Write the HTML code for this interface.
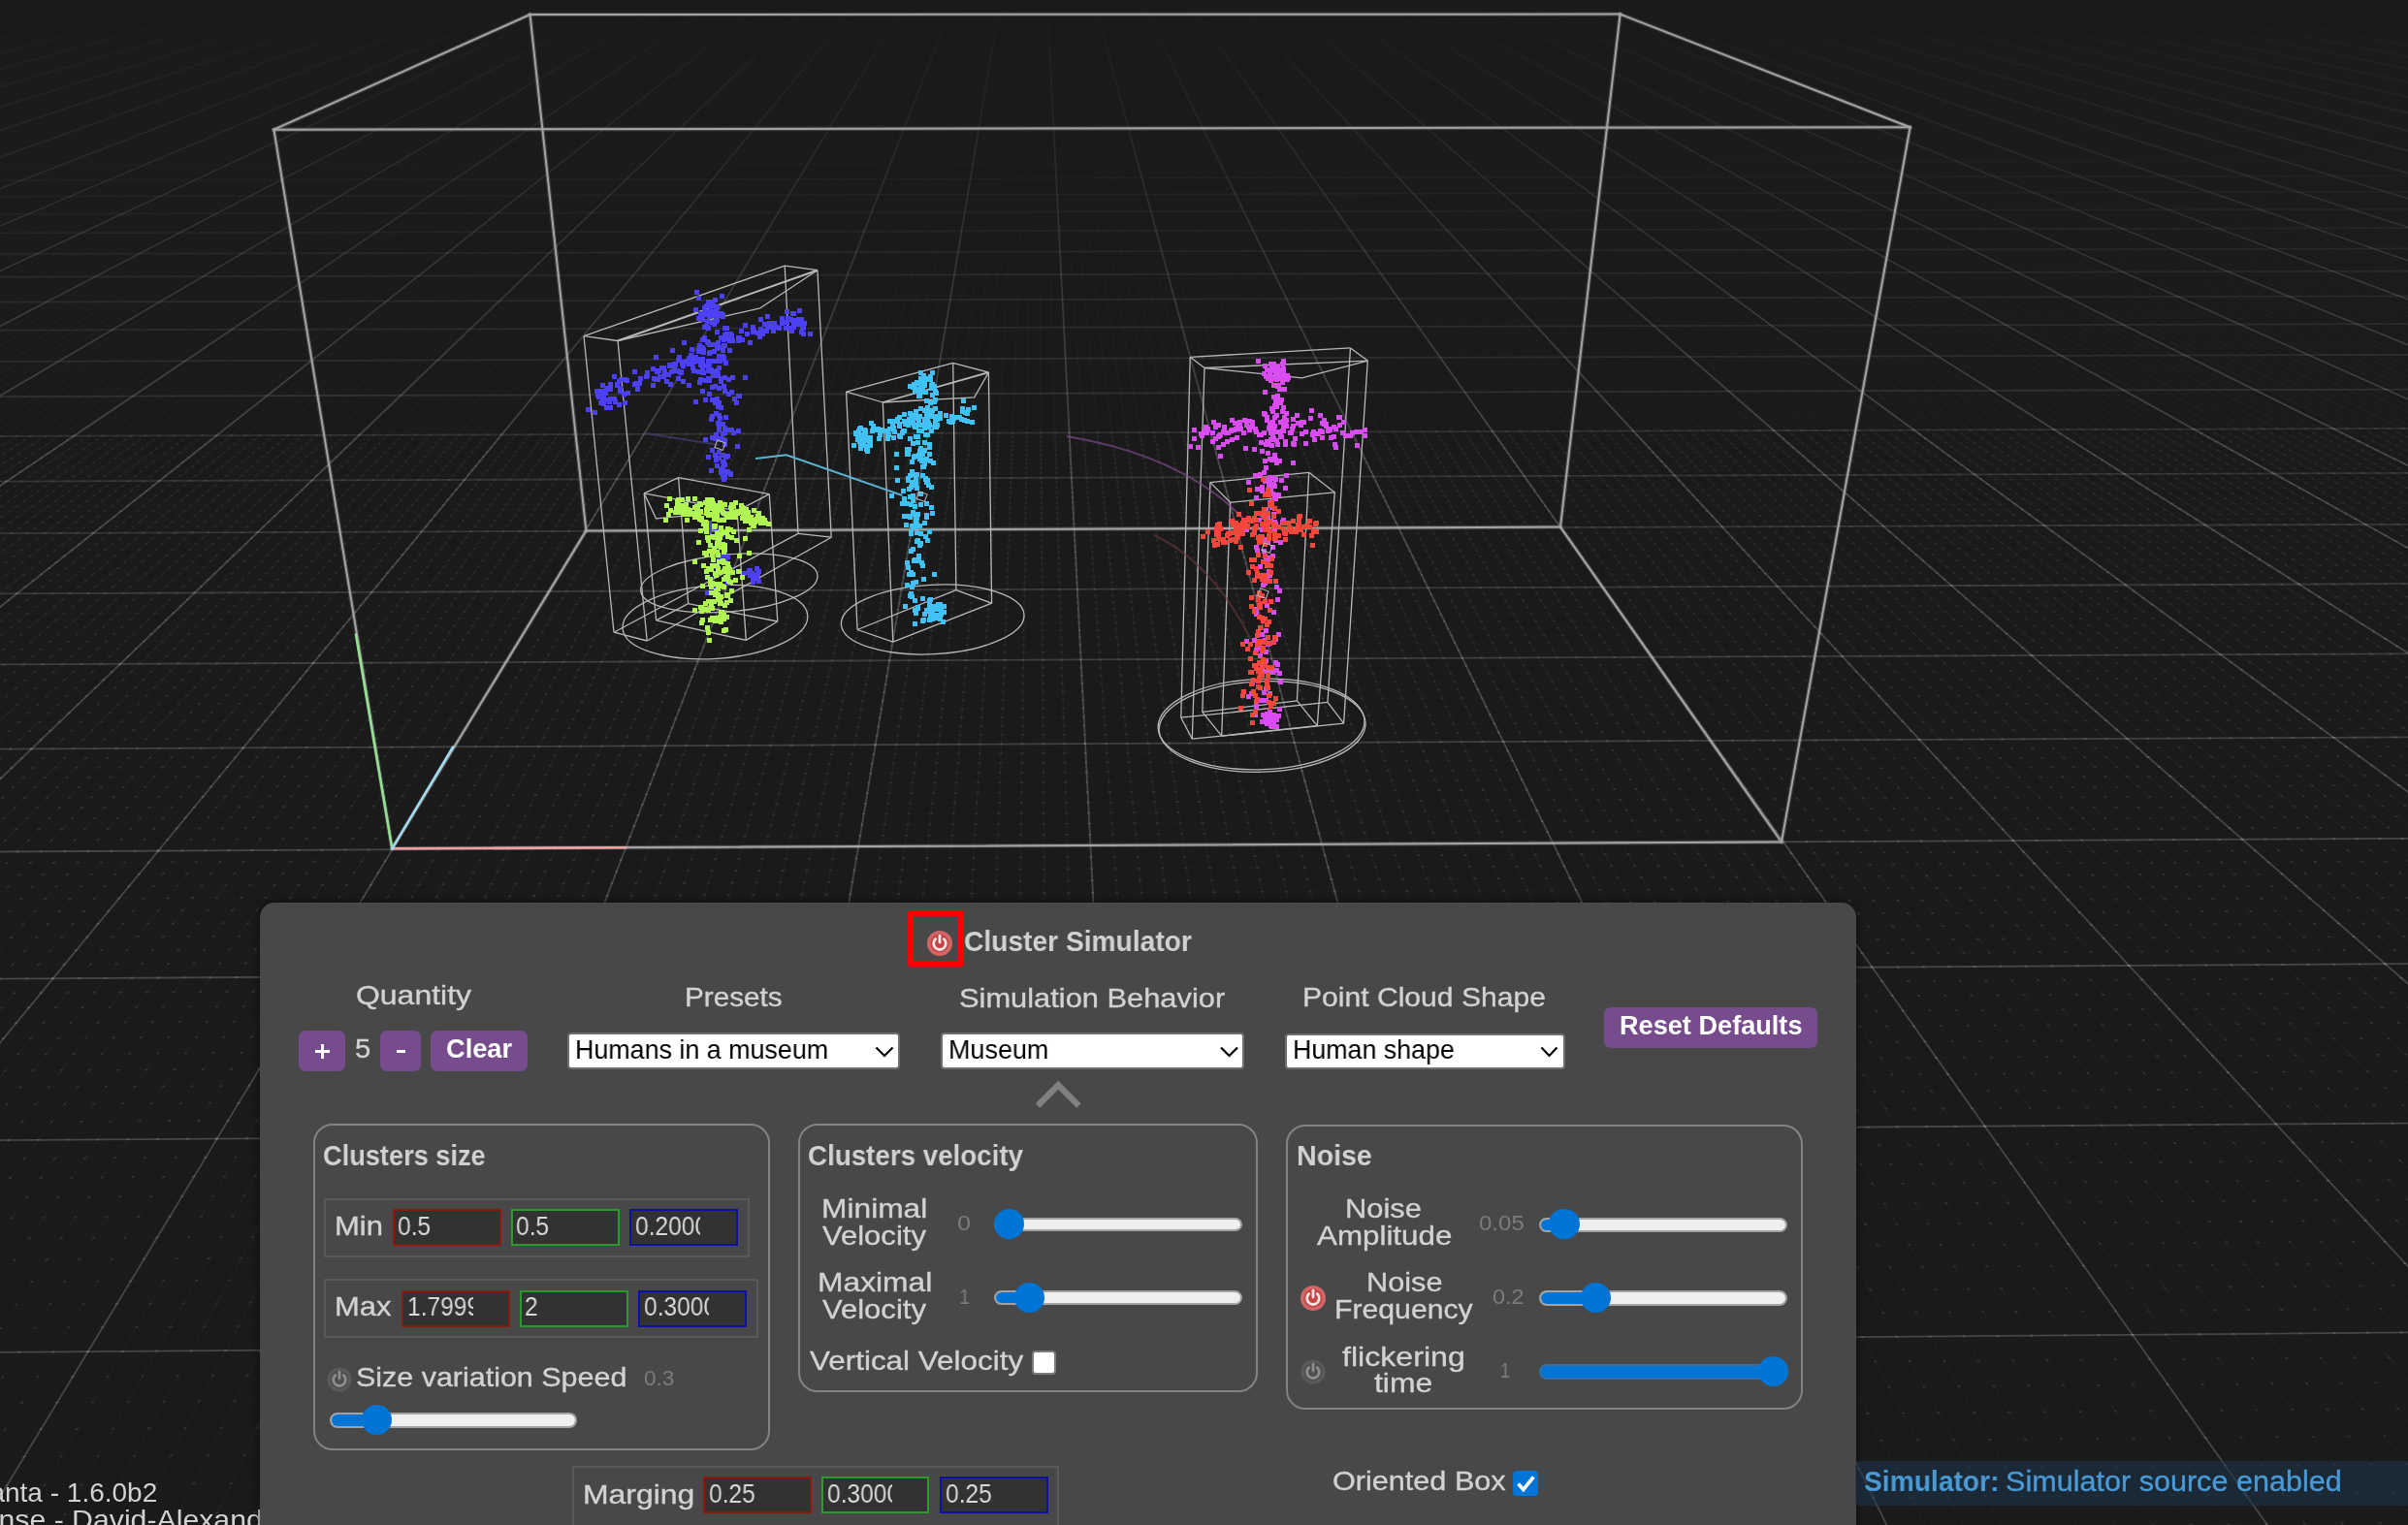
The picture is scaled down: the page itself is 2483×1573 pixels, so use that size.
<!DOCTYPE html>
<html><head><meta charset="utf-8">
<style>
html,body{margin:0;padding:0;width:2483px;height:1573px;overflow:hidden;background:#1a1a1a;font-family:"Liberation Sans",sans-serif}
#scene{position:absolute;left:0;top:0}
#scenewrap{position:absolute;left:0;top:0;width:2483px;height:1573px}
.t{position:absolute;white-space:nowrap;line-height:1;font-family:"Liberation Sans",sans-serif;transform-origin:0 0;will-change:transform}
.abs{position:absolute}
.panel{position:absolute;left:268px;top:931px;width:1646px;height:720px;background:#484848;border-radius:15px;box-shadow:0 0 6px 2px rgba(0,0,0,.35)}
.btn{position:absolute;background:#764c8d;border-radius:7px}
.sel{position:absolute;background:#fff;border:2px solid #6f6f6f;border-radius:4px;box-sizing:border-box}
.fs{position:absolute;border:2px solid #838383;border-radius:20px;box-sizing:border-box}
.row{position:absolute;border:2px solid #595959;box-sizing:border-box}
.inp{position:absolute;background:#323232;border:2px solid;overflow:hidden}
.track{position:absolute;background:#efefef;border:2px solid #a2a2a2;border-radius:9px;box-sizing:border-box;overflow:hidden}
.fill{position:absolute;left:0;top:0;bottom:0;background:#0075d5}
.thumb{position:absolute;background:#0075d5;border-radius:50%}
</style></head><body>
<div id="scenewrap"><svg id="scene" width="2483" height="1573" viewBox="0 0 2483 1573"><defs><linearGradient id="gxM" gradientUnits="userSpaceOnUse" x1="0" y1="0" x2="0" y2="1573"><stop offset="0.0000" stop-color="#fff" stop-opacity="0.0000"/><stop offset="0.0008" stop-color="#fff" stop-opacity="0.0007"/><stop offset="0.0257" stop-color="#fff" stop-opacity="0.0167"/><stop offset="0.0498" stop-color="#fff" stop-opacity="0.0321"/><stop offset="0.0820" stop-color="#fff" stop-opacity="0.0528"/><stop offset="0.1275" stop-color="#fff" stop-opacity="0.0820"/><stop offset="0.1650" stop-color="#fff" stop-opacity="0.1060"/><stop offset="0.1964" stop-color="#fff" stop-opacity="0.1262"/><stop offset="0.2351" stop-color="#fff" stop-opacity="0.1510"/><stop offset="0.2838" stop-color="#fff" stop-opacity="0.1823"/><stop offset="0.3132" stop-color="#fff" stop-opacity="0.1900"/><stop offset="0.3471" stop-color="#fff" stop-opacity="0.1900"/><stop offset="0.3864" stop-color="#fff" stop-opacity="0.1900"/><stop offset="0.4326" stop-color="#fff" stop-opacity="0.1900"/><stop offset="0.4877" stop-color="#fff" stop-opacity="0.1900"/><stop offset="0.5545" stop-color="#fff" stop-opacity="0.1900"/><stop offset="0.6373" stop-color="#fff" stop-opacity="0.1900"/><stop offset="0.7426" stop-color="#fff" stop-opacity="0.1900"/><stop offset="0.8808" stop-color="#fff" stop-opacity="0.1900"/><stop offset="1.0000" stop-color="#fff" stop-opacity="0.1900"/></linearGradient><linearGradient id="gxm" gradientUnits="userSpaceOnUse" x1="0" y1="0" x2="0" y2="1573"><stop offset="0.0000" stop-color="#fff" stop-opacity="0.0000"/><stop offset="0.0008" stop-color="#fff" stop-opacity="0.0001"/><stop offset="0.0257" stop-color="#fff" stop-opacity="0.0028"/><stop offset="0.0498" stop-color="#fff" stop-opacity="0.0054"/><stop offset="0.0820" stop-color="#fff" stop-opacity="0.0089"/><stop offset="0.1275" stop-color="#fff" stop-opacity="0.0138"/><stop offset="0.1650" stop-color="#fff" stop-opacity="0.0179"/><stop offset="0.1964" stop-color="#fff" stop-opacity="0.0213"/><stop offset="0.2351" stop-color="#fff" stop-opacity="0.0254"/><stop offset="0.2838" stop-color="#fff" stop-opacity="0.0307"/><stop offset="0.3132" stop-color="#fff" stop-opacity="0.0320"/><stop offset="0.3471" stop-color="#fff" stop-opacity="0.0320"/><stop offset="0.3864" stop-color="#fff" stop-opacity="0.0320"/><stop offset="0.4326" stop-color="#fff" stop-opacity="0.0320"/><stop offset="0.4877" stop-color="#fff" stop-opacity="0.0320"/><stop offset="0.5545" stop-color="#fff" stop-opacity="0.0320"/><stop offset="0.6373" stop-color="#fff" stop-opacity="0.0320"/><stop offset="0.7426" stop-color="#fff" stop-opacity="0.0320"/><stop offset="0.8808" stop-color="#fff" stop-opacity="0.0320"/><stop offset="1.0000" stop-color="#fff" stop-opacity="0.0320"/></linearGradient></defs><g stroke="url(#gxm)" stroke-width="1"><line x1="-20" y1="-18.5" x2="-12.1" y2="-20"/><line x1="-20" y1="-17.7" x2="-7.7" y2="-20"/><line x1="-20" y1="-16.9" x2="-3.3" y2="-20"/><line x1="-20" y1="-16.1" x2="1.1" y2="-20"/><line x1="-20" y1="-15.2" x2="5.5" y2="-20"/><line x1="-20" y1="-14.4" x2="9.8" y2="-20"/><line x1="-20" y1="-13.5" x2="14.2" y2="-20"/><line x1="-20" y1="-12.7" x2="18.6" y2="-20"/><line x1="-20" y1="-11.8" x2="23" y2="-20"/><line x1="-20" y1="-10" x2="31.8" y2="-20"/><line x1="-20" y1="-9.1" x2="36.2" y2="-20"/><line x1="-20" y1="-8.2" x2="40.6" y2="-20"/><line x1="-20" y1="-7.3" x2="44.9" y2="-20"/><line x1="-20" y1="-6.4" x2="49.3" y2="-20"/><line x1="-20" y1="-5.5" x2="53.7" y2="-20"/><line x1="-20" y1="-4.6" x2="58.1" y2="-20"/><line x1="-20" y1="-3.6" x2="62.5" y2="-20"/><line x1="-20" y1="-2.7" x2="66.9" y2="-20"/><line x1="-20" y1="-0.8" x2="75.6" y2="-20"/><line x1="-20" y1="0.2" x2="80" y2="-20"/><line x1="-20" y1="1.2" x2="84.4" y2="-20"/><line x1="-20" y1="2.2" x2="88.8" y2="-20"/><line x1="-20" y1="3.2" x2="93.2" y2="-20"/><line x1="-20" y1="4.2" x2="97.6" y2="-20"/><line x1="-20" y1="5.2" x2="102" y2="-20"/><line x1="-20" y1="6.2" x2="106.3" y2="-20"/><line x1="-20" y1="7.3" x2="110.7" y2="-20"/><line x1="-20" y1="9.4" x2="119.5" y2="-20"/><line x1="-20" y1="10.4" x2="123.9" y2="-20"/><line x1="-20" y1="11.5" x2="128.3" y2="-20"/><line x1="-20" y1="12.6" x2="132.7" y2="-20"/><line x1="-20" y1="13.7" x2="137.1" y2="-20"/><line x1="-20" y1="14.8" x2="141.4" y2="-20"/><line x1="-20" y1="15.9" x2="145.8" y2="-20"/><line x1="-20" y1="17" x2="150.2" y2="-20"/><line x1="-20" y1="18.2" x2="154.6" y2="-20"/><line x1="-20" y1="20.5" x2="163.4" y2="-20"/><line x1="-20" y1="21.6" x2="167.7" y2="-20"/><line x1="-20" y1="22.8" x2="172.1" y2="-20"/><line x1="-20" y1="24" x2="176.5" y2="-20"/><line x1="-20" y1="25.2" x2="180.9" y2="-20"/><line x1="-20" y1="26.4" x2="185.3" y2="-20"/><line x1="-20" y1="27.7" x2="189.7" y2="-20"/><line x1="-20" y1="28.9" x2="194.1" y2="-20"/><line x1="-20" y1="30.1" x2="198.4" y2="-20"/><line x1="-20" y1="32.7" x2="207.2" y2="-20"/><line x1="-20" y1="34" x2="211.6" y2="-20"/><line x1="-20" y1="35.3" x2="216" y2="-20"/><line x1="-20" y1="36.6" x2="220.4" y2="-20"/><line x1="-20" y1="37.9" x2="224.8" y2="-20"/><line x1="-20" y1="39.3" x2="229.1" y2="-20"/><line x1="-20" y1="40.6" x2="233.5" y2="-20"/><line x1="-20" y1="42" x2="237.9" y2="-20"/><line x1="-20" y1="43.4" x2="242.3" y2="-20"/><line x1="-20" y1="46.2" x2="251.1" y2="-20"/><line x1="-20" y1="47.7" x2="255.4" y2="-20"/><line x1="-20" y1="49.1" x2="259.8" y2="-20"/><line x1="-20" y1="50.6" x2="264.2" y2="-20"/><line x1="-20" y1="52.1" x2="268.6" y2="-20"/><line x1="-20" y1="53.6" x2="273" y2="-20"/><line x1="-20" y1="55.1" x2="277.4" y2="-20"/><line x1="-20" y1="56.6" x2="281.7" y2="-20"/><line x1="-20" y1="58.2" x2="286.1" y2="-20"/><line x1="-20" y1="61.3" x2="294.9" y2="-20"/><line x1="-20" y1="62.9" x2="299.3" y2="-20"/><line x1="-20" y1="64.5" x2="303.7" y2="-20"/><line x1="-20" y1="66.2" x2="308" y2="-20"/><line x1="-20" y1="67.8" x2="312.4" y2="-20"/><line x1="-20" y1="69.5" x2="316.8" y2="-20"/><line x1="-20" y1="71.2" x2="321.2" y2="-20"/><line x1="-20" y1="72.9" x2="325.6" y2="-20"/><line x1="-20" y1="74.6" x2="330" y2="-20"/><line x1="-20" y1="78.2" x2="338.7" y2="-20"/><line x1="-20" y1="80" x2="343.1" y2="-20"/><line x1="-20" y1="81.8" x2="347.5" y2="-20"/><line x1="-20" y1="83.7" x2="351.9" y2="-20"/><line x1="-20" y1="85.5" x2="356.3" y2="-20"/><line x1="-20" y1="87.4" x2="360.6" y2="-20"/><line x1="-20" y1="89.3" x2="365" y2="-20"/><line x1="-20" y1="91.3" x2="369.4" y2="-20"/><line x1="-20" y1="93.2" x2="373.8" y2="-20"/><line x1="-20" y1="97.2" x2="382.6" y2="-20"/><line x1="-20" y1="99.3" x2="386.9" y2="-20"/><line x1="-20" y1="101.3" x2="391.3" y2="-20"/><line x1="-20" y1="103.4" x2="395.7" y2="-20"/><line x1="-20" y1="105.5" x2="400.1" y2="-20"/><line x1="-20" y1="107.7" x2="404.5" y2="-20"/><line x1="-20" y1="109.9" x2="408.9" y2="-20"/><line x1="-20" y1="112.1" x2="413.2" y2="-20"/><line x1="-20" y1="114.3" x2="417.6" y2="-20"/><line x1="-20" y1="118.9" x2="426.4" y2="-20"/><line x1="-20" y1="121.2" x2="430.8" y2="-20"/><line x1="-20" y1="123.5" x2="435.1" y2="-20"/><line x1="-20" y1="125.9" x2="439.5" y2="-20"/><line x1="-20" y1="128.4" x2="443.9" y2="-20"/><line x1="-20" y1="130.8" x2="448.3" y2="-20"/><line x1="-20" y1="133.3" x2="452.7" y2="-20"/><line x1="-20" y1="135.8" x2="457.1" y2="-20"/><line x1="-20" y1="138.4" x2="461.4" y2="-20"/><line x1="-20" y1="143.7" x2="470.2" y2="-20"/><line x1="-20" y1="146.3" x2="474.6" y2="-20"/><line x1="-20" y1="149.1" x2="479" y2="-20"/><line x1="-20" y1="151.8" x2="483.3" y2="-20"/><line x1="-20" y1="154.6" x2="487.7" y2="-20"/><line x1="-20" y1="157.5" x2="492.1" y2="-20"/><line x1="-20" y1="160.4" x2="496.5" y2="-20"/><line x1="-20" y1="163.3" x2="500.9" y2="-20"/><line x1="-20" y1="166.3" x2="505.2" y2="-20"/><line x1="-20" y1="172.4" x2="514" y2="-20"/><line x1="-20" y1="175.5" x2="518.4" y2="-20"/><line x1="-20" y1="178.7" x2="522.8" y2="-20"/><line x1="-20" y1="181.9" x2="527.2" y2="-20"/><line x1="-20" y1="185.2" x2="531.5" y2="-20"/><line x1="-20" y1="188.5" x2="535.9" y2="-20"/><line x1="-20" y1="191.9" x2="540.3" y2="-20"/><line x1="-20" y1="195.3" x2="544.7" y2="-20"/><line x1="-20" y1="198.8" x2="549.1" y2="-20"/><line x1="-20" y1="206" x2="557.8" y2="-20"/><line x1="-20" y1="209.7" x2="562.2" y2="-20"/><line x1="-20" y1="213.4" x2="566.6" y2="-20"/><line x1="-20" y1="217.2" x2="571" y2="-20"/><line x1="-20" y1="221.1" x2="575.3" y2="-20"/><line x1="-20" y1="225.1" x2="579.7" y2="-20"/><line x1="-20" y1="229.1" x2="584.1" y2="-20"/><line x1="-20" y1="233.2" x2="588.5" y2="-20"/><line x1="-20" y1="237.4" x2="592.9" y2="-20"/><line x1="-20" y1="245.9" x2="601.6" y2="-20"/><line x1="-20" y1="250.4" x2="606" y2="-20"/><line x1="-20" y1="254.8" x2="610.4" y2="-20"/><line x1="-20" y1="259.4" x2="614.8" y2="-20"/><line x1="-20" y1="264.1" x2="619.1" y2="-20"/><line x1="-20" y1="268.9" x2="623.5" y2="-20"/><line x1="-20" y1="273.7" x2="627.9" y2="-20"/><line x1="-20" y1="278.7" x2="632.3" y2="-20"/><line x1="-20" y1="283.7" x2="636.6" y2="-20"/><line x1="-20" y1="294.2" x2="645.4" y2="-20"/><line x1="-20" y1="299.5" x2="649.8" y2="-20"/><line x1="-20" y1="305" x2="654.2" y2="-20"/><line x1="-20" y1="310.6" x2="658.5" y2="-20"/><line x1="-20" y1="316.4" x2="662.9" y2="-20"/><line x1="-20" y1="322.2" x2="667.3" y2="-20"/><line x1="-20" y1="328.2" x2="671.7" y2="-20"/><line x1="-20" y1="334.3" x2="676.1" y2="-20"/><line x1="-20" y1="340.6" x2="680.4" y2="-20"/><line x1="-20" y1="353.5" x2="689.2" y2="-20"/><line x1="-20" y1="360.2" x2="693.6" y2="-20"/><line x1="-20" y1="367" x2="698" y2="-20"/><line x1="-20" y1="374.1" x2="702.3" y2="-20"/><line x1="-20" y1="381.2" x2="706.7" y2="-20"/><line x1="-20" y1="388.6" x2="711.1" y2="-20"/><line x1="-20" y1="396.2" x2="715.5" y2="-20"/><line x1="-20" y1="403.9" x2="719.8" y2="-20"/><line x1="-20" y1="411.8" x2="724.2" y2="-20"/><line x1="-20" y1="428.3" x2="733" y2="-20"/><line x1="-20" y1="436.9" x2="737.4" y2="-20"/><line x1="-20" y1="445.7" x2="741.7" y2="-20"/><line x1="-20" y1="454.7" x2="746.1" y2="-20"/><line x1="-20" y1="464" x2="750.5" y2="-20"/><line x1="-20" y1="473.5" x2="754.9" y2="-20"/><line x1="-20" y1="483.4" x2="759.2" y2="-20"/><line x1="-20" y1="493.5" x2="763.6" y2="-20"/><line x1="-20" y1="503.9" x2="768" y2="-20"/><line x1="-20" y1="525.6" x2="776.8" y2="-20"/><line x1="-20" y1="536.9" x2="781.1" y2="-20"/><line x1="-20" y1="548.6" x2="785.5" y2="-20"/><line x1="-20" y1="560.7" x2="789.9" y2="-20"/><line x1="-20" y1="573.2" x2="794.3" y2="-20"/><line x1="-20" y1="586" x2="798.6" y2="-20"/><line x1="-20" y1="599.3" x2="803" y2="-20"/><line x1="-20" y1="613.1" x2="807.4" y2="-20"/><line x1="-20" y1="627.3" x2="811.8" y2="-20"/><line x1="-20" y1="657.2" x2="820.5" y2="-20"/><line x1="-20" y1="672.9" x2="824.9" y2="-20"/><line x1="-20" y1="689.3" x2="829.3" y2="-20"/><line x1="-20" y1="706.2" x2="833.7" y2="-20"/><line x1="-20" y1="723.8" x2="838" y2="-20"/><line x1="-20" y1="742.1" x2="842.4" y2="-20"/><line x1="-20" y1="761.1" x2="846.8" y2="-20"/><line x1="-20" y1="780.8" x2="851.2" y2="-20"/><line x1="-20" y1="801.4" x2="855.5" y2="-20"/><line x1="-20" y1="845.2" x2="864.3" y2="-20"/><line x1="-20" y1="868.5" x2="868.7" y2="-20"/><line x1="-20" y1="892.9" x2="873" y2="-20"/><line x1="-20" y1="918.4" x2="877.4" y2="-20"/><line x1="-20" y1="945.1" x2="881.8" y2="-20"/><line x1="-20" y1="973" x2="886.2" y2="-20"/><line x1="-20" y1="1002.4" x2="890.5" y2="-20"/><line x1="-20" y1="1033.2" x2="894.9" y2="-20"/><line x1="-20" y1="1065.6" x2="899.3" y2="-20"/><line x1="-20" y1="1135.8" x2="908.1" y2="-20"/><line x1="-20" y1="1173.8" x2="912.4" y2="-20"/><line x1="-20" y1="1214" x2="916.8" y2="-20"/><line x1="-20" y1="1256.6" x2="921.2" y2="-20"/><line x1="-20" y1="1301.8" x2="925.6" y2="-20"/><line x1="-20" y1="1349.9" x2="929.9" y2="-20"/><line x1="-20" y1="1401.1" x2="934.3" y2="-20"/><line x1="-20" y1="1455.8" x2="938.7" y2="-20"/><line x1="-20" y1="1514.2" x2="943.1" y2="-20"/><line x1="10" y1="1593" x2="951.8" y2="-20"/><line x1="49.7" y1="1593" x2="956.2" y2="-20"/><line x1="89.4" y1="1593" x2="960.6" y2="-20"/><line x1="129.1" y1="1593" x2="964.9" y2="-20"/><line x1="168.8" y1="1593" x2="969.3" y2="-20"/><line x1="208.5" y1="1593" x2="973.7" y2="-20"/><line x1="248.3" y1="1593" x2="978.1" y2="-20"/><line x1="288" y1="1593" x2="982.4" y2="-20"/><line x1="327.7" y1="1593" x2="986.8" y2="-20"/><line x1="407.1" y1="1593" x2="995.6" y2="-20"/><line x1="446.8" y1="1593" x2="999.9" y2="-20"/><line x1="486.5" y1="1593" x2="1004.3" y2="-20"/><line x1="526.2" y1="1593" x2="1008.7" y2="-20"/><line x1="565.9" y1="1593" x2="1013.1" y2="-20"/><line x1="605.6" y1="1593" x2="1017.4" y2="-20"/><line x1="645.3" y1="1593" x2="1021.8" y2="-20"/><line x1="685" y1="1593" x2="1026.2" y2="-20"/><line x1="724.7" y1="1593" x2="1030.5" y2="-20"/><line x1="804.1" y1="1593" x2="1039.3" y2="-20"/><line x1="843.8" y1="1593" x2="1043.7" y2="-20"/><line x1="883.5" y1="1593" x2="1048" y2="-20"/><line x1="923.2" y1="1593" x2="1052.4" y2="-20"/><line x1="962.9" y1="1593" x2="1056.8" y2="-20"/><line x1="1002.6" y1="1593" x2="1061.2" y2="-20"/><line x1="1042.3" y1="1593" x2="1065.5" y2="-20"/><line x1="1082" y1="1593" x2="1069.9" y2="-20"/><line x1="1121.7" y1="1593" x2="1074.3" y2="-20"/><line x1="1201.1" y1="1593" x2="1083" y2="-20"/><line x1="1240.8" y1="1593" x2="1087.4" y2="-20"/><line x1="1280.5" y1="1593" x2="1091.8" y2="-20"/><line x1="1320.2" y1="1593" x2="1096.2" y2="-20"/><line x1="1359.9" y1="1593" x2="1100.5" y2="-20"/><line x1="1399.6" y1="1593" x2="1104.9" y2="-20"/><line x1="1439.3" y1="1593" x2="1109.3" y2="-20"/><line x1="1479" y1="1593" x2="1113.6" y2="-20"/><line x1="1518.7" y1="1593" x2="1118" y2="-20"/><line x1="1598" y1="1593" x2="1126.8" y2="-20"/><line x1="1637.7" y1="1593" x2="1131.1" y2="-20"/><line x1="1677.4" y1="1593" x2="1135.5" y2="-20"/><line x1="1717.1" y1="1593" x2="1139.9" y2="-20"/><line x1="1756.8" y1="1593" x2="1144.3" y2="-20"/><line x1="1796.5" y1="1593" x2="1148.6" y2="-20"/><line x1="1836.2" y1="1593" x2="1153" y2="-20"/><line x1="1875.9" y1="1593" x2="1157.4" y2="-20"/><line x1="1915.6" y1="1593" x2="1161.7" y2="-20"/><line x1="1994.9" y1="1593" x2="1170.5" y2="-20"/><line x1="2034.6" y1="1593" x2="1174.9" y2="-20"/><line x1="2074.3" y1="1593" x2="1179.2" y2="-20"/><line x1="2114" y1="1593" x2="1183.6" y2="-20"/><line x1="2153.7" y1="1593" x2="1188" y2="-20"/><line x1="2193.3" y1="1593" x2="1192.4" y2="-20"/><line x1="2233" y1="1593" x2="1196.7" y2="-20"/><line x1="2272.7" y1="1593" x2="1201.1" y2="-20"/><line x1="2312.4" y1="1593" x2="1205.5" y2="-20"/><line x1="2391.8" y1="1593" x2="1214.2" y2="-20"/><line x1="2431.4" y1="1593" x2="1218.6" y2="-20"/><line x1="2471.1" y1="1593" x2="1223" y2="-20"/><line x1="2503" y1="1583.2" x2="1227.3" y2="-20"/><line x1="2503" y1="1534.9" x2="1231.7" y2="-20"/><line x1="2503" y1="1489.2" x2="1236.1" y2="-20"/><line x1="2503" y1="1445.8" x2="1240.4" y2="-20"/><line x1="2503" y1="1404.5" x2="1244.8" y2="-20"/><line x1="2503" y1="1365.2" x2="1249.2" y2="-20"/><line x1="2503" y1="1292.1" x2="1257.9" y2="-20"/><line x1="2503" y1="1258" x2="1262.3" y2="-20"/><line x1="2503" y1="1225.4" x2="1266.7" y2="-20"/><line x1="2503" y1="1194.3" x2="1271" y2="-20"/><line x1="2503" y1="1164.4" x2="1275.4" y2="-20"/><line x1="2503" y1="1135.8" x2="1279.8" y2="-20"/><line x1="2503" y1="1108.3" x2="1284.2" y2="-20"/><line x1="2503" y1="1081.9" x2="1288.5" y2="-20"/><line x1="2503" y1="1056.6" x2="1292.9" y2="-20"/><line x1="2503" y1="1008.8" x2="1301.6" y2="-20"/><line x1="2503" y1="986.2" x2="1306" y2="-20"/><line x1="2503" y1="964.4" x2="1310.4" y2="-20"/><line x1="2503" y1="943.4" x2="1314.7" y2="-20"/><line x1="2503" y1="923.1" x2="1319.1" y2="-20"/><line x1="2503" y1="903.5" x2="1323.5" y2="-20"/><line x1="2503" y1="884.6" x2="1327.9" y2="-20"/><line x1="2503" y1="866.3" x2="1332.2" y2="-20"/><line x1="2503" y1="848.6" x2="1336.6" y2="-20"/><line x1="2503" y1="814.9" x2="1345.3" y2="-20"/><line x1="2503" y1="798.8" x2="1349.7" y2="-20"/><line x1="2503" y1="783.2" x2="1354.1" y2="-20"/><line x1="2503" y1="768.1" x2="1358.4" y2="-20"/><line x1="2503" y1="753.5" x2="1362.8" y2="-20"/><line x1="2503" y1="739.2" x2="1367.2" y2="-20"/><line x1="2503" y1="725.4" x2="1371.6" y2="-20"/><line x1="2503" y1="712" x2="1375.9" y2="-20"/><line x1="2503" y1="698.9" x2="1380.3" y2="-20"/><line x1="2503" y1="673.9" x2="1389" y2="-20"/><line x1="2503" y1="661.9" x2="1393.4" y2="-20"/><line x1="2503" y1="650.2" x2="1397.8" y2="-20"/><line x1="2503" y1="638.8" x2="1402.1" y2="-20"/><line x1="2503" y1="627.7" x2="1406.5" y2="-20"/><line x1="2503" y1="616.9" x2="1410.9" y2="-20"/><line x1="2503" y1="606.3" x2="1415.3" y2="-20"/><line x1="2503" y1="596.1" x2="1419.6" y2="-20"/><line x1="2503" y1="586" x2="1424" y2="-20"/><line x1="2503" y1="566.7" x2="1432.7" y2="-20"/><line x1="2503" y1="557.4" x2="1437.1" y2="-20"/><line x1="2503" y1="548.3" x2="1441.5" y2="-20"/><line x1="2503" y1="539.4" x2="1445.8" y2="-20"/><line x1="2503" y1="530.7" x2="1450.2" y2="-20"/><line x1="2503" y1="522.2" x2="1454.6" y2="-20"/><line x1="2503" y1="513.9" x2="1458.9" y2="-20"/><line x1="2503" y1="505.8" x2="1463.3" y2="-20"/><line x1="2503" y1="497.9" x2="1467.7" y2="-20"/><line x1="2503" y1="482.5" x2="1476.4" y2="-20"/><line x1="2503" y1="475.1" x2="1480.8" y2="-20"/><line x1="2503" y1="467.8" x2="1485.1" y2="-20"/><line x1="2503" y1="460.7" x2="1489.5" y2="-20"/><line x1="2503" y1="453.7" x2="1493.9" y2="-20"/><line x1="2503" y1="446.8" x2="1498.3" y2="-20"/><line x1="2503" y1="440.1" x2="1502.6" y2="-20"/><line x1="2503" y1="433.5" x2="1507" y2="-20"/><line x1="2503" y1="427.1" x2="1511.4" y2="-20"/><line x1="2503" y1="414.6" x2="1520.1" y2="-20"/><line x1="2503" y1="408.5" x2="1524.5" y2="-20"/><line x1="2503" y1="402.6" x2="1528.8" y2="-20"/><line x1="2503" y1="396.7" x2="1533.2" y2="-20"/><line x1="2503" y1="391" x2="1537.6" y2="-20"/><line x1="2503" y1="385.3" x2="1541.9" y2="-20"/><line x1="2503" y1="379.8" x2="1546.3" y2="-20"/><line x1="2503" y1="374.4" x2="1550.7" y2="-20"/><line x1="2503" y1="369.1" x2="1555" y2="-20"/><line x1="2503" y1="358.7" x2="1563.8" y2="-20"/><line x1="2503" y1="353.6" x2="1568.1" y2="-20"/><line x1="2503" y1="348.6" x2="1572.5" y2="-20"/><line x1="2503" y1="343.8" x2="1576.9" y2="-20"/><line x1="2503" y1="339" x2="1581.2" y2="-20"/><line x1="2503" y1="334.3" x2="1585.6" y2="-20"/><line x1="2503" y1="329.6" x2="1590" y2="-20"/><line x1="2503" y1="325.1" x2="1594.3" y2="-20"/><line x1="2503" y1="320.6" x2="1598.7" y2="-20"/><line x1="2503" y1="311.8" x2="1607.4" y2="-20"/><line x1="2503" y1="307.5" x2="1611.8" y2="-20"/><line x1="2503" y1="303.3" x2="1616.2" y2="-20"/><line x1="2503" y1="299.2" x2="1620.5" y2="-20"/><line x1="2503" y1="295.1" x2="1624.9" y2="-20"/><line x1="2503" y1="291.1" x2="1629.3" y2="-20"/><line x1="2503" y1="287.2" x2="1633.6" y2="-20"/><line x1="2503" y1="283.3" x2="1638" y2="-20"/><line x1="2503" y1="279.5" x2="1642.4" y2="-20"/><line x1="2503" y1="272" x2="1651.1" y2="-20"/><line x1="2503" y1="268.3" x2="1655.5" y2="-20"/><line x1="2503" y1="264.7" x2="1659.8" y2="-20"/><line x1="2503" y1="261.2" x2="1664.2" y2="-20"/><line x1="2503" y1="257.7" x2="1668.6" y2="-20"/><line x1="2503" y1="254.2" x2="1672.9" y2="-20"/><line x1="2503" y1="250.8" x2="1677.3" y2="-20"/><line x1="2503" y1="247.5" x2="1681.7" y2="-20"/><line x1="2503" y1="244.2" x2="1686" y2="-20"/><line x1="2503" y1="237.7" x2="1694.8" y2="-20"/><line x1="2503" y1="234.5" x2="1699.1" y2="-20"/><line x1="2503" y1="231.4" x2="1703.5" y2="-20"/><line x1="2503" y1="228.3" x2="1707.9" y2="-20"/><line x1="2503" y1="225.3" x2="1712.2" y2="-20"/><line x1="2503" y1="222.3" x2="1716.6" y2="-20"/><line x1="2503" y1="219.3" x2="1720.9" y2="-20"/><line x1="2503" y1="216.4" x2="1725.3" y2="-20"/><line x1="2503" y1="213.6" x2="1729.7" y2="-20"/><line x1="2503" y1="207.9" x2="1738.4" y2="-20"/><line x1="2503" y1="205.1" x2="1742.8" y2="-20"/><line x1="2503" y1="202.4" x2="1747.1" y2="-20"/><line x1="2503" y1="199.7" x2="1751.5" y2="-20"/><line x1="2503" y1="197" x2="1755.9" y2="-20"/><line x1="2503" y1="194.4" x2="1760.2" y2="-20"/><line x1="2503" y1="191.8" x2="1764.6" y2="-20"/><line x1="2503" y1="189.3" x2="1769" y2="-20"/><line x1="2503" y1="186.7" x2="1773.3" y2="-20"/><line x1="2503" y1="181.8" x2="1782.1" y2="-20"/><line x1="2503" y1="179.3" x2="1786.4" y2="-20"/><line x1="2503" y1="176.9" x2="1790.8" y2="-20"/><line x1="2503" y1="174.5" x2="1795.1" y2="-20"/><line x1="2503" y1="172.2" x2="1799.5" y2="-20"/><line x1="2503" y1="169.8" x2="1803.9" y2="-20"/><line x1="2503" y1="167.5" x2="1808.2" y2="-20"/><line x1="2503" y1="165.3" x2="1812.6" y2="-20"/><line x1="2503" y1="163" x2="1817" y2="-20"/><line x1="2503" y1="158.6" x2="1825.7" y2="-20"/><line x1="2503" y1="156.5" x2="1830.1" y2="-20"/><line x1="2503" y1="154.3" x2="1834.4" y2="-20"/><line x1="2503" y1="152.2" x2="1838.8" y2="-20"/><line x1="2503" y1="150.1" x2="1843.2" y2="-20"/><line x1="2503" y1="148" x2="1847.5" y2="-20"/><line x1="2503" y1="146" x2="1851.9" y2="-20"/><line x1="2503" y1="144" x2="1856.2" y2="-20"/><line x1="2503" y1="141.9" x2="1860.6" y2="-20"/><line x1="2503" y1="138" x2="1869.3" y2="-20"/><line x1="2503" y1="136.1" x2="1873.7" y2="-20"/><line x1="2503" y1="134.2" x2="1878.1" y2="-20"/><line x1="2503" y1="132.3" x2="1882.4" y2="-20"/><line x1="2503" y1="130.4" x2="1886.8" y2="-20"/><line x1="2503" y1="128.5" x2="1891.1" y2="-20"/><line x1="2503" y1="126.7" x2="1895.5" y2="-20"/><line x1="2503" y1="124.9" x2="1899.9" y2="-20"/><line x1="2503" y1="123.1" x2="1904.2" y2="-20"/><line x1="2503" y1="119.5" x2="1913" y2="-20"/><line x1="2503" y1="117.8" x2="1917.3" y2="-20"/><line x1="2503" y1="116.1" x2="1921.7" y2="-20"/><line x1="2503" y1="114.4" x2="1926" y2="-20"/><line x1="2503" y1="112.7" x2="1930.4" y2="-20"/><line x1="2503" y1="111" x2="1934.8" y2="-20"/><line x1="2503" y1="109.3" x2="1939.1" y2="-20"/><line x1="2503" y1="107.7" x2="1943.5" y2="-20"/><line x1="2503" y1="106.1" x2="1947.9" y2="-20"/><line x1="2503" y1="102.9" x2="1956.6" y2="-20"/><line x1="2503" y1="101.3" x2="1960.9" y2="-20"/><line x1="2503" y1="99.7" x2="1965.3" y2="-20"/><line x1="2503" y1="98.2" x2="1969.7" y2="-20"/><line x1="2503" y1="96.7" x2="1974" y2="-20"/><line x1="2503" y1="95.1" x2="1978.4" y2="-20"/><line x1="2503" y1="93.6" x2="1982.8" y2="-20"/><line x1="2503" y1="92.1" x2="1987.1" y2="-20"/><line x1="2503" y1="90.7" x2="1991.5" y2="-20"/><line x1="2503" y1="87.8" x2="2000.2" y2="-20"/><line x1="2503" y1="86.3" x2="2004.6" y2="-20"/><line x1="2503" y1="84.9" x2="2008.9" y2="-20"/><line x1="2503" y1="83.5" x2="2013.3" y2="-20"/><line x1="2503" y1="82.1" x2="2017.6" y2="-20"/><line x1="2503" y1="80.7" x2="2022" y2="-20"/><line x1="2503" y1="79.4" x2="2026.4" y2="-20"/><line x1="2503" y1="78" x2="2030.7" y2="-20"/><line x1="2503" y1="76.7" x2="2035.1" y2="-20"/><line x1="2503" y1="74" x2="2043.8" y2="-20"/><line x1="2503" y1="72.7" x2="2048.2" y2="-20"/><line x1="2503" y1="71.4" x2="2052.5" y2="-20"/><line x1="2503" y1="70.1" x2="2056.9" y2="-20"/><line x1="2503" y1="68.9" x2="2061.3" y2="-20"/><line x1="2503" y1="67.6" x2="2065.6" y2="-20"/><line x1="2503" y1="66.3" x2="2070" y2="-20"/><line x1="2503" y1="65.1" x2="2074.3" y2="-20"/><line x1="2503" y1="63.9" x2="2078.7" y2="-20"/><line x1="2503" y1="61.4" x2="2087.4" y2="-20"/><line x1="2503" y1="60.2" x2="2091.8" y2="-20"/><line x1="2503" y1="59.1" x2="2096.1" y2="-20"/><line x1="2503" y1="57.9" x2="2100.5" y2="-20"/><line x1="2503" y1="56.7" x2="2104.9" y2="-20"/><line x1="2503" y1="55.6" x2="2109.2" y2="-20"/><line x1="2503" y1="54.4" x2="2113.6" y2="-20"/><line x1="2503" y1="53.3" x2="2117.9" y2="-20"/><line x1="2503" y1="52.1" x2="2122.3" y2="-20"/><line x1="2503" y1="49.9" x2="2131" y2="-20"/><line x1="2503" y1="48.8" x2="2135.4" y2="-20"/><line x1="2503" y1="47.7" x2="2139.7" y2="-20"/><line x1="2503" y1="46.6" x2="2144.1" y2="-20"/><line x1="2503" y1="45.6" x2="2148.5" y2="-20"/><line x1="2503" y1="44.5" x2="2152.8" y2="-20"/><line x1="2503" y1="43.4" x2="2157.2" y2="-20"/><line x1="2503" y1="42.4" x2="2161.5" y2="-20"/><line x1="2503" y1="41.3" x2="2165.9" y2="-20"/><line x1="2503" y1="39.3" x2="2174.6" y2="-20"/><line x1="2503" y1="38.3" x2="2179" y2="-20"/><line x1="2503" y1="37.3" x2="2183.3" y2="-20"/><line x1="2503" y1="36.3" x2="2187.7" y2="-20"/><line x1="2503" y1="35.3" x2="2192.1" y2="-20"/><line x1="2503" y1="34.3" x2="2196.4" y2="-20"/><line x1="2503" y1="33.3" x2="2200.8" y2="-20"/><line x1="2503" y1="32.3" x2="2205.1" y2="-20"/><line x1="2503" y1="31.4" x2="2209.5" y2="-20"/><line x1="2503" y1="29.5" x2="2218.2" y2="-20"/><line x1="2503" y1="28.5" x2="2222.6" y2="-20"/><line x1="2503" y1="27.6" x2="2226.9" y2="-20"/><line x1="2503" y1="26.7" x2="2231.3" y2="-20"/><line x1="2503" y1="25.7" x2="2235.6" y2="-20"/><line x1="2503" y1="24.8" x2="2240" y2="-20"/><line x1="2503" y1="23.9" x2="2244.4" y2="-20"/><line x1="2503" y1="23" x2="2248.7" y2="-20"/><line x1="2503" y1="22.1" x2="2253.1" y2="-20"/><line x1="2503" y1="20.4" x2="2261.8" y2="-20"/><line x1="2503" y1="19.5" x2="2266.2" y2="-20"/><line x1="2503" y1="18.6" x2="2270.5" y2="-20"/><line x1="2503" y1="17.8" x2="2274.9" y2="-20"/><line x1="2503" y1="16.9" x2="2279.2" y2="-20"/><line x1="2503" y1="16.1" x2="2283.6" y2="-20"/><line x1="2503" y1="15.2" x2="2287.9" y2="-20"/><line x1="2503" y1="14.4" x2="2292.3" y2="-20"/><line x1="2503" y1="13.6" x2="2296.7" y2="-20"/><line x1="2503" y1="11.9" x2="2305.4" y2="-20"/><line x1="2503" y1="11.1" x2="2309.7" y2="-20"/><line x1="2503" y1="10.3" x2="2314.1" y2="-20"/><line x1="2503" y1="9.5" x2="2318.4" y2="-20"/><line x1="2503" y1="8.7" x2="2322.8" y2="-20"/><line x1="2503" y1="7.9" x2="2327.2" y2="-20"/><line x1="2503" y1="7.1" x2="2331.5" y2="-20"/><line x1="2503" y1="6.3" x2="2335.9" y2="-20"/><line x1="2503" y1="5.6" x2="2340.2" y2="-20"/><line x1="2503" y1="4" x2="2348.9" y2="-20"/><line x1="2503" y1="3.3" x2="2353.3" y2="-20"/><line x1="2503" y1="2.5" x2="2357.7" y2="-20"/><line x1="2503" y1="1.8" x2="2362" y2="-20"/><line x1="2503" y1="1" x2="2366.4" y2="-20"/><line x1="2503" y1="0.3" x2="2370.7" y2="-20"/><line x1="2503" y1="-0.4" x2="2375.1" y2="-20"/><line x1="2503" y1="-1.2" x2="2379.4" y2="-20"/><line x1="2503" y1="-1.9" x2="2383.8" y2="-20"/><line x1="2503" y1="-3.3" x2="2392.5" y2="-20"/><line x1="2503" y1="-4" x2="2396.9" y2="-20"/><line x1="2503" y1="-4.8" x2="2401.2" y2="-20"/><line x1="2503" y1="-5.5" x2="2405.6" y2="-20"/><line x1="2503" y1="-6.1" x2="2409.9" y2="-20"/><line x1="2503" y1="-6.8" x2="2414.3" y2="-20"/><line x1="2503" y1="-7.5" x2="2418.7" y2="-20"/><line x1="2503" y1="-8.2" x2="2423" y2="-20"/><line x1="2503" y1="-8.9" x2="2427.4" y2="-20"/><line x1="2503" y1="-10.2" x2="2436.1" y2="-20"/><line x1="2503" y1="-10.9" x2="2440.4" y2="-20"/><line x1="2503" y1="-11.6" x2="2444.8" y2="-20"/><line x1="2503" y1="-12.2" x2="2449.1" y2="-20"/><line x1="2503" y1="-12.9" x2="2453.5" y2="-20"/><line x1="2503" y1="-13.5" x2="2457.9" y2="-20"/><line x1="2503" y1="-14.2" x2="2462.2" y2="-20"/><line x1="2503" y1="-14.8" x2="2466.6" y2="-20"/><line x1="2503" y1="-15.4" x2="2470.9" y2="-20"/><line x1="2503" y1="-16.7" x2="2479.6" y2="-20"/><line x1="2503" y1="-17.3" x2="2484" y2="-20"/><line x1="2503" y1="-17.9" x2="2488.3" y2="-20"/><line x1="2503" y1="-18.6" x2="2492.7" y2="-20"/><line x1="2503" y1="-19.2" x2="2497.1" y2="-20"/><line x1="2503" y1="-19.8" x2="2501.4" y2="-20"/></g><line x1="95.6" y1="1593" x2="2503" y2="1570.7" stroke="#fff" stroke-opacity="0.0160"/><line x1="-20" y1="1562.7" x2="2503" y2="1539.7" stroke="#fff" stroke-opacity="0.0160"/><line x1="-20" y1="1532.4" x2="2503" y2="1509.8" stroke="#fff" stroke-opacity="0.0160"/><line x1="-20" y1="1503.1" x2="2503" y2="1480.9" stroke="#fff" stroke-opacity="0.0160"/><line x1="-20" y1="1474.8" x2="2503" y2="1452.9" stroke="#fff" stroke-opacity="0.0160"/><line x1="-20" y1="1447.3" x2="2503" y2="1425.9" stroke="#fff" stroke-opacity="0.0160"/><line x1="-20" y1="1420.8" x2="2503" y2="1399.7" stroke="#fff" stroke-opacity="0.0160"/><line x1="-20" y1="1370.2" x2="2503" y2="1349.7" stroke="#fff" stroke-opacity="0.0160"/><line x1="-20" y1="1346" x2="2503" y2="1325.9" stroke="#fff" stroke-opacity="0.0160"/><line x1="-20" y1="1322.6" x2="2503" y2="1302.8" stroke="#fff" stroke-opacity="0.0160"/><line x1="-20" y1="1299.8" x2="2503" y2="1280.3" stroke="#fff" stroke-opacity="0.0160"/><line x1="-20" y1="1277.7" x2="2503" y2="1258.5" stroke="#fff" stroke-opacity="0.0160"/><line x1="-20" y1="1256.3" x2="2503" y2="1237.4" stroke="#fff" stroke-opacity="0.0160"/><line x1="-20" y1="1235.4" x2="2503" y2="1216.8" stroke="#fff" stroke-opacity="0.0160"/><line x1="-20" y1="1215.2" x2="2503" y2="1196.8" stroke="#fff" stroke-opacity="0.0160"/><line x1="-20" y1="1195.4" x2="2503" y2="1177.4" stroke="#fff" stroke-opacity="0.0160"/><line x1="-20" y1="1157.6" x2="2503" y2="1140" stroke="#fff" stroke-opacity="0.0160"/><line x1="-20" y1="1139.4" x2="2503" y2="1122.1" stroke="#fff" stroke-opacity="0.0160"/><line x1="-20" y1="1121.7" x2="2503" y2="1104.6" stroke="#fff" stroke-opacity="0.0160"/><line x1="-20" y1="1104.5" x2="2503" y2="1087.6" stroke="#fff" stroke-opacity="0.0160"/><line x1="-20" y1="1087.7" x2="2503" y2="1071" stroke="#fff" stroke-opacity="0.0160"/><line x1="-20" y1="1071.3" x2="2503" y2="1054.9" stroke="#fff" stroke-opacity="0.0160"/><line x1="-20" y1="1055.3" x2="2503" y2="1039.1" stroke="#fff" stroke-opacity="0.0160"/><line x1="-20" y1="1039.7" x2="2503" y2="1023.7" stroke="#fff" stroke-opacity="0.0160"/><line x1="-20" y1="1024.5" x2="2503" y2="1008.7" stroke="#fff" stroke-opacity="0.0160"/><line x1="-20" y1="995.2" x2="2503" y2="979.7" stroke="#fff" stroke-opacity="0.0160"/><line x1="-20" y1="981" x2="2503" y2="965.8" stroke="#fff" stroke-opacity="0.0160"/><line x1="-20" y1="967.2" x2="2503" y2="952.1" stroke="#fff" stroke-opacity="0.0160"/><line x1="-20" y1="953.7" x2="2503" y2="938.8" stroke="#fff" stroke-opacity="0.0160"/><line x1="-20" y1="940.4" x2="2503" y2="925.7" stroke="#fff" stroke-opacity="0.0160"/><line x1="-20" y1="927.5" x2="2503" y2="913" stroke="#fff" stroke-opacity="0.0160"/><line x1="-20" y1="914.9" x2="2503" y2="900.5" stroke="#fff" stroke-opacity="0.0160"/><line x1="-20" y1="902.5" x2="2503" y2="888.3" stroke="#fff" stroke-opacity="0.0160"/><line x1="-20" y1="890.4" x2="2503" y2="876.4" stroke="#fff" stroke-opacity="0.0160"/><line x1="-20" y1="867" x2="2503" y2="853.3" stroke="#fff" stroke-opacity="0.0158"/><line x1="-20" y1="855.7" x2="2503" y2="842.1" stroke="#fff" stroke-opacity="0.0156"/><line x1="-20" y1="844.6" x2="2503" y2="831.1" stroke="#fff" stroke-opacity="0.0155"/><line x1="-20" y1="833.7" x2="2503" y2="820.4" stroke="#fff" stroke-opacity="0.0153"/><line x1="-20" y1="823" x2="2503" y2="809.9" stroke="#fff" stroke-opacity="0.0151"/><line x1="-20" y1="812.6" x2="2503" y2="799.6" stroke="#fff" stroke-opacity="0.0149"/><line x1="-20" y1="802.3" x2="2503" y2="789.5" stroke="#fff" stroke-opacity="0.0147"/><line x1="-20" y1="792.3" x2="2503" y2="779.5" stroke="#fff" stroke-opacity="0.0146"/><line x1="-20" y1="782.4" x2="2503" y2="769.8" stroke="#fff" stroke-opacity="0.0144"/><line x1="-20" y1="763.3" x2="2503" y2="751" stroke="#fff" stroke-opacity="0.0141"/><line x1="-20" y1="754" x2="2503" y2="741.8" stroke="#fff" stroke-opacity="0.0139"/><line x1="-20" y1="744.9" x2="2503" y2="732.8" stroke="#fff" stroke-opacity="0.0138"/><line x1="-20" y1="735.9" x2="2503" y2="724" stroke="#fff" stroke-opacity="0.0136"/><line x1="-20" y1="727.1" x2="2503" y2="715.3" stroke="#fff" stroke-opacity="0.0135"/><line x1="-20" y1="718.5" x2="2503" y2="706.8" stroke="#fff" stroke-opacity="0.0133"/><line x1="-20" y1="710.1" x2="2503" y2="698.4" stroke="#fff" stroke-opacity="0.0132"/><line x1="-20" y1="701.7" x2="2503" y2="690.2" stroke="#fff" stroke-opacity="0.0130"/><line x1="-20" y1="693.6" x2="2503" y2="682.2" stroke="#fff" stroke-opacity="0.0129"/><line x1="-20" y1="677.7" x2="2503" y2="666.4" stroke="#fff" stroke-opacity="0.0126"/><line x1="-20" y1="669.9" x2="2503" y2="658.8" stroke="#fff" stroke-opacity="0.0125"/><line x1="-20" y1="662.3" x2="2503" y2="651.3" stroke="#fff" stroke-opacity="0.0124"/><line x1="-20" y1="654.8" x2="2503" y2="643.9" stroke="#fff" stroke-opacity="0.0122"/><line x1="-20" y1="647.4" x2="2503" y2="636.6" stroke="#fff" stroke-opacity="0.0121"/><line x1="-20" y1="640.2" x2="2503" y2="629.5" stroke="#fff" stroke-opacity="0.0120"/><line x1="-20" y1="633.1" x2="2503" y2="622.5" stroke="#fff" stroke-opacity="0.0119"/><line x1="-20" y1="626.1" x2="2503" y2="615.6" stroke="#fff" stroke-opacity="0.0117"/><line x1="-20" y1="619.2" x2="2503" y2="608.8" stroke="#fff" stroke-opacity="0.0116"/><line x1="-20" y1="605.7" x2="2503" y2="595.5" stroke="#fff" stroke-opacity="0.0114"/><line x1="-20" y1="599.2" x2="2503" y2="589" stroke="#fff" stroke-opacity="0.0113"/><line x1="-20" y1="592.7" x2="2503" y2="582.6" stroke="#fff" stroke-opacity="0.0112"/><line x1="-20" y1="586.3" x2="2503" y2="576.4" stroke="#fff" stroke-opacity="0.0111"/><line x1="-20" y1="580.1" x2="2503" y2="570.2" stroke="#fff" stroke-opacity="0.0109"/><line x1="-20" y1="573.9" x2="2503" y2="564.1" stroke="#fff" stroke-opacity="0.0108"/><line x1="-20" y1="567.9" x2="2503" y2="558.1" stroke="#fff" stroke-opacity="0.0107"/><line x1="-20" y1="561.9" x2="2503" y2="552.2" stroke="#fff" stroke-opacity="0.0106"/><line x1="-20" y1="556" x2="2503" y2="546.4" stroke="#fff" stroke-opacity="0.0105"/><line x1="-20" y1="544.5" x2="2503" y2="535" stroke="#fff" stroke-opacity="0.0103"/><line x1="-20" y1="538.8" x2="2503" y2="529.5" stroke="#fff" stroke-opacity="0.0102"/><line x1="-20" y1="533.3" x2="2503" y2="524" stroke="#fff" stroke-opacity="0.0101"/><line x1="-20" y1="527.8" x2="2503" y2="518.6" stroke="#fff" stroke-opacity="0.0100"/><line x1="-20" y1="522.4" x2="2503" y2="513.3" stroke="#fff" stroke-opacity="0.0099"/><line x1="-20" y1="517.1" x2="2503" y2="508.1" stroke="#fff" stroke-opacity="0.0098"/><line x1="-20" y1="511.9" x2="2503" y2="502.9" stroke="#fff" stroke-opacity="0.0097"/><line x1="-20" y1="506.7" x2="2503" y2="497.8" stroke="#fff" stroke-opacity="0.0096"/><line x1="-20" y1="501.7" x2="2503" y2="492.8" stroke="#fff" stroke-opacity="0.0095"/><line x1="-20" y1="491.7" x2="2503" y2="483" stroke="#fff" stroke-opacity="0.0093"/><line x1="-20" y1="486.8" x2="2503" y2="478.1" stroke="#fff" stroke-opacity="0.0093"/><line x1="-20" y1="482" x2="2503" y2="473.4" stroke="#fff" stroke-opacity="0.0092"/><line x1="-20" y1="477.2" x2="2503" y2="468.7" stroke="#fff" stroke-opacity="0.0091"/><line x1="-20" y1="472.6" x2="2503" y2="464.1" stroke="#fff" stroke-opacity="0.0090"/><line x1="-20" y1="467.9" x2="2503" y2="459.5" stroke="#fff" stroke-opacity="0.0089"/><line x1="-20" y1="463.4" x2="2503" y2="455" stroke="#fff" stroke-opacity="0.0088"/><line x1="-20" y1="458.9" x2="2503" y2="450.6" stroke="#fff" stroke-opacity="0.0087"/><line x1="-20" y1="454.4" x2="2503" y2="446.2" stroke="#fff" stroke-opacity="0.0087"/><line x1="-20" y1="445.7" x2="2503" y2="437.6" stroke="#fff" stroke-opacity="0.0085"/><line x1="-20" y1="441.4" x2="2503" y2="433.4" stroke="#fff" stroke-opacity="0.0084"/><line x1="-20" y1="437.2" x2="2503" y2="429.2" stroke="#fff" stroke-opacity="0.0083"/><line x1="-20" y1="433.1" x2="2503" y2="425.1" stroke="#fff" stroke-opacity="0.0082"/><line x1="-20" y1="428.9" x2="2503" y2="421.1" stroke="#fff" stroke-opacity="0.0082"/><line x1="-20" y1="424.9" x2="2503" y2="417" stroke="#fff" stroke-opacity="0.0081"/><line x1="-20" y1="420.9" x2="2503" y2="413.1" stroke="#fff" stroke-opacity="0.0080"/><line x1="-20" y1="416.9" x2="2503" y2="409.2" stroke="#fff" stroke-opacity="0.0079"/><line x1="-20" y1="413" x2="2503" y2="405.3" stroke="#fff" stroke-opacity="0.0079"/><line x1="-20" y1="405.3" x2="2503" y2="397.7" stroke="#fff" stroke-opacity="0.0077"/><line x1="-20" y1="401.5" x2="2503" y2="394" stroke="#fff" stroke-opacity="0.0076"/><line x1="-20" y1="397.8" x2="2503" y2="390.3" stroke="#fff" stroke-opacity="0.0076"/><line x1="-20" y1="394.1" x2="2503" y2="386.7" stroke="#fff" stroke-opacity="0.0075"/><line x1="-20" y1="390.5" x2="2503" y2="383.1" stroke="#fff" stroke-opacity="0.0074"/><line x1="-20" y1="386.9" x2="2503" y2="379.6" stroke="#fff" stroke-opacity="0.0073"/><line x1="-20" y1="383.4" x2="2503" y2="376.1" stroke="#fff" stroke-opacity="0.0073"/><line x1="-20" y1="379.8" x2="2503" y2="372.6" stroke="#fff" stroke-opacity="0.0072"/><line x1="-20" y1="376.4" x2="2503" y2="369.2" stroke="#fff" stroke-opacity="0.0071"/><line x1="-20" y1="369.5" x2="2503" y2="362.4" stroke="#fff" stroke-opacity="0.0070"/><line x1="-20" y1="366.2" x2="2503" y2="359.1" stroke="#fff" stroke-opacity="0.0069"/><line x1="-20" y1="362.9" x2="2503" y2="355.9" stroke="#fff" stroke-opacity="0.0069"/><line x1="-20" y1="359.6" x2="2503" y2="352.6" stroke="#fff" stroke-opacity="0.0068"/><line x1="-20" y1="356.4" x2="2503" y2="349.4" stroke="#fff" stroke-opacity="0.0067"/><line x1="-20" y1="353.2" x2="2503" y2="346.3" stroke="#fff" stroke-opacity="0.0067"/><line x1="-20" y1="350" x2="2503" y2="343.1" stroke="#fff" stroke-opacity="0.0066"/><line x1="-20" y1="346.8" x2="2503" y2="340" stroke="#fff" stroke-opacity="0.0065"/><line x1="-20" y1="343.7" x2="2503" y2="337" stroke="#fff" stroke-opacity="0.0065"/><line x1="-20" y1="337.6" x2="2503" y2="331" stroke="#fff" stroke-opacity="0.0063"/><line x1="-20" y1="334.6" x2="2503" y2="328" stroke="#fff" stroke-opacity="0.0063"/><line x1="-20" y1="331.7" x2="2503" y2="325.1" stroke="#fff" stroke-opacity="0.0062"/><line x1="-20" y1="328.7" x2="2503" y2="322.2" stroke="#fff" stroke-opacity="0.0061"/><line x1="-20" y1="325.8" x2="2503" y2="319.3" stroke="#fff" stroke-opacity="0.0061"/><line x1="-20" y1="323" x2="2503" y2="316.5" stroke="#fff" stroke-opacity="0.0060"/><line x1="-20" y1="320.1" x2="2503" y2="313.7" stroke="#fff" stroke-opacity="0.0060"/><line x1="-20" y1="317.3" x2="2503" y2="310.9" stroke="#fff" stroke-opacity="0.0059"/><line x1="-20" y1="314.5" x2="2503" y2="308.1" stroke="#fff" stroke-opacity="0.0058"/><line x1="-20" y1="309" x2="2503" y2="302.7" stroke="#fff" stroke-opacity="0.0057"/><line x1="-20" y1="306.3" x2="2503" y2="300.1" stroke="#fff" stroke-opacity="0.0056"/><line x1="-20" y1="303.6" x2="2503" y2="297.4" stroke="#fff" stroke-opacity="0.0056"/><line x1="-20" y1="301" x2="2503" y2="294.8" stroke="#fff" stroke-opacity="0.0055"/><line x1="-20" y1="298.4" x2="2503" y2="292.2" stroke="#fff" stroke-opacity="0.0055"/><line x1="-20" y1="295.8" x2="2503" y2="289.7" stroke="#fff" stroke-opacity="0.0054"/><line x1="-20" y1="293.2" x2="2503" y2="287.1" stroke="#fff" stroke-opacity="0.0053"/><line x1="-20" y1="290.7" x2="2503" y2="284.6" stroke="#fff" stroke-opacity="0.0053"/><line x1="-20" y1="288.2" x2="2503" y2="282.1" stroke="#fff" stroke-opacity="0.0052"/><line x1="-20" y1="283.2" x2="2503" y2="277.2" stroke="#fff" stroke-opacity="0.0051"/><line x1="-20" y1="280.7" x2="2503" y2="274.8" stroke="#fff" stroke-opacity="0.0051"/><line x1="-20" y1="278.3" x2="2503" y2="272.4" stroke="#fff" stroke-opacity="0.0050"/><line x1="-20" y1="275.9" x2="2503" y2="270.1" stroke="#fff" stroke-opacity="0.0049"/><line x1="-20" y1="273.5" x2="2503" y2="267.7" stroke="#fff" stroke-opacity="0.0049"/><line x1="-20" y1="271.2" x2="2503" y2="265.4" stroke="#fff" stroke-opacity="0.0048"/><line x1="-20" y1="268.9" x2="2503" y2="263.1" stroke="#fff" stroke-opacity="0.0048"/><line x1="-20" y1="266.6" x2="2503" y2="260.8" stroke="#fff" stroke-opacity="0.0047"/><line x1="-20" y1="264.3" x2="2503" y2="258.6" stroke="#fff" stroke-opacity="0.0046"/><line x1="-20" y1="259.8" x2="2503" y2="254.1" stroke="#fff" stroke-opacity="0.0045"/><line x1="-20" y1="257.5" x2="2503" y2="251.9" stroke="#fff" stroke-opacity="0.0045"/><line x1="-20" y1="255.3" x2="2503" y2="249.8" stroke="#fff" stroke-opacity="0.0044"/><line x1="-20" y1="253.2" x2="2503" y2="247.6" stroke="#fff" stroke-opacity="0.0044"/><line x1="-20" y1="251" x2="2503" y2="245.5" stroke="#fff" stroke-opacity="0.0043"/><line x1="-20" y1="248.8" x2="2503" y2="243.4" stroke="#fff" stroke-opacity="0.0042"/><line x1="-20" y1="246.7" x2="2503" y2="241.3" stroke="#fff" stroke-opacity="0.0042"/><line x1="-20" y1="244.6" x2="2503" y2="239.2" stroke="#fff" stroke-opacity="0.0041"/><line x1="-20" y1="242.5" x2="2503" y2="237.1" stroke="#fff" stroke-opacity="0.0041"/><g stroke="url(#gxM)" stroke-width="1.8"><line x1="-20" y1="-19.4" x2="-16.5" y2="-20"/><line x1="-20" y1="-10.9" x2="27.4" y2="-20"/><line x1="-20" y1="-1.7" x2="71.3" y2="-20"/><line x1="-20" y1="8.3" x2="115.1" y2="-20"/><line x1="-20" y1="19.3" x2="159" y2="-20"/><line x1="-20" y1="31.4" x2="202.8" y2="-20"/><line x1="-20" y1="44.8" x2="246.7" y2="-20"/><line x1="-20" y1="59.7" x2="290.5" y2="-20"/><line x1="-20" y1="76.4" x2="334.3" y2="-20"/><line x1="-20" y1="95.2" x2="378.2" y2="-20"/><line x1="-20" y1="116.6" x2="422" y2="-20"/><line x1="-20" y1="141" x2="465.8" y2="-20"/><line x1="-20" y1="169.3" x2="509.6" y2="-20"/><line x1="-20" y1="202.4" x2="553.4" y2="-20"/><line x1="-20" y1="241.6" x2="597.2" y2="-20"/><line x1="-20" y1="288.9" x2="641" y2="-20"/><line x1="-20" y1="346.9" x2="684.8" y2="-20"/><line x1="-20" y1="420" x2="728.6" y2="-20"/><line x1="-20" y1="514.6" x2="772.4" y2="-20"/><line x1="-20" y1="642" x2="816.1" y2="-20"/><line x1="-20" y1="822.8" x2="859.9" y2="-20"/><line x1="-20" y1="1099.8" x2="903.7" y2="-20"/><line x1="-20" y1="1577" x2="947.4" y2="-20"/><line x1="367.4" y1="1593" x2="991.2" y2="-20"/><line x1="764.4" y1="1593" x2="1034.9" y2="-20"/><line x1="1161.4" y1="1593" x2="1078.7" y2="-20"/><line x1="1558.3" y1="1593" x2="1122.4" y2="-20"/><line x1="1955.2" y1="1593" x2="1166.1" y2="-20"/><line x1="2352.1" y1="1593" x2="1209.8" y2="-20"/><line x1="2503" y1="1327.8" x2="1253.6" y2="-20"/><line x1="2503" y1="1032.2" x2="1297.3" y2="-20"/><line x1="2503" y1="831.5" x2="1341" y2="-20"/><line x1="2503" y1="686.2" x2="1384.7" y2="-20"/><line x1="2503" y1="576.3" x2="1428.4" y2="-20"/><line x1="2503" y1="490.1" x2="1472" y2="-20"/><line x1="2503" y1="420.8" x2="1515.7" y2="-20"/><line x1="2503" y1="363.8" x2="1559.4" y2="-20"/><line x1="2503" y1="316.2" x2="1603.1" y2="-20"/><line x1="2503" y1="275.7" x2="1646.7" y2="-20"/><line x1="2503" y1="240.9" x2="1690.4" y2="-20"/><line x1="2503" y1="210.7" x2="1734" y2="-20"/><line x1="2503" y1="184.2" x2="1777.7" y2="-20"/><line x1="2503" y1="160.8" x2="1821.3" y2="-20"/><line x1="2503" y1="140" x2="1865" y2="-20"/><line x1="2503" y1="121.3" x2="1908.6" y2="-20"/><line x1="2503" y1="104.5" x2="1952.2" y2="-20"/><line x1="2503" y1="89.2" x2="1995.8" y2="-20"/><line x1="2503" y1="75.3" x2="2039.5" y2="-20"/><line x1="2503" y1="62.7" x2="2083.1" y2="-20"/><line x1="2503" y1="51" x2="2126.7" y2="-20"/><line x1="2503" y1="40.3" x2="2170.3" y2="-20"/><line x1="2503" y1="30.4" x2="2213.9" y2="-20"/><line x1="2503" y1="21.2" x2="2257.4" y2="-20"/><line x1="2503" y1="12.7" x2="2301" y2="-20"/><line x1="2503" y1="4.8" x2="2344.6" y2="-20"/><line x1="2503" y1="-2.6" x2="2388.2" y2="-20"/><line x1="2503" y1="-9.6" x2="2431.7" y2="-20"/><line x1="2503" y1="-16.1" x2="2475.3" y2="-20"/></g><line x1="-20" y1="1395.1" x2="2503" y2="1374.3" stroke="#fff" stroke-width="1.8" stroke-opacity="0.1900"/><line x1="-20" y1="1176.3" x2="2503" y2="1158.4" stroke="#fff" stroke-width="1.8" stroke-opacity="0.1900"/><line x1="-20" y1="1009.7" x2="2503" y2="994.1" stroke="#fff" stroke-width="1.8" stroke-opacity="0.1900"/><line x1="-20" y1="878.6" x2="2503" y2="864.7" stroke="#fff" stroke-width="1.8" stroke-opacity="0.1900"/><line x1="-20" y1="772.8" x2="2503" y2="760.3" stroke="#fff" stroke-width="1.8" stroke-opacity="0.1693"/><line x1="-20" y1="685.5" x2="2503" y2="674.2" stroke="#fff" stroke-width="1.8" stroke-opacity="0.1517"/><line x1="-20" y1="612.4" x2="2503" y2="602.1" stroke="#fff" stroke-width="1.8" stroke-opacity="0.1367"/><line x1="-20" y1="550.2" x2="2503" y2="540.7" stroke="#fff" stroke-width="1.8" stroke-opacity="0.1236"/><line x1="-20" y1="496.6" x2="2503" y2="487.8" stroke="#fff" stroke-width="1.8" stroke-opacity="0.1121"/><line x1="-20" y1="450" x2="2503" y2="441.9" stroke="#fff" stroke-width="1.8" stroke-opacity="0.1018"/><line x1="-20" y1="409.1" x2="2503" y2="401.5" stroke="#fff" stroke-width="1.8" stroke-opacity="0.0925"/><line x1="-20" y1="372.9" x2="2503" y2="365.8" stroke="#fff" stroke-width="1.8" stroke-opacity="0.0839"/><line x1="-20" y1="340.7" x2="2503" y2="334" stroke="#fff" stroke-width="1.8" stroke-opacity="0.0760"/><line x1="-20" y1="311.7" x2="2503" y2="305.4" stroke="#fff" stroke-width="1.8" stroke-opacity="0.0685"/><line x1="-20" y1="285.7" x2="2503" y2="279.7" stroke="#fff" stroke-width="1.8" stroke-opacity="0.0614"/><line x1="-20" y1="262" x2="2503" y2="256.3" stroke="#fff" stroke-width="1.8" stroke-opacity="0.0545"/><line x1="-20" y1="240.5" x2="2503" y2="235.1" stroke="#fff" stroke-width="1.8" stroke-opacity="0.0478"/><line x1="-20" y1="220.8" x2="2503" y2="215.7" stroke="#fff" stroke-width="1.8" stroke-opacity="0.0409"/><line x1="-20" y1="202.7" x2="2503" y2="197.8" stroke="#fff" stroke-width="1.8" stroke-opacity="0.0338"/><line x1="-20" y1="186" x2="2503" y2="181.4" stroke="#fff" stroke-width="1.8" stroke-opacity="0.0259"/><line x1="-20" y1="170.6" x2="2503" y2="166.2" stroke="#fff" stroke-width="1.8" stroke-opacity="0.0159"/><line x1="-20" y1="156.4" x2="2503" y2="152.1" stroke="#fff" stroke-width="1.8" stroke-opacity="0.0000"/><line x1="-20" y1="143.1" x2="2503" y2="139" stroke="#fff" stroke-width="1.8" stroke-opacity="0.0000"/><line x1="-20" y1="130.8" x2="2503" y2="126.8" stroke="#fff" stroke-width="1.8" stroke-opacity="0.0000"/><line x1="-20" y1="119.2" x2="2503" y2="115.4" stroke="#fff" stroke-width="1.8" stroke-opacity="0.0000"/><line x1="-20" y1="108.4" x2="2503" y2="104.8" stroke="#fff" stroke-width="1.8" stroke-opacity="0.0000"/><line x1="-20" y1="98.3" x2="2503" y2="94.8" stroke="#fff" stroke-width="1.8" stroke-opacity="0.0000"/><line x1="-20" y1="88.7" x2="2503" y2="85.4" stroke="#fff" stroke-width="1.8" stroke-opacity="0.0000"/><line x1="-20" y1="79.7" x2="2503" y2="76.5" stroke="#fff" stroke-width="1.8" stroke-opacity="0.0000"/><line x1="-20" y1="71.3" x2="2503" y2="68.1" stroke="#fff" stroke-width="1.8" stroke-opacity="0.0000"/><line x1="-20" y1="63.3" x2="2503" y2="60.2" stroke="#fff" stroke-width="1.8" stroke-opacity="0.0000"/><line x1="-20" y1="55.7" x2="2503" y2="52.8" stroke="#fff" stroke-width="1.8" stroke-opacity="0.0000"/><line x1="-20" y1="48.5" x2="2503" y2="45.7" stroke="#fff" stroke-width="1.8" stroke-opacity="0.0000"/><line x1="-20" y1="41.7" x2="2503" y2="38.9" stroke="#fff" stroke-width="1.8" stroke-opacity="0.0000"/><line x1="-20" y1="35.2" x2="2503" y2="32.5" stroke="#fff" stroke-width="1.8" stroke-opacity="0.0000"/><line x1="-20" y1="29" x2="2503" y2="26.5" stroke="#fff" stroke-width="1.8" stroke-opacity="0.0000"/><line x1="-20" y1="23.2" x2="2503" y2="20.7" stroke="#fff" stroke-width="1.8" stroke-opacity="0.0000"/><line x1="-20" y1="17.5" x2="2503" y2="15.1" stroke="#fff" stroke-width="1.8" stroke-opacity="0.0000"/><line x1="-20" y1="12.2" x2="2503" y2="9.9" stroke="#fff" stroke-width="1.8" stroke-opacity="0.0000"/><line x1="-20" y1="7.1" x2="2503" y2="4.8" stroke="#fff" stroke-width="1.8" stroke-opacity="0.0000"/><line x1="-20" y1="2.2" x2="2503" y2="-0" stroke="#fff" stroke-width="1.8" stroke-opacity="0.0000"/><line x1="-20" y1="-2.5" x2="2503" y2="-4.7" stroke="#fff" stroke-width="1.8" stroke-opacity="0.0000"/><line x1="-20" y1="-7" x2="2503" y2="-9.1" stroke="#fff" stroke-width="1.8" stroke-opacity="0.0000"/><line x1="-20" y1="-11.3" x2="2503" y2="-13.3" stroke="#fff" stroke-width="1.8" stroke-opacity="0.0000"/><line x1="-20" y1="-15.5" x2="2503" y2="-17.4" stroke="#fff" stroke-width="1.8" stroke-opacity="0.0000"/><line x1="-20" y1="-19.4" x2="712.5" y2="-20" stroke="#fff" stroke-width="1.8" stroke-opacity="0.0000"/><g stroke="#fff" stroke-opacity="0.090" stroke-width="1.8"><line x1="-31.9" y1="1594.2" x2="368.4" y2="1590.5" stroke-dasharray="3.0 36.88"/><line x1="366.9" y1="1590.5" x2="765.5" y2="1586.8" stroke-dasharray="3.0 36.71"/><line x1="764.0" y1="1586.8" x2="1160.9" y2="1583.1" stroke-dasharray="3.0 36.55"/><line x1="1159.4" y1="1583.1" x2="1554.7" y2="1579.5" stroke-dasharray="3.0 36.38"/><line x1="1553.2" y1="1579.5" x2="1946.8" y2="1575.8" stroke-dasharray="3.0 36.22"/><line x1="1945.3" y1="1575.8" x2="2337.4" y2="1572.2" stroke-dasharray="3.0 36.05"/><line x1="2335.9" y1="1572.2" x2="2726.2" y2="1568.6" stroke-dasharray="3.0 35.89"/></g><g stroke="#fff" stroke-opacity="0.090" stroke-width="1.8"><line x1="-406.3" y1="1566.2" x2="-11.3" y2="1562.6" stroke-dasharray="3.0 36.35"/><line x1="-12.8" y1="1562.6" x2="380.5" y2="1559.0" stroke-dasharray="3.0 36.18"/><line x1="379.0" y1="1559.1" x2="770.7" y2="1555.5" stroke-dasharray="3.0 36.02"/><line x1="769.2" y1="1555.5" x2="1159.3" y2="1552.0" stroke-dasharray="3.0 35.86"/><line x1="1157.8" y1="1552.0" x2="1546.3" y2="1548.4" stroke-dasharray="3.0 35.70"/><line x1="1544.8" y1="1548.4" x2="1931.7" y2="1544.9" stroke-dasharray="3.0 35.54"/><line x1="1930.2" y1="1544.9" x2="2315.5" y2="1541.4" stroke-dasharray="3.0 35.39"/><line x1="2314.0" y1="1541.4" x2="2697.8" y2="1537.9" stroke-dasharray="3.0 35.23"/></g><g stroke="#fff" stroke-opacity="0.090" stroke-width="1.8"><line x1="-381.0" y1="1535.6" x2="7.1" y2="1532.1" stroke-dasharray="3.0 35.67"/><line x1="5.6" y1="1532.2" x2="392.2" y2="1528.7" stroke-dasharray="3.0 35.51"/><line x1="390.7" y1="1528.7" x2="775.8" y2="1525.3" stroke-dasharray="3.0 35.35"/><line x1="774.3" y1="1525.3" x2="1157.8" y2="1521.8" stroke-dasharray="3.0 35.20"/><line x1="1156.3" y1="1521.9" x2="1538.2" y2="1518.4" stroke-dasharray="3.0 35.05"/><line x1="1536.7" y1="1518.5" x2="1917.1" y2="1515.0" stroke-dasharray="3.0 34.89"/><line x1="1915.6" y1="1515.1" x2="2294.5" y2="1511.7" stroke-dasharray="3.0 34.74"/><line x1="2293.0" y1="1511.7" x2="2670.3" y2="1508.3" stroke-dasharray="3.0 34.59"/></g><g stroke="#fff" stroke-opacity="0.090" stroke-width="1.8"><line x1="-356.6" y1="1506.0" x2="25.0" y2="1502.7" stroke-dasharray="3.0 35.01"/><line x1="23.5" y1="1502.7" x2="403.6" y2="1499.4" stroke-dasharray="3.0 34.86"/><line x1="402.1" y1="1499.4" x2="780.7" y2="1496.0" stroke-dasharray="3.0 34.71"/><line x1="779.2" y1="1496.1" x2="1156.3" y2="1492.7" stroke-dasharray="3.0 34.56"/><line x1="1154.8" y1="1492.8" x2="1530.4" y2="1489.5" stroke-dasharray="3.0 34.41"/><line x1="1528.9" y1="1489.5" x2="1903.0" y2="1486.2" stroke-dasharray="3.0 34.26"/><line x1="1901.5" y1="1486.2" x2="2274.1" y2="1482.9" stroke-dasharray="3.0 34.12"/><line x1="2272.6" y1="1482.9" x2="2643.8" y2="1479.7" stroke-dasharray="3.0 33.97"/></g><g stroke="#fff" stroke-opacity="0.090" stroke-width="1.8"><line x1="-333.0" y1="1477.5" x2="42.2" y2="1474.2" stroke-dasharray="3.0 34.38"/><line x1="40.7" y1="1474.2" x2="414.6" y2="1471.0" stroke-dasharray="3.0 34.23"/><line x1="413.1" y1="1471.0" x2="785.4" y2="1467.8" stroke-dasharray="3.0 34.09"/><line x1="783.9" y1="1467.8" x2="1154.8" y2="1464.6" stroke-dasharray="3.0 33.94"/><line x1="1153.3" y1="1464.6" x2="1522.8" y2="1461.4" stroke-dasharray="3.0 33.80"/><line x1="1521.3" y1="1461.4" x2="1889.3" y2="1458.2" stroke-dasharray="3.0 33.65"/><line x1="1887.8" y1="1458.3" x2="2254.4" y2="1455.1" stroke-dasharray="3.0 33.51"/><line x1="2252.9" y1="1455.1" x2="2618.1" y2="1451.9" stroke-dasharray="3.0 33.37"/></g><g stroke="#fff" stroke-opacity="0.090" stroke-width="1.8"><line x1="-310.2" y1="1449.8" x2="58.9" y2="1446.7" stroke-dasharray="3.0 33.77"/><line x1="57.4" y1="1446.7" x2="425.2" y2="1443.5" stroke-dasharray="3.0 33.63"/><line x1="423.7" y1="1443.6" x2="790.0" y2="1440.4" stroke-dasharray="3.0 33.48"/><line x1="788.5" y1="1440.5" x2="1153.4" y2="1437.4" stroke-dasharray="3.0 33.34"/><line x1="1151.9" y1="1437.4" x2="1515.5" y2="1434.3" stroke-dasharray="3.0 33.20"/><line x1="1514.0" y1="1434.3" x2="1876.1" y2="1431.2" stroke-dasharray="3.0 33.07"/><line x1="1874.6" y1="1431.2" x2="2235.3" y2="1428.2" stroke-dasharray="3.0 32.93"/><line x1="2233.8" y1="1428.2" x2="2593.2" y2="1425.1" stroke-dasharray="3.0 32.79"/></g><g stroke="#fff" stroke-opacity="0.090" stroke-width="1.8"><line x1="-288.2" y1="1423.0" x2="75.1" y2="1420.0" stroke-dasharray="3.0 33.17"/><line x1="73.6" y1="1420.0" x2="435.4" y2="1417.0" stroke-dasharray="3.0 33.04"/><line x1="433.9" y1="1417.0" x2="794.4" y2="1414.0" stroke-dasharray="3.0 32.90"/><line x1="792.9" y1="1414.0" x2="1152.1" y2="1411.0" stroke-dasharray="3.0 32.76"/><line x1="1150.6" y1="1411.0" x2="1508.4" y2="1408.0" stroke-dasharray="3.0 32.63"/><line x1="1506.9" y1="1408.0" x2="1863.3" y2="1405.0" stroke-dasharray="3.0 32.49"/><line x1="1861.8" y1="1405.1" x2="2216.9" y2="1402.1" stroke-dasharray="3.0 32.36"/><line x1="2215.4" y1="1402.1" x2="2569.1" y2="1399.1" stroke-dasharray="3.0 32.23"/></g><g stroke="#fff" stroke-opacity="0.100" stroke-width="2.0"><line x1="-266.8" y1="1397.1" x2="90.7" y2="1394.2" stroke-dasharray="3.0 32.60"/><line x1="89.2" y1="1394.2" x2="445.4" y2="1391.2" stroke-dasharray="3.0 32.47"/><line x1="443.9" y1="1391.3" x2="798.7" y2="1388.3" stroke-dasharray="3.0 32.34"/><line x1="797.2" y1="1388.4" x2="1150.8" y2="1385.4" stroke-dasharray="3.0 32.20"/><line x1="1149.3" y1="1385.5" x2="1501.5" y2="1382.6" stroke-dasharray="3.0 32.07"/><line x1="1500.0" y1="1382.6" x2="1850.9" y2="1379.7" stroke-dasharray="3.0 31.94"/><line x1="1849.4" y1="1379.7" x2="2199.0" y2="1376.8" stroke-dasharray="3.0 31.81"/><line x1="2197.5" y1="1376.8" x2="2545.8" y2="1374.0" stroke-dasharray="3.0 31.68"/></g><g stroke="#fff" stroke-opacity="0.090" stroke-width="1.8"><line x1="-246.0" y1="1372.0" x2="105.9" y2="1369.1" stroke-dasharray="3.0 32.05"/><line x1="104.4" y1="1369.2" x2="455.0" y2="1366.3" stroke-dasharray="3.0 31.92"/><line x1="453.5" y1="1366.3" x2="802.9" y2="1363.5" stroke-dasharray="3.0 31.79"/><line x1="801.4" y1="1363.5" x2="1149.5" y2="1360.7" stroke-dasharray="3.0 31.66"/><line x1="1148.0" y1="1360.7" x2="1494.8" y2="1357.9" stroke-dasharray="3.0 31.53"/><line x1="1493.3" y1="1357.9" x2="1838.9" y2="1355.1" stroke-dasharray="3.0 31.41"/><line x1="1837.4" y1="1355.1" x2="2181.7" y2="1352.3" stroke-dasharray="3.0 31.28"/><line x1="2180.2" y1="1352.4" x2="2523.2" y2="1349.6" stroke-dasharray="3.0 31.16"/></g><g stroke="#fff" stroke-opacity="0.090" stroke-width="1.8"><line x1="-226.0" y1="1347.6" x2="120.6" y2="1344.9" stroke-dasharray="3.0 31.51"/><line x1="119.1" y1="1344.9" x2="464.4" y2="1342.1" stroke-dasharray="3.0 31.38"/><line x1="462.9" y1="1342.1" x2="806.9" y2="1339.4" stroke-dasharray="3.0 31.26"/><line x1="805.4" y1="1339.4" x2="1148.3" y2="1336.7" stroke-dasharray="3.0 31.13"/><line x1="1146.8" y1="1336.7" x2="1488.3" y2="1334.0" stroke-dasharray="3.0 31.01"/><line x1="1486.8" y1="1334.0" x2="1827.2" y2="1331.3" stroke-dasharray="3.0 30.89"/><line x1="1825.7" y1="1331.3" x2="2164.8" y2="1328.6" stroke-dasharray="3.0 30.76"/><line x1="2163.3" y1="1328.6" x2="2501.3" y2="1325.9" stroke-dasharray="3.0 30.64"/></g><g stroke="#fff" stroke-opacity="0.090" stroke-width="1.8"><line x1="-206.5" y1="1324.0" x2="134.8" y2="1321.3" stroke-dasharray="3.0 30.98"/><line x1="133.3" y1="1321.4" x2="473.5" y2="1318.7" stroke-dasharray="3.0 30.86"/><line x1="472.0" y1="1318.7" x2="810.9" y2="1316.0" stroke-dasharray="3.0 30.74"/><line x1="809.4" y1="1316.1" x2="1147.1" y2="1313.4" stroke-dasharray="3.0 30.62"/><line x1="1145.6" y1="1313.4" x2="1482.1" y2="1310.8" stroke-dasharray="3.0 30.50"/><line x1="1480.6" y1="1310.8" x2="1815.9" y2="1308.2" stroke-dasharray="3.0 30.38"/><line x1="1814.4" y1="1308.2" x2="2148.5" y2="1305.6" stroke-dasharray="3.0 30.26"/><line x1="2147.0" y1="1305.6" x2="2480.0" y2="1303.0" stroke-dasharray="3.0 30.15"/><line x1="2478.5" y1="1303.0" x2="2810.3" y2="1300.4" stroke-dasharray="3.0 30.03"/></g><g stroke="#fff" stroke-opacity="0.090" stroke-width="1.8"><line x1="-187.6" y1="1301.1" x2="148.7" y2="1298.5" stroke-dasharray="3.0 30.48"/><line x1="147.2" y1="1298.5" x2="482.3" y2="1295.9" stroke-dasharray="3.0 30.36"/><line x1="480.8" y1="1295.9" x2="814.7" y2="1293.4" stroke-dasharray="3.0 30.24"/><line x1="813.2" y1="1293.4" x2="1145.9" y2="1290.8" stroke-dasharray="3.0 30.12"/><line x1="1144.4" y1="1290.8" x2="1476.0" y2="1288.3" stroke-dasharray="3.0 30.01"/><line x1="1474.5" y1="1288.3" x2="1804.9" y2="1285.7" stroke-dasharray="3.0 29.89"/><line x1="1803.4" y1="1285.7" x2="2132.7" y2="1283.2" stroke-dasharray="3.0 29.78"/><line x1="2131.2" y1="1283.2" x2="2459.3" y2="1280.7" stroke-dasharray="3.0 29.66"/><line x1="2457.8" y1="1280.7" x2="2784.8" y2="1278.2" stroke-dasharray="3.0 29.55"/></g><g stroke="#fff" stroke-opacity="0.090" stroke-width="1.8"><line x1="-169.2" y1="1278.9" x2="162.1" y2="1276.3" stroke-dasharray="3.0 29.98"/><line x1="160.6" y1="1276.3" x2="490.8" y2="1273.8" stroke-dasharray="3.0 29.87"/><line x1="489.3" y1="1273.8" x2="818.4" y2="1271.3" stroke-dasharray="3.0 29.76"/><line x1="816.9" y1="1271.4" x2="1144.8" y2="1268.9" stroke-dasharray="3.0 29.64"/><line x1="1143.3" y1="1268.9" x2="1470.1" y2="1266.4" stroke-dasharray="3.0 29.53"/><line x1="1468.6" y1="1266.4" x2="1794.2" y2="1263.9" stroke-dasharray="3.0 29.42"/><line x1="1792.7" y1="1263.9" x2="2117.3" y2="1261.5" stroke-dasharray="3.0 29.31"/><line x1="2115.8" y1="1261.5" x2="2439.3" y2="1259.0" stroke-dasharray="3.0 29.20"/><line x1="2437.8" y1="1259.0" x2="2760.1" y2="1256.6" stroke-dasharray="3.0 29.09"/></g><g stroke="#fff" stroke-opacity="0.090" stroke-width="1.8"><line x1="-151.4" y1="1257.3" x2="175.2" y2="1254.8" stroke-dasharray="3.0 29.51"/><line x1="173.7" y1="1254.8" x2="499.1" y2="1252.4" stroke-dasharray="3.0 29.40"/><line x1="497.6" y1="1252.4" x2="821.9" y2="1250.0" stroke-dasharray="3.0 29.29"/><line x1="820.4" y1="1250.0" x2="1143.7" y2="1247.6" stroke-dasharray="3.0 29.18"/><line x1="1142.2" y1="1247.6" x2="1464.3" y2="1245.1" stroke-dasharray="3.0 29.07"/><line x1="1462.8" y1="1245.2" x2="1783.9" y2="1242.8" stroke-dasharray="3.0 28.96"/><line x1="1782.4" y1="1242.8" x2="2102.4" y2="1240.4" stroke-dasharray="3.0 28.85"/><line x1="2100.9" y1="1240.4" x2="2419.8" y2="1238.0" stroke-dasharray="3.0 28.74"/><line x1="2418.3" y1="1238.0" x2="2736.1" y2="1235.6" stroke-dasharray="3.0 28.63"/></g><g stroke="#fff" stroke-opacity="0.090" stroke-width="1.8"><line x1="-134.1" y1="1236.3" x2="187.8" y2="1233.9" stroke-dasharray="3.0 29.04"/><line x1="186.3" y1="1233.9" x2="507.2" y2="1231.5" stroke-dasharray="3.0 28.93"/><line x1="505.7" y1="1231.5" x2="825.4" y2="1229.2" stroke-dasharray="3.0 28.83"/><line x1="823.9" y1="1229.2" x2="1142.6" y2="1226.8" stroke-dasharray="3.0 28.72"/><line x1="1141.1" y1="1226.9" x2="1458.8" y2="1224.5" stroke-dasharray="3.0 28.61"/><line x1="1457.3" y1="1224.5" x2="1773.8" y2="1222.2" stroke-dasharray="3.0 28.51"/><line x1="1772.3" y1="1222.2" x2="2087.8" y2="1219.9" stroke-dasharray="3.0 28.40"/><line x1="2086.3" y1="1219.9" x2="2400.8" y2="1217.6" stroke-dasharray="3.0 28.30"/><line x1="2399.3" y1="1217.6" x2="2712.7" y2="1215.2" stroke-dasharray="3.0 28.19"/></g><g stroke="#fff" stroke-opacity="0.090" stroke-width="1.8"><line x1="-117.3" y1="1215.9" x2="200.1" y2="1213.6" stroke-dasharray="3.0 28.59"/><line x1="198.6" y1="1213.6" x2="515.0" y2="1211.3" stroke-dasharray="3.0 28.49"/><line x1="513.5" y1="1211.3" x2="828.8" y2="1209.0" stroke-dasharray="3.0 28.38"/><line x1="827.3" y1="1209.0" x2="1141.6" y2="1206.7" stroke-dasharray="3.0 28.28"/><line x1="1140.1" y1="1206.7" x2="1453.3" y2="1204.4" stroke-dasharray="3.0 28.17"/><line x1="1451.8" y1="1204.4" x2="1764.0" y2="1202.2" stroke-dasharray="3.0 28.07"/><line x1="1762.5" y1="1202.2" x2="2073.7" y2="1199.9" stroke-dasharray="3.0 27.97"/><line x1="2072.2" y1="1199.9" x2="2382.4" y2="1197.7" stroke-dasharray="3.0 27.87"/><line x1="2380.9" y1="1197.7" x2="2690.0" y2="1195.4" stroke-dasharray="3.0 27.77"/></g><g stroke="#fff" stroke-opacity="0.090" stroke-width="1.8"><line x1="-100.9" y1="1196.0" x2="212.1" y2="1193.8" stroke-dasharray="3.0 28.15"/><line x1="210.6" y1="1193.8" x2="522.6" y2="1191.6" stroke-dasharray="3.0 28.05"/><line x1="521.1" y1="1191.6" x2="832.1" y2="1189.3" stroke-dasharray="3.0 27.95"/><line x1="830.6" y1="1189.3" x2="1140.6" y2="1187.1" stroke-dasharray="3.0 27.85"/><line x1="1139.1" y1="1187.1" x2="1448.1" y2="1184.9" stroke-dasharray="3.0 27.75"/><line x1="1446.6" y1="1184.9" x2="1754.5" y2="1182.7" stroke-dasharray="3.0 27.65"/><line x1="1753.0" y1="1182.7" x2="2060.0" y2="1180.5" stroke-dasharray="3.0 27.55"/><line x1="2058.5" y1="1180.5" x2="2364.5" y2="1178.3" stroke-dasharray="3.0 27.45"/><line x1="2363.0" y1="1178.4" x2="2668.0" y2="1176.2" stroke-dasharray="3.0 27.35"/></g><g stroke="#fff" stroke-opacity="0.100" stroke-width="2.0"><line x1="-85.0" y1="1176.7" x2="223.8" y2="1174.5" stroke-dasharray="3.0 27.73"/><line x1="222.3" y1="1174.6" x2="530.0" y2="1172.4" stroke-dasharray="3.0 27.63"/><line x1="528.5" y1="1172.4" x2="835.3" y2="1170.2" stroke-dasharray="3.0 27.53"/><line x1="833.8" y1="1170.2" x2="1139.6" y2="1168.1" stroke-dasharray="3.0 27.43"/><line x1="1138.1" y1="1168.1" x2="1442.9" y2="1165.9" stroke-dasharray="3.0 27.33"/><line x1="1441.4" y1="1165.9" x2="1745.3" y2="1163.8" stroke-dasharray="3.0 27.23"/><line x1="1743.8" y1="1163.8" x2="2046.6" y2="1161.7" stroke-dasharray="3.0 27.14"/><line x1="2045.1" y1="1161.7" x2="2347.0" y2="1159.5" stroke-dasharray="3.0 27.04"/><line x1="2345.5" y1="1159.5" x2="2646.5" y2="1157.4" stroke-dasharray="3.0 26.94"/></g><g stroke="#fff" stroke-opacity="0.090" stroke-width="1.8"><line x1="-69.5" y1="1157.9" x2="235.1" y2="1155.8" stroke-dasharray="3.0 27.31"/><line x1="233.6" y1="1155.8" x2="537.3" y2="1153.7" stroke-dasharray="3.0 27.21"/><line x1="535.8" y1="1153.7" x2="838.4" y2="1151.6" stroke-dasharray="3.0 27.12"/><line x1="836.9" y1="1151.6" x2="1138.7" y2="1149.5" stroke-dasharray="3.0 27.02"/><line x1="1137.2" y1="1149.5" x2="1437.9" y2="1147.4" stroke-dasharray="3.0 26.93"/><line x1="1436.4" y1="1147.5" x2="1736.2" y2="1145.4" stroke-dasharray="3.0 26.83"/><line x1="1734.7" y1="1145.4" x2="2033.6" y2="1143.3" stroke-dasharray="3.0 26.74"/><line x1="2032.1" y1="1143.3" x2="2330.0" y2="1141.2" stroke-dasharray="3.0 26.64"/><line x1="2328.5" y1="1141.2" x2="2625.5" y2="1139.2" stroke-dasharray="3.0 26.55"/></g><g stroke="#fff" stroke-opacity="0.090" stroke-width="1.8"><line x1="-54.4" y1="1139.7" x2="246.2" y2="1137.6" stroke-dasharray="3.0 26.91"/><line x1="244.7" y1="1137.6" x2="544.3" y2="1135.6" stroke-dasharray="3.0 26.81"/><line x1="542.8" y1="1135.6" x2="841.5" y2="1133.5" stroke-dasharray="3.0 26.72"/><line x1="840.0" y1="1133.5" x2="1137.7" y2="1131.5" stroke-dasharray="3.0 26.63"/><line x1="1136.2" y1="1131.5" x2="1433.1" y2="1129.4" stroke-dasharray="3.0 26.53"/><line x1="1431.6" y1="1129.5" x2="1727.5" y2="1127.4" stroke-dasharray="3.0 26.44"/><line x1="1726.0" y1="1127.4" x2="2020.9" y2="1125.4" stroke-dasharray="3.0 26.35"/><line x1="2019.4" y1="1125.4" x2="2313.5" y2="1123.4" stroke-dasharray="3.0 26.26"/><line x1="2312.0" y1="1123.4" x2="2605.2" y2="1121.4" stroke-dasharray="3.0 26.17"/></g><g stroke="#fff" stroke-opacity="0.090" stroke-width="1.8"><line x1="-39.7" y1="1121.9" x2="256.9" y2="1119.9" stroke-dasharray="3.0 26.51"/><line x1="255.4" y1="1119.9" x2="551.1" y2="1117.9" stroke-dasharray="3.0 26.42"/><line x1="549.6" y1="1117.9" x2="844.4" y2="1115.9" stroke-dasharray="3.0 26.33"/><line x1="842.9" y1="1115.9" x2="1136.8" y2="1113.9" stroke-dasharray="3.0 26.24"/><line x1="1135.3" y1="1113.9" x2="1428.3" y2="1111.9" stroke-dasharray="3.0 26.15"/><line x1="1426.8" y1="1111.9" x2="1718.9" y2="1109.9" stroke-dasharray="3.0 26.06"/><line x1="1717.4" y1="1110.0" x2="2008.6" y2="1108.0" stroke-dasharray="3.0 25.97"/><line x1="2007.1" y1="1108.0" x2="2297.4" y2="1106.0" stroke-dasharray="3.0 25.88"/><line x1="2295.9" y1="1106.0" x2="2585.3" y2="1104.1" stroke-dasharray="3.0 25.79"/></g><g stroke="#fff" stroke-opacity="0.090" stroke-width="1.8"><line x1="-317.6" y1="1106.5" x2="-23.9" y2="1104.5" stroke-dasharray="3.0 26.22"/><line x1="-25.4" y1="1104.5" x2="267.4" y2="1102.6" stroke-dasharray="3.0 26.13"/><line x1="265.9" y1="1102.6" x2="557.8" y2="1100.6" stroke-dasharray="3.0 26.04"/><line x1="556.3" y1="1100.6" x2="847.3" y2="1098.7" stroke-dasharray="3.0 25.95"/><line x1="845.8" y1="1098.7" x2="1136.0" y2="1096.8" stroke-dasharray="3.0 25.86"/><line x1="1134.5" y1="1096.8" x2="1423.7" y2="1094.8" stroke-dasharray="3.0 25.78"/><line x1="1422.2" y1="1094.8" x2="1710.6" y2="1092.9" stroke-dasharray="3.0 25.69"/><line x1="1709.1" y1="1092.9" x2="1996.6" y2="1091.0" stroke-dasharray="3.0 25.60"/><line x1="1995.1" y1="1091.0" x2="2281.7" y2="1089.1" stroke-dasharray="3.0 25.51"/><line x1="2280.2" y1="1089.1" x2="2566.0" y2="1087.2" stroke-dasharray="3.0 25.43"/></g><g stroke="#fff" stroke-opacity="0.090" stroke-width="1.8"><line x1="-299.9" y1="1089.5" x2="-10.0" y2="1087.6" stroke-dasharray="3.0 25.85"/><line x1="-11.5" y1="1087.6" x2="277.6" y2="1085.7" stroke-dasharray="3.0 25.76"/><line x1="276.1" y1="1085.7" x2="564.3" y2="1083.8" stroke-dasharray="3.0 25.67"/><line x1="562.8" y1="1083.8" x2="850.1" y2="1081.9" stroke-dasharray="3.0 25.58"/><line x1="848.6" y1="1082.0" x2="1135.1" y2="1080.1" stroke-dasharray="3.0 25.50"/><line x1="1133.6" y1="1080.1" x2="1419.2" y2="1078.2" stroke-dasharray="3.0 25.41"/><line x1="1417.7" y1="1078.2" x2="1702.5" y2="1076.3" stroke-dasharray="3.0 25.33"/><line x1="1701.0" y1="1076.3" x2="1984.9" y2="1074.4" stroke-dasharray="3.0 25.24"/><line x1="1983.4" y1="1074.5" x2="2266.4" y2="1072.6" stroke-dasharray="3.0 25.16"/><line x1="2264.9" y1="1072.6" x2="2547.1" y2="1070.7" stroke-dasharray="3.0 25.07"/></g><g stroke="#fff" stroke-opacity="0.090" stroke-width="1.8"><line x1="-282.7" y1="1073.0" x2="3.6" y2="1071.1" stroke-dasharray="3.0 25.48"/><line x1="2.1" y1="1071.2" x2="287.5" y2="1069.3" stroke-dasharray="3.0 25.39"/><line x1="286.0" y1="1069.3" x2="570.6" y2="1067.5" stroke-dasharray="3.0 25.31"/><line x1="569.1" y1="1067.5" x2="852.9" y2="1065.6" stroke-dasharray="3.0 25.22"/><line x1="851.4" y1="1065.6" x2="1134.3" y2="1063.8" stroke-dasharray="3.0 25.14"/><line x1="1132.8" y1="1063.8" x2="1414.8" y2="1062.0" stroke-dasharray="3.0 25.06"/><line x1="1413.3" y1="1062.0" x2="1694.5" y2="1060.1" stroke-dasharray="3.0 24.97"/><line x1="1693.0" y1="1060.1" x2="1973.4" y2="1058.3" stroke-dasharray="3.0 24.89"/><line x1="1971.9" y1="1058.3" x2="2251.5" y2="1056.5" stroke-dasharray="3.0 24.81"/><line x1="2250.0" y1="1056.5" x2="2528.8" y2="1054.7" stroke-dasharray="3.0 24.73"/></g><g stroke="#fff" stroke-opacity="0.090" stroke-width="1.8"><line x1="-265.9" y1="1056.9" x2="16.9" y2="1055.1" stroke-dasharray="3.0 25.12"/><line x1="15.4" y1="1055.1" x2="297.2" y2="1053.3" stroke-dasharray="3.0 25.04"/><line x1="295.7" y1="1053.3" x2="576.8" y2="1051.5" stroke-dasharray="3.0 24.96"/><line x1="575.3" y1="1051.5" x2="855.5" y2="1049.7" stroke-dasharray="3.0 24.87"/><line x1="854.0" y1="1049.7" x2="1133.4" y2="1047.9" stroke-dasharray="3.0 24.79"/><line x1="1131.9" y1="1047.9" x2="1410.5" y2="1046.1" stroke-dasharray="3.0 24.71"/><line x1="1409.0" y1="1046.1" x2="1686.8" y2="1044.3" stroke-dasharray="3.0 24.63"/><line x1="1685.3" y1="1044.4" x2="1962.3" y2="1042.6" stroke-dasharray="3.0 24.55"/><line x1="1960.8" y1="1042.6" x2="2237.0" y2="1040.8" stroke-dasharray="3.0 24.47"/><line x1="2235.5" y1="1040.8" x2="2510.8" y2="1039.0" stroke-dasharray="3.0 24.39"/></g><g stroke="#fff" stroke-opacity="0.090" stroke-width="1.8"><line x1="-249.5" y1="1041.2" x2="29.8" y2="1039.4" stroke-dasharray="3.0 24.77"/><line x1="28.3" y1="1039.4" x2="306.7" y2="1037.7" stroke-dasharray="3.0 24.69"/><line x1="305.2" y1="1037.7" x2="582.8" y2="1035.9" stroke-dasharray="3.0 24.61"/><line x1="581.3" y1="1035.9" x2="858.1" y2="1034.2" stroke-dasharray="3.0 24.53"/><line x1="856.6" y1="1034.2" x2="1132.6" y2="1032.4" stroke-dasharray="3.0 24.45"/><line x1="1131.1" y1="1032.4" x2="1406.4" y2="1030.7" stroke-dasharray="3.0 24.37"/><line x1="1404.9" y1="1030.7" x2="1679.3" y2="1028.9" stroke-dasharray="3.0 24.29"/><line x1="1677.8" y1="1029.0" x2="1951.4" y2="1027.2" stroke-dasharray="3.0 24.21"/><line x1="1949.9" y1="1027.2" x2="2222.8" y2="1025.5" stroke-dasharray="3.0 24.13"/><line x1="2221.3" y1="1025.5" x2="2493.3" y2="1023.8" stroke-dasharray="3.0 24.06"/></g><g stroke="#fff" stroke-opacity="0.090" stroke-width="1.8"><line x1="-233.5" y1="1025.9" x2="42.4" y2="1024.1" stroke-dasharray="3.0 24.43"/><line x1="40.9" y1="1024.1" x2="315.9" y2="1022.4" stroke-dasharray="3.0 24.36"/><line x1="314.4" y1="1022.4" x2="588.7" y2="1020.7" stroke-dasharray="3.0 24.28"/><line x1="587.2" y1="1020.7" x2="860.7" y2="1019.0" stroke-dasharray="3.0 24.20"/><line x1="859.2" y1="1019.0" x2="1131.9" y2="1017.3" stroke-dasharray="3.0 24.12"/><line x1="1130.4" y1="1017.3" x2="1402.3" y2="1015.6" stroke-dasharray="3.0 24.04"/><line x1="1400.8" y1="1015.6" x2="1671.9" y2="1013.9" stroke-dasharray="3.0 23.96"/><line x1="1670.4" y1="1013.9" x2="1940.8" y2="1012.2" stroke-dasharray="3.0 23.89"/><line x1="1939.3" y1="1012.2" x2="2208.9" y2="1010.5" stroke-dasharray="3.0 23.81"/><line x1="2207.4" y1="1010.6" x2="2476.2" y2="1008.9" stroke-dasharray="3.0 23.73"/><line x1="2474.7" y1="1008.9" x2="2742.8" y2="1007.2" stroke-dasharray="3.0 23.66"/></g><g stroke="#fff" stroke-opacity="0.100" stroke-width="2.0"><line x1="-217.8" y1="1010.9" x2="54.7" y2="1009.2" stroke-dasharray="3.0 24.10"/><line x1="53.2" y1="1009.2" x2="325.0" y2="1007.5" stroke-dasharray="3.0 24.03"/><line x1="323.5" y1="1007.5" x2="594.4" y2="1005.9" stroke-dasharray="3.0 23.95"/><line x1="592.9" y1="1005.9" x2="863.2" y2="1004.2" stroke-dasharray="3.0 23.87"/><line x1="861.7" y1="1004.2" x2="1131.1" y2="1002.5" stroke-dasharray="3.0 23.80"/><line x1="1129.6" y1="1002.6" x2="1398.3" y2="1000.9" stroke-dasharray="3.0 23.72"/><line x1="1396.8" y1="1000.9" x2="1664.8" y2="999.2" stroke-dasharray="3.0 23.64"/><line x1="1663.3" y1="999.3" x2="1930.4" y2="997.6" stroke-dasharray="3.0 23.57"/><line x1="1928.9" y1="997.6" x2="2195.4" y2="996.0" stroke-dasharray="3.0 23.49"/><line x1="2193.9" y1="996.0" x2="2459.6" y2="994.3" stroke-dasharray="3.0 23.42"/><line x1="2458.1" y1="994.3" x2="2723.0" y2="992.7" stroke-dasharray="3.0 23.35"/></g><g stroke="#fff" stroke-opacity="0.090" stroke-width="1.8"><line x1="-202.6" y1="996.3" x2="66.7" y2="994.6" stroke-dasharray="3.0 23.78"/><line x1="65.2" y1="994.7" x2="333.8" y2="993.0" stroke-dasharray="3.0 23.70"/><line x1="332.3" y1="993.0" x2="600.0" y2="991.4" stroke-dasharray="3.0 23.63"/><line x1="598.5" y1="991.4" x2="865.6" y2="989.8" stroke-dasharray="3.0 23.55"/><line x1="864.1" y1="989.8" x2="1130.4" y2="988.1" stroke-dasharray="3.0 23.48"/><line x1="1128.9" y1="988.1" x2="1394.4" y2="986.5" stroke-dasharray="3.0 23.41"/><line x1="1392.9" y1="986.5" x2="1657.7" y2="984.9" stroke-dasharray="3.0 23.33"/><line x1="1656.2" y1="984.9" x2="1920.3" y2="983.3" stroke-dasharray="3.0 23.26"/><line x1="1918.8" y1="983.3" x2="2182.2" y2="981.7" stroke-dasharray="3.0 23.19"/><line x1="2180.7" y1="981.7" x2="2443.3" y2="980.1" stroke-dasharray="3.0 23.11"/><line x1="2441.8" y1="980.1" x2="2703.7" y2="978.5" stroke-dasharray="3.0 23.04"/></g><g stroke="#fff" stroke-opacity="0.090" stroke-width="1.8"><line x1="-187.7" y1="982.0" x2="78.4" y2="980.4" stroke-dasharray="3.0 23.46"/><line x1="76.9" y1="980.4" x2="342.3" y2="978.8" stroke-dasharray="3.0 23.39"/><line x1="340.8" y1="978.8" x2="605.5" y2="977.2" stroke-dasharray="3.0 23.32"/><line x1="604.0" y1="977.2" x2="867.9" y2="975.7" stroke-dasharray="3.0 23.24"/><line x1="866.4" y1="975.7" x2="1129.7" y2="974.1" stroke-dasharray="3.0 23.17"/><line x1="1128.2" y1="974.1" x2="1390.6" y2="972.5" stroke-dasharray="3.0 23.10"/><line x1="1389.1" y1="972.5" x2="1650.9" y2="970.9" stroke-dasharray="3.0 23.03"/><line x1="1649.4" y1="970.9" x2="1910.4" y2="969.4" stroke-dasharray="3.0 22.95"/><line x1="1908.9" y1="969.4" x2="2169.3" y2="967.8" stroke-dasharray="3.0 22.88"/><line x1="2167.8" y1="967.8" x2="2427.4" y2="966.2" stroke-dasharray="3.0 22.81"/><line x1="2425.9" y1="966.2" x2="2684.8" y2="964.7" stroke-dasharray="3.0 22.74"/></g><g stroke="#fff" stroke-opacity="0.090" stroke-width="1.8"><line x1="-173.1" y1="968.1" x2="89.9" y2="966.5" stroke-dasharray="3.0 23.16"/><line x1="88.4" y1="966.5" x2="350.7" y2="965.0" stroke-dasharray="3.0 23.08"/><line x1="349.2" y1="965.0" x2="610.9" y2="963.4" stroke-dasharray="3.0 23.01"/><line x1="609.4" y1="963.4" x2="870.3" y2="961.9" stroke-dasharray="3.0 22.94"/><line x1="868.8" y1="961.9" x2="1129.0" y2="960.3" stroke-dasharray="3.0 22.87"/><line x1="1127.5" y1="960.3" x2="1386.9" y2="958.8" stroke-dasharray="3.0 22.80"/><line x1="1385.4" y1="958.8" x2="1644.2" y2="957.2" stroke-dasharray="3.0 22.73"/><line x1="1642.7" y1="957.3" x2="1900.8" y2="955.7" stroke-dasharray="3.0 22.66"/><line x1="1899.3" y1="955.7" x2="2156.7" y2="954.2" stroke-dasharray="3.0 22.59"/><line x1="2155.2" y1="954.2" x2="2411.8" y2="952.7" stroke-dasharray="3.0 22.52"/><line x1="2410.3" y1="952.7" x2="2666.3" y2="951.1" stroke-dasharray="3.0 22.45"/></g><g stroke="#fff" stroke-opacity="0.090" stroke-width="1.8"><line x1="-158.9" y1="954.5" x2="101.1" y2="952.9" stroke-dasharray="3.0 22.85"/><line x1="99.6" y1="953.0" x2="358.9" y2="951.4" stroke-dasharray="3.0 22.78"/><line x1="357.4" y1="951.4" x2="616.1" y2="949.9" stroke-dasharray="3.0 22.71"/><line x1="614.6" y1="949.9" x2="872.5" y2="948.4" stroke-dasharray="3.0 22.64"/><line x1="871.0" y1="948.4" x2="1128.3" y2="946.9" stroke-dasharray="3.0 22.57"/><line x1="1126.8" y1="946.9" x2="1383.3" y2="945.4" stroke-dasharray="3.0 22.51"/><line x1="1381.8" y1="945.4" x2="1637.7" y2="943.9" stroke-dasharray="3.0 22.44"/><line x1="1636.2" y1="943.9" x2="1891.4" y2="942.4" stroke-dasharray="3.0 22.37"/><line x1="1889.9" y1="942.4" x2="2144.3" y2="940.9" stroke-dasharray="3.0 22.30"/><line x1="2142.8" y1="940.9" x2="2396.7" y2="939.4" stroke-dasharray="3.0 22.23"/><line x1="2395.2" y1="939.4" x2="2648.3" y2="937.9" stroke-dasharray="3.0 22.16"/></g><g stroke="#fff" stroke-opacity="0.090" stroke-width="1.8"><line x1="-145.0" y1="941.2" x2="112.1" y2="939.7" stroke-dasharray="3.0 22.56"/><line x1="110.6" y1="939.7" x2="367.0" y2="938.2" stroke-dasharray="3.0 22.49"/><line x1="365.5" y1="938.2" x2="621.2" y2="936.7" stroke-dasharray="3.0 22.42"/><line x1="619.7" y1="936.7" x2="874.7" y2="935.2" stroke-dasharray="3.0 22.35"/><line x1="873.2" y1="935.2" x2="1127.6" y2="933.8" stroke-dasharray="3.0 22.29"/><line x1="1126.1" y1="933.8" x2="1379.8" y2="932.3" stroke-dasharray="3.0 22.22"/><line x1="1378.3" y1="932.3" x2="1631.3" y2="930.8" stroke-dasharray="3.0 22.15"/><line x1="1629.8" y1="930.8" x2="1882.1" y2="929.4" stroke-dasharray="3.0 22.08"/><line x1="1880.6" y1="929.4" x2="2132.3" y2="927.9" stroke-dasharray="3.0 22.02"/><line x1="2130.8" y1="927.9" x2="2381.8" y2="926.5" stroke-dasharray="3.0 21.95"/><line x1="2380.3" y1="926.5" x2="2630.6" y2="925.0" stroke-dasharray="3.0 21.88"/></g><g stroke="#fff" stroke-opacity="0.090" stroke-width="1.8"><line x1="-131.5" y1="928.2" x2="122.8" y2="926.7" stroke-dasharray="3.0 22.27"/><line x1="121.3" y1="926.7" x2="374.8" y2="925.3" stroke-dasharray="3.0 22.21"/><line x1="373.3" y1="925.3" x2="626.2" y2="923.8" stroke-dasharray="3.0 22.14"/><line x1="624.7" y1="923.8" x2="876.9" y2="922.4" stroke-dasharray="3.0 22.07"/><line x1="875.4" y1="922.4" x2="1126.9" y2="920.9" stroke-dasharray="3.0 22.00"/><line x1="1125.4" y1="920.9" x2="1376.3" y2="919.5" stroke-dasharray="3.0 21.94"/><line x1="1374.8" y1="919.5" x2="1625.0" y2="918.1" stroke-dasharray="3.0 21.87"/><line x1="1623.5" y1="918.1" x2="1873.1" y2="916.6" stroke-dasharray="3.0 21.81"/><line x1="1871.6" y1="916.6" x2="2120.5" y2="915.2" stroke-dasharray="3.0 21.74"/><line x1="2119.0" y1="915.2" x2="2367.3" y2="913.8" stroke-dasharray="3.0 21.68"/><line x1="2365.8" y1="913.8" x2="2613.4" y2="912.4" stroke-dasharray="3.0 21.61"/></g><g stroke="#fff" stroke-opacity="0.090" stroke-width="1.8"><line x1="-118.2" y1="915.4" x2="133.2" y2="914.0" stroke-dasharray="3.0 21.99"/><line x1="131.7" y1="914.0" x2="382.5" y2="912.6" stroke-dasharray="3.0 21.93"/><line x1="381.0" y1="912.6" x2="631.1" y2="911.2" stroke-dasharray="3.0 21.86"/><line x1="629.6" y1="911.2" x2="879.0" y2="909.8" stroke-dasharray="3.0 21.79"/><line x1="877.5" y1="909.8" x2="1126.3" y2="908.4" stroke-dasharray="3.0 21.73"/><line x1="1124.8" y1="908.4" x2="1372.9" y2="907.0" stroke-dasharray="3.0 21.66"/><line x1="1371.4" y1="907.0" x2="1618.9" y2="905.6" stroke-dasharray="3.0 21.60"/><line x1="1617.4" y1="905.6" x2="1864.3" y2="904.2" stroke-dasharray="3.0 21.54"/><line x1="1862.8" y1="904.2" x2="2109.0" y2="902.8" stroke-dasharray="3.0 21.47"/><line x1="2107.5" y1="902.8" x2="2353.1" y2="901.4" stroke-dasharray="3.0 21.41"/><line x1="2351.6" y1="901.4" x2="2596.5" y2="900.0" stroke-dasharray="3.0 21.34"/></g><g stroke="#fff" stroke-opacity="0.090" stroke-width="1.8"><line x1="-105.2" y1="903.0" x2="143.5" y2="901.6" stroke-dasharray="3.0 21.72"/><line x1="142.0" y1="901.6" x2="390.0" y2="900.2" stroke-dasharray="3.0 21.65"/><line x1="388.5" y1="900.2" x2="635.8" y2="898.8" stroke-dasharray="3.0 21.59"/><line x1="634.3" y1="898.8" x2="881.1" y2="897.5" stroke-dasharray="3.0 21.52"/><line x1="879.6" y1="897.5" x2="1125.7" y2="896.1" stroke-dasharray="3.0 21.46"/><line x1="1124.2" y1="896.1" x2="1369.6" y2="894.7" stroke-dasharray="3.0 21.40"/><line x1="1368.1" y1="894.7" x2="1612.9" y2="893.3" stroke-dasharray="3.0 21.33"/><line x1="1611.4" y1="893.3" x2="1855.6" y2="892.0" stroke-dasharray="3.0 21.27"/><line x1="1854.1" y1="892.0" x2="2097.7" y2="890.6" stroke-dasharray="3.0 21.21"/><line x1="2096.2" y1="890.6" x2="2339.2" y2="889.3" stroke-dasharray="3.0 21.15"/><line x1="2337.7" y1="889.3" x2="2580.0" y2="887.9" stroke-dasharray="3.0 21.08"/></g><g stroke="#fff" stroke-opacity="0.090" stroke-width="1.8"><line x1="-92.5" y1="890.8" x2="153.5" y2="889.5" stroke-dasharray="3.0 21.45"/><line x1="152.0" y1="889.5" x2="397.3" y2="888.1" stroke-dasharray="3.0 21.38"/><line x1="395.8" y1="888.1" x2="640.5" y2="886.8" stroke-dasharray="3.0 21.32"/><line x1="639.0" y1="886.8" x2="883.1" y2="885.4" stroke-dasharray="3.0 21.26"/><line x1="881.6" y1="885.4" x2="1125.0" y2="884.1" stroke-dasharray="3.0 21.20"/><line x1="1123.5" y1="884.1" x2="1366.4" y2="882.7" stroke-dasharray="3.0 21.13"/><line x1="1364.9" y1="882.7" x2="1607.1" y2="881.4" stroke-dasharray="3.0 21.07"/><line x1="1605.6" y1="881.4" x2="1847.2" y2="880.0" stroke-dasharray="3.0 21.01"/><line x1="1845.7" y1="880.1" x2="2086.7" y2="878.7" stroke-dasharray="3.0 20.95"/><line x1="2085.2" y1="878.7" x2="2325.6" y2="877.4" stroke-dasharray="3.0 20.89"/><line x1="2324.1" y1="877.4" x2="2563.8" y2="876.1" stroke-dasharray="3.0 20.83"/></g><g stroke="#fff" stroke-opacity="0.100" stroke-width="2.0"><line x1="-80.1" y1="878.9" x2="163.3" y2="877.6" stroke-dasharray="3.0 21.18"/><line x1="161.8" y1="877.6" x2="404.5" y2="876.3" stroke-dasharray="3.0 21.12"/><line x1="403.0" y1="876.3" x2="645.1" y2="874.9" stroke-dasharray="3.0 21.06"/><line x1="643.6" y1="874.9" x2="885.1" y2="873.6" stroke-dasharray="3.0 21.00"/><line x1="883.6" y1="873.6" x2="1124.4" y2="872.3" stroke-dasharray="3.0 20.94"/><line x1="1122.9" y1="872.3" x2="1363.2" y2="871.0" stroke-dasharray="3.0 20.88"/><line x1="1361.7" y1="871.0" x2="1601.4" y2="869.7" stroke-dasharray="3.0 20.82"/><line x1="1599.9" y1="869.7" x2="1838.9" y2="868.4" stroke-dasharray="3.0 20.76"/><line x1="1837.4" y1="868.4" x2="2075.9" y2="867.1" stroke-dasharray="3.0 20.70"/><line x1="2074.4" y1="867.1" x2="2312.3" y2="865.8" stroke-dasharray="3.0 20.64"/><line x1="2310.8" y1="865.8" x2="2548.0" y2="864.5" stroke-dasharray="3.0 20.58"/></g><g stroke="#fff" stroke-opacity="0.089" stroke-width="1.8"><line x1="-67.9" y1="867.3" x2="172.9" y2="866.0" stroke-dasharray="3.0 20.93"/><line x1="171.4" y1="866.0" x2="411.5" y2="864.7" stroke-dasharray="3.0 20.86"/><line x1="410.0" y1="864.7" x2="649.5" y2="863.4" stroke-dasharray="3.0 20.80"/><line x1="648.0" y1="863.4" x2="887.0" y2="862.1" stroke-dasharray="3.0 20.74"/><line x1="885.5" y1="862.1" x2="1123.8" y2="860.8" stroke-dasharray="3.0 20.69"/><line x1="1122.3" y1="860.8" x2="1360.1" y2="859.5" stroke-dasharray="3.0 20.63"/><line x1="1358.6" y1="859.5" x2="1595.8" y2="858.2" stroke-dasharray="3.0 20.57"/><line x1="1594.3" y1="858.2" x2="1830.8" y2="856.9" stroke-dasharray="3.0 20.51"/><line x1="1829.3" y1="856.9" x2="2065.3" y2="855.7" stroke-dasharray="3.0 20.45"/><line x1="2063.8" y1="855.7" x2="2299.2" y2="854.4" stroke-dasharray="3.0 20.39"/><line x1="2297.7" y1="854.4" x2="2532.5" y2="853.1" stroke-dasharray="3.0 20.33"/></g><g stroke="#fff" stroke-opacity="0.088" stroke-width="1.8"><line x1="-56.0" y1="855.9" x2="182.3" y2="854.6" stroke-dasharray="3.0 20.67"/><line x1="180.8" y1="854.6" x2="418.4" y2="853.3" stroke-dasharray="3.0 20.61"/><line x1="416.9" y1="853.3" x2="653.9" y2="852.0" stroke-dasharray="3.0 20.55"/><line x1="652.4" y1="852.0" x2="888.9" y2="850.8" stroke-dasharray="3.0 20.50"/><line x1="887.4" y1="850.8" x2="1123.3" y2="849.5" stroke-dasharray="3.0 20.44"/><line x1="1121.8" y1="849.5" x2="1357.1" y2="848.3" stroke-dasharray="3.0 20.38"/><line x1="1355.6" y1="848.3" x2="1590.3" y2="847.0" stroke-dasharray="3.0 20.32"/><line x1="1588.8" y1="847.0" x2="1822.9" y2="845.7" stroke-dasharray="3.0 20.26"/><line x1="1821.4" y1="845.8" x2="2055.0" y2="844.5" stroke-dasharray="3.0 20.21"/><line x1="2053.5" y1="844.5" x2="2286.5" y2="843.3" stroke-dasharray="3.0 20.15"/><line x1="2285.0" y1="843.3" x2="2517.4" y2="842.0" stroke-dasharray="3.0 20.09"/></g><g stroke="#fff" stroke-opacity="0.087" stroke-width="1.8"><line x1="-44.3" y1="844.7" x2="191.4" y2="843.4" stroke-dasharray="3.0 20.43"/><line x1="189.9" y1="843.4" x2="425.1" y2="842.2" stroke-dasharray="3.0 20.37"/><line x1="423.6" y1="842.2" x2="658.2" y2="840.9" stroke-dasharray="3.0 20.31"/><line x1="656.7" y1="841.0" x2="890.7" y2="839.7" stroke-dasharray="3.0 20.25"/><line x1="889.2" y1="839.7" x2="1122.7" y2="838.5" stroke-dasharray="3.0 20.20"/><line x1="1121.2" y1="838.5" x2="1354.1" y2="837.2" stroke-dasharray="3.0 20.14"/><line x1="1352.6" y1="837.2" x2="1584.9" y2="836.0" stroke-dasharray="3.0 20.08"/><line x1="1583.4" y1="836.0" x2="1815.2" y2="834.8" stroke-dasharray="3.0 20.03"/><line x1="1813.7" y1="834.8" x2="2044.8" y2="833.6" stroke-dasharray="3.0 19.97"/><line x1="2043.3" y1="833.6" x2="2274.0" y2="832.3" stroke-dasharray="3.0 19.91"/><line x1="2272.5" y1="832.4" x2="2502.5" y2="831.1" stroke-dasharray="3.0 19.86"/></g><g stroke="#fff" stroke-opacity="0.086" stroke-width="1.8"><line x1="-32.9" y1="833.7" x2="200.5" y2="832.5" stroke-dasharray="3.0 20.18"/><line x1="199.0" y1="832.5" x2="431.7" y2="831.3" stroke-dasharray="3.0 20.13"/><line x1="430.2" y1="831.3" x2="662.4" y2="830.1" stroke-dasharray="3.0 20.07"/><line x1="660.9" y1="830.1" x2="892.6" y2="828.9" stroke-dasharray="3.0 20.01"/><line x1="891.1" y1="828.9" x2="1122.1" y2="827.7" stroke-dasharray="3.0 19.96"/><line x1="1120.6" y1="827.7" x2="1351.2" y2="826.5" stroke-dasharray="3.0 19.90"/><line x1="1349.7" y1="826.5" x2="1579.6" y2="825.2" stroke-dasharray="3.0 19.85"/><line x1="1578.1" y1="825.3" x2="1807.5" y2="824.0" stroke-dasharray="3.0 19.79"/><line x1="1806.0" y1="824.1" x2="2034.9" y2="822.9" stroke-dasharray="3.0 19.74"/><line x1="2033.4" y1="822.9" x2="2261.7" y2="821.7" stroke-dasharray="3.0 19.68"/><line x1="2260.2" y1="821.7" x2="2488.0" y2="820.5" stroke-dasharray="3.0 19.63"/><line x1="2486.5" y1="820.5" x2="2713.7" y2="819.3" stroke-dasharray="3.0 19.57"/></g><g stroke="#fff" stroke-opacity="0.085" stroke-width="1.8"><line x1="-251.7" y1="824.2" x2="-20.2" y2="823.0" stroke-dasharray="3.0 20.00"/><line x1="-21.7" y1="823.0" x2="209.3" y2="821.8" stroke-dasharray="3.0 19.95"/><line x1="207.8" y1="821.8" x2="438.2" y2="820.6" stroke-dasharray="3.0 19.89"/><line x1="436.7" y1="820.6" x2="666.5" y2="819.4" stroke-dasharray="3.0 19.84"/><line x1="665.0" y1="819.4" x2="894.3" y2="818.2" stroke-dasharray="3.0 19.78"/><line x1="892.8" y1="818.3" x2="1121.6" y2="817.1" stroke-dasharray="3.0 19.73"/><line x1="1120.1" y1="817.1" x2="1348.3" y2="815.9" stroke-dasharray="3.0 19.67"/><line x1="1346.8" y1="815.9" x2="1574.5" y2="814.7" stroke-dasharray="3.0 19.62"/><line x1="1573.0" y1="814.7" x2="1800.1" y2="813.5" stroke-dasharray="3.0 19.56"/><line x1="1798.6" y1="813.5" x2="2025.2" y2="812.4" stroke-dasharray="3.0 19.51"/><line x1="2023.7" y1="812.4" x2="2249.7" y2="811.2" stroke-dasharray="3.0 19.45"/><line x1="2248.2" y1="811.2" x2="2473.7" y2="810.0" stroke-dasharray="3.0 19.40"/><line x1="2472.2" y1="810.0" x2="2697.2" y2="808.9" stroke-dasharray="3.0 19.35"/></g><g stroke="#fff" stroke-opacity="0.084" stroke-width="1.8"><line x1="-238.4" y1="813.7" x2="-9.2" y2="812.5" stroke-dasharray="3.0 19.77"/><line x1="-10.7" y1="812.5" x2="217.9" y2="811.3" stroke-dasharray="3.0 19.71"/><line x1="216.4" y1="811.3" x2="444.5" y2="810.2" stroke-dasharray="3.0 19.66"/><line x1="443.0" y1="810.2" x2="670.6" y2="809.0" stroke-dasharray="3.0 19.61"/><line x1="669.1" y1="809.0" x2="896.1" y2="807.8" stroke-dasharray="3.0 19.55"/><line x1="894.6" y1="807.8" x2="1121.1" y2="806.7" stroke-dasharray="3.0 19.50"/><line x1="1119.6" y1="806.7" x2="1345.5" y2="805.5" stroke-dasharray="3.0 19.44"/><line x1="1344.0" y1="805.5" x2="1569.4" y2="804.4" stroke-dasharray="3.0 19.39"/><line x1="1567.9" y1="804.4" x2="1792.8" y2="803.2" stroke-dasharray="3.0 19.34"/><line x1="1791.3" y1="803.2" x2="2015.6" y2="802.1" stroke-dasharray="3.0 19.28"/><line x1="2014.1" y1="802.1" x2="2238.0" y2="800.9" stroke-dasharray="3.0 19.23"/><line x1="2236.5" y1="800.9" x2="2459.7" y2="799.8" stroke-dasharray="3.0 19.18"/><line x1="2458.2" y1="799.8" x2="2681.0" y2="798.6" stroke-dasharray="3.0 19.13"/></g><g stroke="#fff" stroke-opacity="0.083" stroke-width="1.8"><line x1="-225.4" y1="803.4" x2="1.5" y2="802.2" stroke-dasharray="3.0 19.54"/><line x1="0.0" y1="802.2" x2="226.4" y2="801.1" stroke-dasharray="3.0 19.49"/><line x1="224.9" y1="801.1" x2="450.7" y2="799.9" stroke-dasharray="3.0 19.43"/><line x1="449.2" y1="799.9" x2="674.5" y2="798.8" stroke-dasharray="3.0 19.38"/><line x1="673.0" y1="798.8" x2="897.8" y2="797.6" stroke-dasharray="3.0 19.33"/><line x1="896.3" y1="797.6" x2="1120.5" y2="796.5" stroke-dasharray="3.0 19.27"/><line x1="1119.0" y1="796.5" x2="1342.8" y2="795.4" stroke-dasharray="3.0 19.22"/><line x1="1341.3" y1="795.4" x2="1564.5" y2="794.2" stroke-dasharray="3.0 19.17"/><line x1="1563.0" y1="794.2" x2="1785.6" y2="793.1" stroke-dasharray="3.0 19.12"/><line x1="1784.1" y1="793.1" x2="2006.3" y2="792.0" stroke-dasharray="3.0 19.07"/><line x1="2004.8" y1="792.0" x2="2226.4" y2="790.9" stroke-dasharray="3.0 19.01"/><line x1="2224.9" y1="790.9" x2="2446.0" y2="789.7" stroke-dasharray="3.0 18.96"/><line x1="2444.5" y1="789.7" x2="2665.2" y2="788.6" stroke-dasharray="3.0 18.91"/></g><g stroke="#fff" stroke-opacity="0.082" stroke-width="1.8"><line x1="-212.6" y1="793.2" x2="12.1" y2="792.1" stroke-dasharray="3.0 19.32"/><line x1="10.6" y1="792.1" x2="234.7" y2="791.0" stroke-dasharray="3.0 19.26"/><line x1="233.2" y1="791.0" x2="456.8" y2="789.9" stroke-dasharray="3.0 19.21"/><line x1="455.3" y1="789.9" x2="678.4" y2="788.7" stroke-dasharray="3.0 19.16"/><line x1="676.9" y1="788.8" x2="899.5" y2="787.6" stroke-dasharray="3.0 19.11"/><line x1="898.0" y1="787.6" x2="1120.0" y2="786.5" stroke-dasharray="3.0 19.06"/><line x1="1118.5" y1="786.5" x2="1340.1" y2="785.4" stroke-dasharray="3.0 19.00"/><line x1="1338.6" y1="785.4" x2="1559.6" y2="784.3" stroke-dasharray="3.0 18.95"/><line x1="1558.1" y1="784.3" x2="1778.6" y2="783.2" stroke-dasharray="3.0 18.90"/><line x1="1777.1" y1="783.2" x2="1997.1" y2="782.1" stroke-dasharray="3.0 18.85"/><line x1="1995.6" y1="782.1" x2="2215.1" y2="781.0" stroke-dasharray="3.0 18.80"/><line x1="2213.6" y1="781.0" x2="2432.6" y2="779.9" stroke-dasharray="3.0 18.75"/><line x1="2431.1" y1="779.9" x2="2649.6" y2="778.8" stroke-dasharray="3.0 18.70"/></g><g stroke="#fff" stroke-opacity="0.081" stroke-width="1.8"><line x1="-200.1" y1="783.3" x2="22.4" y2="782.2" stroke-dasharray="3.0 19.10"/><line x1="20.9" y1="782.2" x2="242.8" y2="781.1" stroke-dasharray="3.0 19.05"/><line x1="241.3" y1="781.1" x2="462.8" y2="780.0" stroke-dasharray="3.0 18.99"/><line x1="461.3" y1="780.0" x2="682.2" y2="778.9" stroke-dasharray="3.0 18.94"/><line x1="680.7" y1="778.9" x2="901.1" y2="777.8" stroke-dasharray="3.0 18.89"/><line x1="899.6" y1="777.8" x2="1119.5" y2="776.7" stroke-dasharray="3.0 18.84"/><line x1="1118.0" y1="776.7" x2="1337.4" y2="775.6" stroke-dasharray="3.0 18.79"/><line x1="1335.9" y1="775.7" x2="1554.8" y2="774.6" stroke-dasharray="3.0 18.74"/><line x1="1553.3" y1="774.6" x2="1771.7" y2="773.5" stroke-dasharray="3.0 18.69"/><line x1="1770.2" y1="773.5" x2="1988.1" y2="772.4" stroke-dasharray="3.0 18.64"/><line x1="1986.6" y1="772.4" x2="2204.0" y2="771.3" stroke-dasharray="3.0 18.59"/><line x1="2202.5" y1="771.3" x2="2419.4" y2="770.2" stroke-dasharray="3.0 18.54"/><line x1="2417.9" y1="770.3" x2="2634.3" y2="769.2" stroke-dasharray="3.0 18.49"/></g><g stroke="#fff" stroke-opacity="0.089" stroke-width="2.0"><line x1="-187.8" y1="773.6" x2="32.5" y2="772.5" stroke-dasharray="3.0 18.88"/><line x1="31.0" y1="772.5" x2="250.8" y2="771.4" stroke-dasharray="3.0 18.83"/><line x1="249.3" y1="771.4" x2="468.6" y2="770.4" stroke-dasharray="3.0 18.78"/><line x1="467.1" y1="770.4" x2="685.9" y2="769.3" stroke-dasharray="3.0 18.73"/><line x1="684.4" y1="769.3" x2="902.7" y2="768.2" stroke-dasharray="3.0 18.68"/><line x1="901.2" y1="768.2" x2="1119.0" y2="767.1" stroke-dasharray="3.0 18.63"/><line x1="1117.5" y1="767.1" x2="1334.8" y2="766.1" stroke-dasharray="3.0 18.58"/><line x1="1333.3" y1="766.1" x2="1550.2" y2="765.0" stroke-dasharray="3.0 18.53"/><line x1="1548.7" y1="765.0" x2="1765.0" y2="763.9" stroke-dasharray="3.0 18.48"/><line x1="1763.5" y1="764.0" x2="1979.3" y2="762.9" stroke-dasharray="3.0 18.43"/><line x1="1977.8" y1="762.9" x2="2193.2" y2="761.8" stroke-dasharray="3.0 18.38"/><line x1="2191.7" y1="761.8" x2="2406.5" y2="760.8" stroke-dasharray="3.0 18.34"/><line x1="2405.0" y1="760.8" x2="2619.4" y2="759.7" stroke-dasharray="3.0 18.29"/></g><g stroke="#fff" stroke-opacity="0.079" stroke-width="1.8"><line x1="-175.7" y1="764.1" x2="42.5" y2="763.0" stroke-dasharray="3.0 18.67"/><line x1="41.0" y1="763.0" x2="258.7" y2="761.9" stroke-dasharray="3.0 18.62"/><line x1="257.2" y1="761.9" x2="474.4" y2="760.9" stroke-dasharray="3.0 18.57"/><line x1="472.9" y1="760.9" x2="689.6" y2="759.8" stroke-dasharray="3.0 18.52"/><line x1="688.1" y1="759.8" x2="904.3" y2="758.8" stroke-dasharray="3.0 18.47"/><line x1="902.8" y1="758.8" x2="1118.6" y2="757.7" stroke-dasharray="3.0 18.42"/><line x1="1117.1" y1="757.7" x2="1332.3" y2="756.7" stroke-dasharray="3.0 18.38"/><line x1="1330.8" y1="756.7" x2="1545.6" y2="755.6" stroke-dasharray="3.0 18.33"/><line x1="1544.1" y1="755.6" x2="1758.4" y2="754.6" stroke-dasharray="3.0 18.28"/><line x1="1756.9" y1="754.6" x2="1970.7" y2="753.6" stroke-dasharray="3.0 18.23"/><line x1="1969.2" y1="753.6" x2="2182.5" y2="752.5" stroke-dasharray="3.0 18.18"/><line x1="2181.0" y1="752.5" x2="2393.8" y2="751.5" stroke-dasharray="3.0 18.13"/><line x1="2392.3" y1="751.5" x2="2604.7" y2="750.5" stroke-dasharray="3.0 18.09"/></g><g stroke="#fff" stroke-opacity="0.078" stroke-width="1.8"><line x1="-163.9" y1="754.7" x2="52.2" y2="753.7" stroke-dasharray="3.0 18.46"/><line x1="50.7" y1="753.7" x2="266.4" y2="752.6" stroke-dasharray="3.0 18.41"/><line x1="264.9" y1="752.6" x2="480.0" y2="751.6" stroke-dasharray="3.0 18.37"/><line x1="478.5" y1="751.6" x2="693.2" y2="750.5" stroke-dasharray="3.0 18.32"/><line x1="691.7" y1="750.6" x2="905.9" y2="749.5" stroke-dasharray="3.0 18.27"/><line x1="904.4" y1="749.5" x2="1118.1" y2="748.5" stroke-dasharray="3.0 18.22"/><line x1="1116.6" y1="748.5" x2="1329.8" y2="747.5" stroke-dasharray="3.0 18.17"/><line x1="1328.3" y1="747.5" x2="1541.1" y2="746.4" stroke-dasharray="3.0 18.13"/><line x1="1539.6" y1="746.5" x2="1751.9" y2="745.4" stroke-dasharray="3.0 18.08"/><line x1="1750.4" y1="745.4" x2="1962.2" y2="744.4" stroke-dasharray="3.0 18.03"/><line x1="1960.7" y1="744.4" x2="2172.0" y2="743.4" stroke-dasharray="3.0 17.98"/><line x1="2170.5" y1="743.4" x2="2381.4" y2="742.4" stroke-dasharray="3.0 17.94"/><line x1="2379.9" y1="742.4" x2="2590.3" y2="741.4" stroke-dasharray="3.0 17.89"/></g><g stroke="#fff" stroke-opacity="0.078" stroke-width="1.8"><line x1="-152.3" y1="745.5" x2="61.8" y2="744.5" stroke-dasharray="3.0 18.26"/><line x1="60.3" y1="744.5" x2="273.9" y2="743.5" stroke-dasharray="3.0 18.21"/><line x1="272.4" y1="743.5" x2="485.5" y2="742.5" stroke-dasharray="3.0 18.16"/><line x1="484.0" y1="742.5" x2="696.7" y2="741.4" stroke-dasharray="3.0 18.12"/><line x1="695.2" y1="741.5" x2="907.4" y2="740.4" stroke-dasharray="3.0 18.07"/><line x1="905.9" y1="740.4" x2="1117.6" y2="739.4" stroke-dasharray="3.0 18.02"/><line x1="1116.1" y1="739.4" x2="1327.4" y2="738.4" stroke-dasharray="3.0 17.98"/><line x1="1325.9" y1="738.4" x2="1536.7" y2="737.4" stroke-dasharray="3.0 17.93"/><line x1="1535.2" y1="737.4" x2="1745.5" y2="736.4" stroke-dasharray="3.0 17.88"/><line x1="1744.0" y1="736.4" x2="1953.9" y2="735.4" stroke-dasharray="3.0 17.84"/><line x1="1952.4" y1="735.4" x2="2161.8" y2="734.4" stroke-dasharray="3.0 17.79"/><line x1="2160.3" y1="734.4" x2="2369.2" y2="733.4" stroke-dasharray="3.0 17.74"/><line x1="2367.7" y1="733.4" x2="2576.2" y2="732.4" stroke-dasharray="3.0 17.70"/></g><g stroke="#fff" stroke-opacity="0.077" stroke-width="1.8"><line x1="-140.9" y1="736.5" x2="71.2" y2="735.5" stroke-dasharray="3.0 18.06"/><line x1="69.7" y1="735.5" x2="281.3" y2="734.5" stroke-dasharray="3.0 18.01"/><line x1="279.8" y1="734.5" x2="491.0" y2="733.5" stroke-dasharray="3.0 17.97"/><line x1="489.5" y1="733.5" x2="700.2" y2="732.5" stroke-dasharray="3.0 17.92"/><line x1="698.7" y1="732.5" x2="908.9" y2="731.5" stroke-dasharray="3.0 17.87"/><line x1="907.4" y1="731.5" x2="1117.2" y2="730.5" stroke-dasharray="3.0 17.83"/><line x1="1115.7" y1="730.5" x2="1325.0" y2="729.5" stroke-dasharray="3.0 17.78"/><line x1="1323.5" y1="729.6" x2="1532.3" y2="728.6" stroke-dasharray="3.0 17.74"/><line x1="1530.8" y1="728.6" x2="1739.2" y2="727.6" stroke-dasharray="3.0 17.69"/><line x1="1737.7" y1="727.6" x2="1945.7" y2="726.6" stroke-dasharray="3.0 17.64"/><line x1="1944.2" y1="726.6" x2="2151.7" y2="725.6" stroke-dasharray="3.0 17.60"/><line x1="2150.2" y1="725.6" x2="2357.2" y2="724.6" stroke-dasharray="3.0 17.55"/><line x1="2355.7" y1="724.7" x2="2562.3" y2="723.7" stroke-dasharray="3.0 17.51"/></g><g stroke="#fff" stroke-opacity="0.076" stroke-width="1.8"><line x1="-129.8" y1="727.7" x2="80.4" y2="726.7" stroke-dasharray="3.0 17.86"/><line x1="78.9" y1="726.7" x2="288.6" y2="725.7" stroke-dasharray="3.0 17.82"/><line x1="287.1" y1="725.7" x2="496.3" y2="724.7" stroke-dasharray="3.0 17.77"/><line x1="494.8" y1="724.7" x2="703.5" y2="723.7" stroke-dasharray="3.0 17.73"/><line x1="702.0" y1="723.8" x2="910.4" y2="722.8" stroke-dasharray="3.0 17.68"/><line x1="908.9" y1="722.8" x2="1116.7" y2="721.8" stroke-dasharray="3.0 17.64"/><line x1="1115.2" y1="721.8" x2="1322.6" y2="720.8" stroke-dasharray="3.0 17.59"/><line x1="1321.1" y1="720.8" x2="1528.1" y2="719.9" stroke-dasharray="3.0 17.55"/><line x1="1526.6" y1="719.9" x2="1733.1" y2="718.9" stroke-dasharray="3.0 17.50"/><line x1="1731.6" y1="718.9" x2="1937.7" y2="717.9" stroke-dasharray="3.0 17.46"/><line x1="1936.2" y1="718.0" x2="2141.8" y2="717.0" stroke-dasharray="3.0 17.41"/><line x1="2140.3" y1="717.0" x2="2345.4" y2="716.0" stroke-dasharray="3.0 17.37"/><line x1="2343.9" y1="716.0" x2="2548.7" y2="715.1" stroke-dasharray="3.0 17.32"/></g><g stroke="#fff" stroke-opacity="0.075" stroke-width="1.8"><line x1="-118.8" y1="719.0" x2="89.4" y2="718.0" stroke-dasharray="3.0 17.67"/><line x1="87.9" y1="718.0" x2="295.7" y2="717.1" stroke-dasharray="3.0 17.63"/><line x1="294.2" y1="717.1" x2="501.5" y2="716.1" stroke-dasharray="3.0 17.58"/><line x1="500.0" y1="716.1" x2="706.9" y2="715.1" stroke-dasharray="3.0 17.54"/><line x1="705.4" y1="715.1" x2="911.8" y2="714.2" stroke-dasharray="3.0 17.49"/><line x1="910.3" y1="714.2" x2="1116.3" y2="713.2" stroke-dasharray="3.0 17.45"/><line x1="1114.8" y1="713.2" x2="1320.3" y2="712.3" stroke-dasharray="3.0 17.40"/><line x1="1318.8" y1="712.3" x2="1523.9" y2="711.3" stroke-dasharray="3.0 17.36"/><line x1="1522.4" y1="711.3" x2="1727.1" y2="710.4" stroke-dasharray="3.0 17.32"/><line x1="1725.6" y1="710.4" x2="1929.8" y2="709.4" stroke-dasharray="3.0 17.27"/><line x1="1928.3" y1="709.5" x2="2132.1" y2="708.5" stroke-dasharray="3.0 17.23"/><line x1="2130.6" y1="708.5" x2="2333.9" y2="707.6" stroke-dasharray="3.0 17.18"/><line x1="2332.4" y1="707.6" x2="2535.3" y2="706.6" stroke-dasharray="3.0 17.14"/></g><g stroke="#fff" stroke-opacity="0.074" stroke-width="1.8"><line x1="-108.0" y1="710.5" x2="98.3" y2="709.5" stroke-dasharray="3.0 17.48"/><line x1="96.8" y1="709.5" x2="302.7" y2="708.6" stroke-dasharray="3.0 17.44"/><line x1="301.2" y1="708.6" x2="506.6" y2="707.6" stroke-dasharray="3.0 17.39"/><line x1="505.1" y1="707.6" x2="710.1" y2="706.7" stroke-dasharray="3.0 17.35"/><line x1="708.6" y1="706.7" x2="913.2" y2="705.8" stroke-dasharray="3.0 17.31"/><line x1="911.7" y1="705.8" x2="1115.8" y2="704.8" stroke-dasharray="3.0 17.26"/><line x1="1114.3" y1="704.8" x2="1318.0" y2="703.9" stroke-dasharray="3.0 17.22"/><line x1="1316.5" y1="703.9" x2="1519.8" y2="703.0" stroke-dasharray="3.0 17.18"/><line x1="1518.3" y1="703.0" x2="1721.1" y2="702.0" stroke-dasharray="3.0 17.13"/><line x1="1719.6" y1="702.0" x2="1922.0" y2="701.1" stroke-dasharray="3.0 17.09"/><line x1="1920.5" y1="701.1" x2="2122.5" y2="700.2" stroke-dasharray="3.0 17.05"/><line x1="2121.0" y1="700.2" x2="2322.6" y2="699.3" stroke-dasharray="3.0 17.00"/><line x1="2321.1" y1="699.3" x2="2522.2" y2="698.3" stroke-dasharray="3.0 16.96"/></g><g stroke="#fff" stroke-opacity="0.073" stroke-width="1.8"><line x1="-97.5" y1="702.1" x2="107.0" y2="701.2" stroke-dasharray="3.0 17.30"/><line x1="105.5" y1="701.2" x2="309.6" y2="700.2" stroke-dasharray="3.0 17.25"/><line x1="308.1" y1="700.2" x2="511.7" y2="699.3" stroke-dasharray="3.0 17.21"/><line x1="510.2" y1="699.3" x2="713.4" y2="698.4" stroke-dasharray="3.0 17.17"/><line x1="711.9" y1="698.4" x2="914.6" y2="697.5" stroke-dasharray="3.0 17.12"/><line x1="913.1" y1="697.5" x2="1115.4" y2="696.6" stroke-dasharray="3.0 17.08"/><line x1="1113.9" y1="696.6" x2="1315.8" y2="695.6" stroke-dasharray="3.0 17.04"/><line x1="1314.3" y1="695.6" x2="1515.8" y2="694.7" stroke-dasharray="3.0 17.00"/><line x1="1514.3" y1="694.7" x2="1715.3" y2="693.8" stroke-dasharray="3.0 16.95"/><line x1="1713.8" y1="693.8" x2="1914.4" y2="692.9" stroke-dasharray="3.0 16.91"/><line x1="1912.9" y1="692.9" x2="2113.1" y2="692.0" stroke-dasharray="3.0 16.87"/><line x1="2111.6" y1="692.0" x2="2311.4" y2="691.1" stroke-dasharray="3.0 16.83"/><line x1="2309.9" y1="691.1" x2="2509.3" y2="690.2" stroke-dasharray="3.0 16.79"/></g><g stroke="#fff" stroke-opacity="0.073" stroke-width="1.8"><line x1="-87.1" y1="693.9" x2="115.6" y2="693.0" stroke-dasharray="3.0 17.12"/><line x1="114.1" y1="693.0" x2="316.3" y2="692.0" stroke-dasharray="3.0 17.07"/><line x1="314.8" y1="692.1" x2="516.6" y2="691.1" stroke-dasharray="3.0 17.03"/><line x1="515.1" y1="691.1" x2="716.5" y2="690.2" stroke-dasharray="3.0 16.99"/><line x1="715.0" y1="690.2" x2="916.0" y2="689.3" stroke-dasharray="3.0 16.95"/><line x1="914.5" y1="689.3" x2="1115.0" y2="688.4" stroke-dasharray="3.0 16.90"/><line x1="1113.5" y1="688.4" x2="1313.6" y2="687.5" stroke-dasharray="3.0 16.86"/><line x1="1312.1" y1="687.5" x2="1511.8" y2="686.6" stroke-dasharray="3.0 16.82"/><line x1="1510.3" y1="686.6" x2="1709.6" y2="685.7" stroke-dasharray="3.0 16.78"/><line x1="1708.1" y1="685.7" x2="1907.0" y2="684.8" stroke-dasharray="3.0 16.74"/><line x1="1905.5" y1="684.9" x2="2103.9" y2="684.0" stroke-dasharray="3.0 16.70"/><line x1="2102.4" y1="684.0" x2="2300.5" y2="683.1" stroke-dasharray="3.0 16.65"/><line x1="2299.0" y1="683.1" x2="2496.6" y2="682.2" stroke-dasharray="3.0 16.61"/></g><g stroke="#fff" stroke-opacity="0.080" stroke-width="2.0"><line x1="-76.9" y1="685.8" x2="124.0" y2="684.9" stroke-dasharray="3.0 16.94"/><line x1="122.5" y1="684.9" x2="323.0" y2="684.0" stroke-dasharray="3.0 16.90"/><line x1="321.5" y1="684.0" x2="521.5" y2="683.1" stroke-dasharray="3.0 16.85"/><line x1="520.0" y1="683.1" x2="719.6" y2="682.2" stroke-dasharray="3.0 16.81"/><line x1="718.1" y1="682.2" x2="917.3" y2="681.3" stroke-dasharray="3.0 16.77"/><line x1="915.8" y1="681.3" x2="1114.6" y2="680.5" stroke-dasharray="3.0 16.73"/><line x1="1113.1" y1="680.5" x2="1311.5" y2="679.6" stroke-dasharray="3.0 16.69"/><line x1="1310.0" y1="679.6" x2="1507.9" y2="678.7" stroke-dasharray="3.0 16.65"/><line x1="1506.4" y1="678.7" x2="1704.0" y2="677.8" stroke-dasharray="3.0 16.61"/><line x1="1702.5" y1="677.8" x2="1899.6" y2="676.9" stroke-dasharray="3.0 16.56"/><line x1="1898.1" y1="676.9" x2="2094.9" y2="676.1" stroke-dasharray="3.0 16.52"/><line x1="2093.4" y1="676.1" x2="2289.7" y2="675.2" stroke-dasharray="3.0 16.48"/><line x1="2288.2" y1="675.2" x2="2484.1" y2="674.3" stroke-dasharray="3.0 16.44"/><line x1="2482.6" y1="674.3" x2="2678.2" y2="673.4" stroke-dasharray="3.0 16.40"/></g><g stroke="#fff" stroke-opacity="0.071" stroke-width="1.8"><line x1="-66.8" y1="677.9" x2="132.3" y2="677.0" stroke-dasharray="3.0 16.76"/><line x1="130.8" y1="677.0" x2="329.5" y2="676.1" stroke-dasharray="3.0 16.72"/><line x1="328.0" y1="676.1" x2="526.3" y2="675.2" stroke-dasharray="3.0 16.68"/><line x1="524.8" y1="675.2" x2="722.6" y2="674.4" stroke-dasharray="3.0 16.64"/><line x1="721.1" y1="674.4" x2="918.6" y2="673.5" stroke-dasharray="3.0 16.60"/><line x1="917.1" y1="673.5" x2="1114.2" y2="672.6" stroke-dasharray="3.0 16.56"/><line x1="1112.7" y1="672.6" x2="1309.4" y2="671.7" stroke-dasharray="3.0 16.52"/><line x1="1307.9" y1="671.8" x2="1504.1" y2="670.9" stroke-dasharray="3.0 16.48"/><line x1="1502.6" y1="670.9" x2="1698.5" y2="670.0" stroke-dasharray="3.0 16.44"/><line x1="1697.0" y1="670.0" x2="1892.4" y2="669.2" stroke-dasharray="3.0 16.40"/><line x1="1890.9" y1="669.2" x2="2086.0" y2="668.3" stroke-dasharray="3.0 16.36"/><line x1="2084.5" y1="668.3" x2="2279.1" y2="667.4" stroke-dasharray="3.0 16.32"/><line x1="2277.6" y1="667.5" x2="2471.9" y2="666.6" stroke-dasharray="3.0 16.28"/><line x1="2470.4" y1="666.6" x2="2664.3" y2="665.7" stroke-dasharray="3.0 16.24"/></g><g stroke="#fff" stroke-opacity="0.070" stroke-width="1.8"><line x1="-57.0" y1="670.1" x2="140.4" y2="669.2" stroke-dasharray="3.0 16.59"/><line x1="138.9" y1="669.2" x2="335.9" y2="668.3" stroke-dasharray="3.0 16.55"/><line x1="334.4" y1="668.3" x2="531.0" y2="667.5" stroke-dasharray="3.0 16.51"/><line x1="529.5" y1="667.5" x2="725.6" y2="666.6" stroke-dasharray="3.0 16.47"/><line x1="724.1" y1="666.6" x2="919.9" y2="665.8" stroke-dasharray="3.0 16.43"/><line x1="918.4" y1="665.8" x2="1113.8" y2="664.9" stroke-dasharray="3.0 16.39"/><line x1="1112.3" y1="664.9" x2="1307.3" y2="664.1" stroke-dasharray="3.0 16.35"/><line x1="1305.8" y1="664.1" x2="1500.4" y2="663.2" stroke-dasharray="3.0 16.31"/><line x1="1498.9" y1="663.2" x2="1693.1" y2="662.4" stroke-dasharray="3.0 16.27"/><line x1="1691.6" y1="662.4" x2="1885.3" y2="661.5" stroke-dasharray="3.0 16.23"/><line x1="1883.8" y1="661.5" x2="2077.2" y2="660.7" stroke-dasharray="3.0 16.19"/><line x1="2075.7" y1="660.7" x2="2268.8" y2="659.8" stroke-dasharray="3.0 16.15"/><line x1="2267.3" y1="659.8" x2="2459.9" y2="659.0" stroke-dasharray="3.0 16.11"/><line x1="2458.4" y1="659.0" x2="2650.6" y2="658.2" stroke-dasharray="3.0 16.07"/></g><g stroke="#fff" stroke-opacity="0.070" stroke-width="1.8"><line x1="-47.3" y1="662.4" x2="148.4" y2="661.5" stroke-dasharray="3.0 16.42"/><line x1="146.9" y1="661.6" x2="342.2" y2="660.7" stroke-dasharray="3.0 16.38"/><line x1="340.7" y1="660.7" x2="535.6" y2="659.9" stroke-dasharray="3.0 16.34"/><line x1="534.1" y1="659.9" x2="728.6" y2="659.0" stroke-dasharray="3.0 16.30"/><line x1="727.1" y1="659.0" x2="921.2" y2="658.2" stroke-dasharray="3.0 16.26"/><line x1="919.7" y1="658.2" x2="1113.4" y2="657.3" stroke-dasharray="3.0 16.22"/><line x1="1111.9" y1="657.3" x2="1305.2" y2="656.5" stroke-dasharray="3.0 16.18"/><line x1="1303.7" y1="656.5" x2="1496.7" y2="655.7" stroke-dasharray="3.0 16.14"/><line x1="1495.2" y1="655.7" x2="1687.7" y2="654.8" stroke-dasharray="3.0 16.11"/><line x1="1686.2" y1="654.8" x2="1878.4" y2="654.0" stroke-dasharray="3.0 16.07"/><line x1="1876.9" y1="654.0" x2="2068.7" y2="653.2" stroke-dasharray="3.0 16.03"/><line x1="2067.2" y1="653.2" x2="2258.5" y2="652.4" stroke-dasharray="3.0 15.99"/><line x1="2257.0" y1="652.4" x2="2448.0" y2="651.5" stroke-dasharray="3.0 15.95"/><line x1="2446.5" y1="651.5" x2="2637.2" y2="650.7" stroke-dasharray="3.0 15.91"/></g><g stroke="#fff" stroke-opacity="0.069" stroke-width="1.8"><line x1="-37.8" y1="654.9" x2="156.2" y2="654.0" stroke-dasharray="3.0 16.25"/><line x1="154.7" y1="654.0" x2="348.4" y2="653.2" stroke-dasharray="3.0 16.21"/><line x1="346.9" y1="653.2" x2="540.1" y2="652.4" stroke-dasharray="3.0 16.17"/><line x1="538.6" y1="652.4" x2="731.5" y2="651.5" stroke-dasharray="3.0 16.14"/><line x1="730.0" y1="651.6" x2="922.4" y2="650.7" stroke-dasharray="3.0 16.10"/><line x1="920.9" y1="650.7" x2="1113.0" y2="649.9" stroke-dasharray="3.0 16.06"/><line x1="1111.5" y1="649.9" x2="1303.2" y2="649.1" stroke-dasharray="3.0 16.02"/><line x1="1301.7" y1="649.1" x2="1493.0" y2="648.3" stroke-dasharray="3.0 15.98"/><line x1="1491.5" y1="648.3" x2="1682.5" y2="647.4" stroke-dasharray="3.0 15.94"/><line x1="1681.0" y1="647.4" x2="1871.5" y2="646.6" stroke-dasharray="3.0 15.91"/><line x1="1870.0" y1="646.6" x2="2060.2" y2="645.8" stroke-dasharray="3.0 15.87"/><line x1="2058.7" y1="645.8" x2="2248.5" y2="645.0" stroke-dasharray="3.0 15.83"/><line x1="2247.0" y1="645.0" x2="2436.4" y2="644.2" stroke-dasharray="3.0 15.79"/><line x1="2434.9" y1="644.2" x2="2624.0" y2="643.4" stroke-dasharray="3.0 15.75"/></g><g stroke="#fff" stroke-opacity="0.068" stroke-width="1.8"><line x1="-28.5" y1="647.5" x2="163.9" y2="646.6" stroke-dasharray="3.0 16.09"/><line x1="162.4" y1="646.6" x2="354.4" y2="645.8" stroke-dasharray="3.0 16.05"/><line x1="352.9" y1="645.8" x2="544.6" y2="645.0" stroke-dasharray="3.0 16.01"/><line x1="543.1" y1="645.0" x2="734.3" y2="644.2" stroke-dasharray="3.0 15.97"/><line x1="732.8" y1="644.2" x2="923.7" y2="643.4" stroke-dasharray="3.0 15.94"/><line x1="922.2" y1="643.4" x2="1112.7" y2="642.6" stroke-dasharray="3.0 15.90"/><line x1="1111.2" y1="642.6" x2="1301.3" y2="641.8" stroke-dasharray="3.0 15.86"/><line x1="1299.8" y1="641.8" x2="1489.5" y2="641.0" stroke-dasharray="3.0 15.82"/><line x1="1488.0" y1="641.0" x2="1677.3" y2="640.2" stroke-dasharray="3.0 15.79"/><line x1="1675.8" y1="640.2" x2="1864.8" y2="639.4" stroke-dasharray="3.0 15.75"/><line x1="1863.3" y1="639.4" x2="2051.9" y2="638.6" stroke-dasharray="3.0 15.71"/><line x1="2050.4" y1="638.6" x2="2238.6" y2="637.8" stroke-dasharray="3.0 15.67"/><line x1="2237.1" y1="637.8" x2="2425.0" y2="637.0" stroke-dasharray="3.0 15.64"/><line x1="2423.5" y1="637.0" x2="2611.0" y2="636.2" stroke-dasharray="3.0 15.60"/></g><g stroke="#fff" stroke-opacity="0.067" stroke-width="1.8"><line x1="-208.9" y1="641.0" x2="-17.8" y2="640.2" stroke-dasharray="3.0 15.97"/><line x1="-19.3" y1="640.2" x2="171.5" y2="639.4" stroke-dasharray="3.0 15.93"/><line x1="170.0" y1="639.4" x2="360.4" y2="638.6" stroke-dasharray="3.0 15.89"/><line x1="358.9" y1="638.6" x2="549.0" y2="637.8" stroke-dasharray="3.0 15.85"/><line x1="547.5" y1="637.8" x2="737.1" y2="637.0" stroke-dasharray="3.0 15.82"/><line x1="735.6" y1="637.0" x2="924.9" y2="636.2" stroke-dasharray="3.0 15.78"/><line x1="923.4" y1="636.2" x2="1112.3" y2="635.4" stroke-dasharray="3.0 15.74"/><line x1="1110.8" y1="635.4" x2="1299.3" y2="634.6" stroke-dasharray="3.0 15.70"/><line x1="1297.8" y1="634.6" x2="1486.0" y2="633.8" stroke-dasharray="3.0 15.67"/><line x1="1484.5" y1="633.8" x2="1672.3" y2="633.0" stroke-dasharray="3.0 15.63"/><line x1="1670.8" y1="633.0" x2="1858.2" y2="632.2" stroke-dasharray="3.0 15.59"/><line x1="1856.7" y1="632.2" x2="2043.7" y2="631.4" stroke-dasharray="3.0 15.56"/><line x1="2042.2" y1="631.4" x2="2228.9" y2="630.6" stroke-dasharray="3.0 15.52"/><line x1="2227.4" y1="630.7" x2="2413.8" y2="629.9" stroke-dasharray="3.0 15.48"/><line x1="2412.3" y1="629.9" x2="2598.2" y2="629.1" stroke-dasharray="3.0 15.45"/></g><g stroke="#fff" stroke-opacity="0.067" stroke-width="1.8"><line x1="-198.3" y1="633.8" x2="-8.7" y2="633.0" stroke-dasharray="3.0 15.81"/><line x1="-10.2" y1="633.0" x2="179.0" y2="632.2" stroke-dasharray="3.0 15.77"/><line x1="177.5" y1="632.2" x2="366.3" y2="631.4" stroke-dasharray="3.0 15.73"/><line x1="364.8" y1="631.5" x2="553.3" y2="630.7" stroke-dasharray="3.0 15.70"/><line x1="551.8" y1="630.7" x2="739.8" y2="629.9" stroke-dasharray="3.0 15.66"/><line x1="738.3" y1="629.9" x2="926.1" y2="629.1" stroke-dasharray="3.0 15.62"/><line x1="924.6" y1="629.1" x2="1111.9" y2="628.3" stroke-dasharray="3.0 15.59"/><line x1="1110.4" y1="628.3" x2="1297.4" y2="627.5" stroke-dasharray="3.0 15.55"/><line x1="1295.9" y1="627.5" x2="1482.5" y2="626.8" stroke-dasharray="3.0 15.51"/><line x1="1481.0" y1="626.8" x2="1667.3" y2="626.0" stroke-dasharray="3.0 15.48"/><line x1="1665.8" y1="626.0" x2="1851.7" y2="625.2" stroke-dasharray="3.0 15.44"/><line x1="1850.2" y1="625.2" x2="2035.7" y2="624.4" stroke-dasharray="3.0 15.40"/><line x1="2034.2" y1="624.4" x2="2219.4" y2="623.7" stroke-dasharray="3.0 15.37"/><line x1="2217.9" y1="623.7" x2="2402.7" y2="622.9" stroke-dasharray="3.0 15.33"/><line x1="2401.2" y1="622.9" x2="2585.6" y2="622.1" stroke-dasharray="3.0 15.30"/></g><g stroke="#fff" stroke-opacity="0.066" stroke-width="1.8"><line x1="-187.8" y1="626.8" x2="0.2" y2="626.0" stroke-dasharray="3.0 15.65"/><line x1="-1.3" y1="626.0" x2="186.3" y2="625.2" stroke-dasharray="3.0 15.61"/><line x1="184.8" y1="625.2" x2="372.1" y2="624.4" stroke-dasharray="3.0 15.58"/><line x1="370.6" y1="624.4" x2="557.5" y2="623.7" stroke-dasharray="3.0 15.54"/><line x1="556.0" y1="623.7" x2="742.6" y2="622.9" stroke-dasharray="3.0 15.50"/><line x1="741.1" y1="622.9" x2="927.2" y2="622.1" stroke-dasharray="3.0 15.47"/><line x1="925.7" y1="622.1" x2="1111.6" y2="621.3" stroke-dasharray="3.0 15.43"/><line x1="1110.1" y1="621.4" x2="1295.5" y2="620.6" stroke-dasharray="3.0 15.40"/><line x1="1294.0" y1="620.6" x2="1479.1" y2="619.8" stroke-dasharray="3.0 15.36"/><line x1="1477.6" y1="619.8" x2="1662.4" y2="619.1" stroke-dasharray="3.0 15.32"/><line x1="1660.9" y1="619.1" x2="1845.3" y2="618.3" stroke-dasharray="3.0 15.29"/><line x1="1843.8" y1="618.3" x2="2027.8" y2="617.5" stroke-dasharray="3.0 15.25"/><line x1="2026.3" y1="617.5" x2="2210.0" y2="616.8" stroke-dasharray="3.0 15.22"/><line x1="2208.5" y1="616.8" x2="2391.8" y2="616.0" stroke-dasharray="3.0 15.18"/><line x1="2390.3" y1="616.0" x2="2573.3" y2="615.3" stroke-dasharray="3.0 15.15"/></g><g stroke="#fff" stroke-opacity="0.065" stroke-width="1.8"><line x1="-177.5" y1="619.8" x2="8.9" y2="619.1" stroke-dasharray="3.0 15.50"/><line x1="7.4" y1="619.1" x2="193.5" y2="618.3" stroke-dasharray="3.0 15.46"/><line x1="192.0" y1="618.3" x2="377.8" y2="617.5" stroke-dasharray="3.0 15.43"/><line x1="376.3" y1="617.5" x2="561.7" y2="616.8" stroke-dasharray="3.0 15.39"/><line x1="560.2" y1="616.8" x2="745.2" y2="616.0" stroke-dasharray="3.0 15.35"/><line x1="743.7" y1="616.0" x2="928.4" y2="615.3" stroke-dasharray="3.0 15.32"/><line x1="926.9" y1="615.3" x2="1111.2" y2="614.5" stroke-dasharray="3.0 15.28"/><line x1="1109.7" y1="614.5" x2="1293.7" y2="613.7" stroke-dasharray="3.0 15.25"/><line x1="1292.2" y1="613.8" x2="1475.8" y2="613.0" stroke-dasharray="3.0 15.21"/><line x1="1474.3" y1="613.0" x2="1657.6" y2="612.2" stroke-dasharray="3.0 15.18"/><line x1="1656.1" y1="612.3" x2="1839.0" y2="611.5" stroke-dasharray="3.0 15.14"/><line x1="1837.5" y1="611.5" x2="2020.0" y2="610.7" stroke-dasharray="3.0 15.11"/><line x1="2018.5" y1="610.8" x2="2200.8" y2="610.0" stroke-dasharray="3.0 15.07"/><line x1="2199.3" y1="610.0" x2="2381.1" y2="609.3" stroke-dasharray="3.0 15.04"/><line x1="2379.6" y1="609.3" x2="2561.1" y2="608.5" stroke-dasharray="3.0 15.00"/></g><g stroke="#fff" stroke-opacity="0.072" stroke-width="2.0"><line x1="-167.4" y1="613.0" x2="17.5" y2="612.2" stroke-dasharray="3.0 15.35"/><line x1="16.0" y1="612.3" x2="200.6" y2="611.5" stroke-dasharray="3.0 15.31"/><line x1="199.1" y1="611.5" x2="383.4" y2="610.7" stroke-dasharray="3.0 15.28"/><line x1="381.9" y1="610.8" x2="565.8" y2="610.0" stroke-dasharray="3.0 15.24"/><line x1="564.3" y1="610.0" x2="747.8" y2="609.3" stroke-dasharray="3.0 15.20"/><line x1="746.3" y1="609.3" x2="929.5" y2="608.5" stroke-dasharray="3.0 15.17"/><line x1="928.0" y1="608.5" x2="1110.9" y2="607.8" stroke-dasharray="3.0 15.13"/><line x1="1109.4" y1="607.8" x2="1291.9" y2="607.0" stroke-dasharray="3.0 15.10"/><line x1="1290.4" y1="607.0" x2="1472.5" y2="606.3" stroke-dasharray="3.0 15.07"/><line x1="1471.0" y1="606.3" x2="1652.8" y2="605.5" stroke-dasharray="3.0 15.03"/><line x1="1651.3" y1="605.6" x2="1832.8" y2="604.8" stroke-dasharray="3.0 15.00"/><line x1="1831.3" y1="604.8" x2="2012.4" y2="604.1" stroke-dasharray="3.0 14.96"/><line x1="2010.9" y1="604.1" x2="2191.7" y2="603.3" stroke-dasharray="3.0 14.93"/><line x1="2190.2" y1="603.3" x2="2370.6" y2="602.6" stroke-dasharray="3.0 14.89"/><line x1="2369.1" y1="602.6" x2="2549.2" y2="601.9" stroke-dasharray="3.0 14.86"/></g><g stroke="#fff" stroke-opacity="0.064" stroke-width="1.8"><line x1="-157.5" y1="606.3" x2="26.0" y2="605.5" stroke-dasharray="3.0 15.20"/><line x1="24.5" y1="605.5" x2="207.6" y2="604.8" stroke-dasharray="3.0 15.16"/><line x1="206.1" y1="604.8" x2="388.9" y2="604.1" stroke-dasharray="3.0 15.13"/><line x1="387.4" y1="604.1" x2="569.8" y2="603.3" stroke-dasharray="3.0 15.09"/><line x1="568.3" y1="603.3" x2="750.4" y2="602.6" stroke-dasharray="3.0 15.06"/><line x1="748.9" y1="602.6" x2="930.6" y2="601.9" stroke-dasharray="3.0 15.02"/><line x1="929.1" y1="601.9" x2="1110.5" y2="601.1" stroke-dasharray="3.0 14.99"/><line x1="1109.0" y1="601.1" x2="1290.1" y2="600.4" stroke-dasharray="3.0 14.96"/><line x1="1288.6" y1="600.4" x2="1469.3" y2="599.7" stroke-dasharray="3.0 14.92"/><line x1="1467.8" y1="599.7" x2="1648.1" y2="599.0" stroke-dasharray="3.0 14.89"/><line x1="1646.6" y1="599.0" x2="1826.7" y2="598.2" stroke-dasharray="3.0 14.85"/><line x1="1825.2" y1="598.2" x2="2004.9" y2="597.5" stroke-dasharray="3.0 14.82"/><line x1="2003.4" y1="597.5" x2="2182.7" y2="596.8" stroke-dasharray="3.0 14.79"/><line x1="2181.2" y1="596.8" x2="2360.2" y2="596.1" stroke-dasharray="3.0 14.75"/><line x1="2358.7" y1="596.1" x2="2537.4" y2="595.3" stroke-dasharray="3.0 14.72"/></g><g stroke="#fff" stroke-opacity="0.063" stroke-width="1.8"><line x1="-147.7" y1="599.7" x2="34.3" y2="598.9" stroke-dasharray="3.0 15.05"/><line x1="32.8" y1="599.0" x2="214.5" y2="598.2" stroke-dasharray="3.0 15.02"/><line x1="213.0" y1="598.2" x2="394.3" y2="597.5" stroke-dasharray="3.0 14.98"/><line x1="392.8" y1="597.5" x2="573.8" y2="596.8" stroke-dasharray="3.0 14.95"/><line x1="572.3" y1="596.8" x2="752.9" y2="596.1" stroke-dasharray="3.0 14.91"/><line x1="751.4" y1="596.1" x2="931.7" y2="595.3" stroke-dasharray="3.0 14.88"/><line x1="930.2" y1="595.3" x2="1110.2" y2="594.6" stroke-dasharray="3.0 14.85"/><line x1="1108.7" y1="594.6" x2="1288.3" y2="593.9" stroke-dasharray="3.0 14.81"/><line x1="1286.8" y1="593.9" x2="1466.1" y2="593.2" stroke-dasharray="3.0 14.78"/><line x1="1464.6" y1="593.2" x2="1643.6" y2="592.5" stroke-dasharray="3.0 14.75"/><line x1="1642.1" y1="592.5" x2="1820.7" y2="591.8" stroke-dasharray="3.0 14.71"/><line x1="1819.2" y1="591.8" x2="1997.5" y2="591.0" stroke-dasharray="3.0 14.68"/><line x1="1996.0" y1="591.1" x2="2173.9" y2="590.3" stroke-dasharray="3.0 14.65"/><line x1="2172.4" y1="590.3" x2="2350.0" y2="589.6" stroke-dasharray="3.0 14.61"/><line x1="2348.5" y1="589.6" x2="2525.8" y2="588.9" stroke-dasharray="3.0 14.58"/></g><g stroke="#fff" stroke-opacity="0.063" stroke-width="1.8"><line x1="-138.0" y1="593.2" x2="42.5" y2="592.5" stroke-dasharray="3.0 14.91"/><line x1="41.0" y1="592.5" x2="221.3" y2="591.7" stroke-dasharray="3.0 14.87"/><line x1="219.8" y1="591.7" x2="399.6" y2="591.0" stroke-dasharray="3.0 14.84"/><line x1="398.1" y1="591.0" x2="577.7" y2="590.3" stroke-dasharray="3.0 14.81"/><line x1="576.2" y1="590.3" x2="755.4" y2="589.6" stroke-dasharray="3.0 14.77"/><line x1="753.9" y1="589.6" x2="932.8" y2="588.9" stroke-dasharray="3.0 14.74"/><line x1="931.3" y1="588.9" x2="1109.9" y2="588.2" stroke-dasharray="3.0 14.71"/><line x1="1108.4" y1="588.2" x2="1286.6" y2="587.5" stroke-dasharray="3.0 14.67"/><line x1="1285.1" y1="587.5" x2="1463.0" y2="586.8" stroke-dasharray="3.0 14.64"/><line x1="1461.5" y1="586.8" x2="1639.0" y2="586.1" stroke-dasharray="3.0 14.61"/><line x1="1637.5" y1="586.1" x2="1814.8" y2="585.4" stroke-dasharray="3.0 14.57"/><line x1="1813.3" y1="585.4" x2="1990.2" y2="584.7" stroke-dasharray="3.0 14.54"/><line x1="1988.7" y1="584.7" x2="2165.2" y2="584.0" stroke-dasharray="3.0 14.51"/><line x1="2163.7" y1="584.0" x2="2340.0" y2="583.3" stroke-dasharray="3.0 14.47"/><line x1="2338.5" y1="583.3" x2="2514.4" y2="582.6" stroke-dasharray="3.0 14.44"/></g><g stroke="#fff" stroke-opacity="0.062" stroke-width="1.8"><line x1="-128.6" y1="586.8" x2="50.6" y2="586.1" stroke-dasharray="3.0 14.77"/><line x1="49.1" y1="586.1" x2="227.9" y2="585.4" stroke-dasharray="3.0 14.73"/><line x1="226.4" y1="585.4" x2="404.9" y2="584.7" stroke-dasharray="3.0 14.70"/><line x1="403.4" y1="584.7" x2="581.5" y2="584.0" stroke-dasharray="3.0 14.67"/><line x1="580.0" y1="584.0" x2="757.9" y2="583.3" stroke-dasharray="3.0 14.63"/><line x1="756.4" y1="583.3" x2="933.9" y2="582.6" stroke-dasharray="3.0 14.60"/><line x1="932.4" y1="582.6" x2="1109.5" y2="581.9" stroke-dasharray="3.0 14.57"/><line x1="1108.0" y1="581.9" x2="1284.9" y2="581.2" stroke-dasharray="3.0 14.53"/><line x1="1283.4" y1="581.2" x2="1459.9" y2="580.5" stroke-dasharray="3.0 14.50"/><line x1="1458.4" y1="580.5" x2="1634.6" y2="579.8" stroke-dasharray="3.0 14.47"/><line x1="1633.1" y1="579.8" x2="1808.9" y2="579.1" stroke-dasharray="3.0 14.44"/><line x1="1807.4" y1="579.1" x2="1983.0" y2="578.4" stroke-dasharray="3.0 14.40"/><line x1="1981.5" y1="578.4" x2="2156.7" y2="577.7" stroke-dasharray="3.0 14.37"/><line x1="2155.2" y1="577.7" x2="2330.1" y2="577.0" stroke-dasharray="3.0 14.34"/><line x1="2328.6" y1="577.1" x2="2503.2" y2="576.4" stroke-dasharray="3.0 14.31"/></g><g stroke="#fff" stroke-opacity="0.062" stroke-width="1.8"><line x1="-119.2" y1="580.5" x2="58.5" y2="579.8" stroke-dasharray="3.0 14.63"/><line x1="57.0" y1="579.8" x2="234.5" y2="579.1" stroke-dasharray="3.0 14.59"/><line x1="233.0" y1="579.1" x2="410.1" y2="578.4" stroke-dasharray="3.0 14.56"/><line x1="408.6" y1="578.4" x2="585.3" y2="577.7" stroke-dasharray="3.0 14.53"/><line x1="583.8" y1="577.7" x2="760.3" y2="577.0" stroke-dasharray="3.0 14.50"/><line x1="758.8" y1="577.0" x2="934.9" y2="576.3" stroke-dasharray="3.0 14.46"/><line x1="933.4" y1="576.3" x2="1109.2" y2="575.7" stroke-dasharray="3.0 14.43"/><line x1="1107.7" y1="575.7" x2="1283.2" y2="575.0" stroke-dasharray="3.0 14.40"/><line x1="1281.7" y1="575.0" x2="1456.9" y2="574.3" stroke-dasharray="3.0 14.37"/><line x1="1455.4" y1="574.3" x2="1630.2" y2="573.6" stroke-dasharray="3.0 14.33"/><line x1="1628.7" y1="573.6" x2="1803.2" y2="572.9" stroke-dasharray="3.0 14.30"/><line x1="1801.7" y1="572.9" x2="1975.9" y2="572.3" stroke-dasharray="3.0 14.27"/><line x1="1974.4" y1="572.3" x2="2148.3" y2="571.6" stroke-dasharray="3.0 14.24"/><line x1="2146.8" y1="571.6" x2="2320.4" y2="570.9" stroke-dasharray="3.0 14.21"/><line x1="2318.9" y1="570.9" x2="2492.1" y2="570.2" stroke-dasharray="3.0 14.18"/><line x1="2490.6" y1="570.2" x2="2663.6" y2="569.6" stroke-dasharray="3.0 14.14"/></g><g stroke="#fff" stroke-opacity="0.061" stroke-width="1.8"><line x1="-110.0" y1="574.3" x2="66.4" y2="573.6" stroke-dasharray="3.0 14.49"/><line x1="64.9" y1="573.6" x2="240.9" y2="572.9" stroke-dasharray="3.0 14.46"/><line x1="239.4" y1="572.9" x2="415.2" y2="572.2" stroke-dasharray="3.0 14.42"/><line x1="413.7" y1="572.2" x2="589.1" y2="571.6" stroke-dasharray="3.0 14.39"/><line x1="587.6" y1="571.6" x2="762.7" y2="570.9" stroke-dasharray="3.0 14.36"/><line x1="761.2" y1="570.9" x2="935.9" y2="570.2" stroke-dasharray="3.0 14.33"/><line x1="934.4" y1="570.2" x2="1108.9" y2="569.5" stroke-dasharray="3.0 14.30"/><line x1="1107.4" y1="569.5" x2="1281.5" y2="568.9" stroke-dasharray="3.0 14.26"/><line x1="1280.0" y1="568.9" x2="1453.9" y2="568.2" stroke-dasharray="3.0 14.23"/><line x1="1452.4" y1="568.2" x2="1625.9" y2="567.5" stroke-dasharray="3.0 14.20"/><line x1="1624.4" y1="567.5" x2="1797.6" y2="566.8" stroke-dasharray="3.0 14.17"/><line x1="1796.1" y1="566.9" x2="1969.0" y2="566.2" stroke-dasharray="3.0 14.14"/><line x1="1967.5" y1="566.2" x2="2140.0" y2="565.5" stroke-dasharray="3.0 14.11"/><line x1="2138.5" y1="565.5" x2="2310.8" y2="564.9" stroke-dasharray="3.0 14.08"/><line x1="2309.3" y1="564.9" x2="2481.2" y2="564.2" stroke-dasharray="3.0 14.05"/><line x1="2479.7" y1="564.2" x2="2651.4" y2="563.5" stroke-dasharray="3.0 14.01"/></g><g stroke="#fff" stroke-opacity="0.060" stroke-width="1.8"><line x1="-101.0" y1="568.2" x2="74.1" y2="567.5" stroke-dasharray="3.0 14.35"/><line x1="72.6" y1="567.5" x2="247.3" y2="566.8" stroke-dasharray="3.0 14.32"/><line x1="245.8" y1="566.8" x2="420.2" y2="566.2" stroke-dasharray="3.0 14.29"/><line x1="418.7" y1="566.2" x2="592.7" y2="565.5" stroke-dasharray="3.0 14.26"/><line x1="591.2" y1="565.5" x2="765.0" y2="564.8" stroke-dasharray="3.0 14.23"/><line x1="763.5" y1="564.8" x2="937.0" y2="564.2" stroke-dasharray="3.0 14.20"/><line x1="935.5" y1="564.2" x2="1108.6" y2="563.5" stroke-dasharray="3.0 14.16"/><line x1="1107.1" y1="563.5" x2="1279.9" y2="562.8" stroke-dasharray="3.0 14.13"/><line x1="1278.4" y1="562.8" x2="1450.9" y2="562.2" stroke-dasharray="3.0 14.10"/><line x1="1449.4" y1="562.2" x2="1621.6" y2="561.5" stroke-dasharray="3.0 14.07"/><line x1="1620.1" y1="561.5" x2="1792.0" y2="560.9" stroke-dasharray="3.0 14.04"/><line x1="1790.5" y1="560.9" x2="1962.1" y2="560.2" stroke-dasharray="3.0 14.01"/><line x1="1960.6" y1="560.2" x2="2131.9" y2="559.5" stroke-dasharray="3.0 13.98"/><line x1="2130.4" y1="559.6" x2="2301.4" y2="558.9" stroke-dasharray="3.0 13.95"/><line x1="2299.9" y1="558.9" x2="2470.5" y2="558.2" stroke-dasharray="3.0 13.92"/><line x1="2469.0" y1="558.2" x2="2639.4" y2="557.6" stroke-dasharray="3.0 13.89"/></g><g stroke="#fff" stroke-opacity="0.060" stroke-width="1.8"><line x1="-92.1" y1="562.2" x2="81.6" y2="561.5" stroke-dasharray="3.0 14.22"/><line x1="80.1" y1="561.5" x2="253.5" y2="560.8" stroke-dasharray="3.0 14.19"/><line x1="252.0" y1="560.8" x2="425.1" y2="560.2" stroke-dasharray="3.0 14.16"/><line x1="423.6" y1="560.2" x2="596.4" y2="559.5" stroke-dasharray="3.0 14.13"/><line x1="594.9" y1="559.5" x2="767.3" y2="558.9" stroke-dasharray="3.0 14.10"/><line x1="765.8" y1="558.9" x2="938.0" y2="558.2" stroke-dasharray="3.0 14.06"/><line x1="936.5" y1="558.2" x2="1108.3" y2="557.6" stroke-dasharray="3.0 14.03"/><line x1="1106.8" y1="557.6" x2="1278.3" y2="556.9" stroke-dasharray="3.0 14.00"/><line x1="1276.8" y1="556.9" x2="1448.0" y2="556.3" stroke-dasharray="3.0 13.97"/><line x1="1446.5" y1="556.3" x2="1617.5" y2="555.6" stroke-dasharray="3.0 13.94"/><line x1="1616.0" y1="555.6" x2="1786.6" y2="555.0" stroke-dasharray="3.0 13.91"/><line x1="1785.1" y1="555.0" x2="1955.4" y2="554.3" stroke-dasharray="3.0 13.88"/><line x1="1953.9" y1="554.3" x2="2123.9" y2="553.7" stroke-dasharray="3.0 13.85"/><line x1="2122.4" y1="553.7" x2="2292.1" y2="553.0" stroke-dasharray="3.0 13.82"/><line x1="2290.6" y1="553.0" x2="2460.0" y2="552.4" stroke-dasharray="3.0 13.79"/><line x1="2458.5" y1="552.4" x2="2627.6" y2="551.7" stroke-dasharray="3.0 13.76"/></g><g stroke="#fff" stroke-opacity="0.059" stroke-width="1.8"><line x1="-83.3" y1="556.2" x2="89.1" y2="555.6" stroke-dasharray="3.0 14.09"/><line x1="87.6" y1="555.6" x2="259.7" y2="554.9" stroke-dasharray="3.0 14.06"/><line x1="258.2" y1="554.9" x2="430.0" y2="554.3" stroke-dasharray="3.0 14.03"/><line x1="428.5" y1="554.3" x2="599.9" y2="553.6" stroke-dasharray="3.0 14.00"/><line x1="598.4" y1="553.6" x2="769.6" y2="553.0" stroke-dasharray="3.0 13.97"/><line x1="768.1" y1="553.0" x2="938.9" y2="552.3" stroke-dasharray="3.0 13.94"/><line x1="937.4" y1="552.4" x2="1108.0" y2="551.7" stroke-dasharray="3.0 13.91"/><line x1="1106.5" y1="551.7" x2="1276.7" y2="551.1" stroke-dasharray="3.0 13.87"/><line x1="1275.2" y1="551.1" x2="1445.2" y2="550.4" stroke-dasharray="3.0 13.84"/><line x1="1443.7" y1="550.4" x2="1613.3" y2="549.8" stroke-dasharray="3.0 13.81"/><line x1="1611.8" y1="549.8" x2="1781.2" y2="549.1" stroke-dasharray="3.0 13.78"/><line x1="1779.7" y1="549.2" x2="1948.7" y2="548.5" stroke-dasharray="3.0 13.75"/><line x1="1947.2" y1="548.5" x2="2116.0" y2="547.9" stroke-dasharray="3.0 13.72"/><line x1="2114.5" y1="547.9" x2="2282.9" y2="547.2" stroke-dasharray="3.0 13.70"/><line x1="2281.4" y1="547.2" x2="2449.6" y2="546.6" stroke-dasharray="3.0 13.67"/><line x1="2448.1" y1="546.6" x2="2615.9" y2="546.0" stroke-dasharray="3.0 13.64"/></g><g stroke="#fff" stroke-opacity="0.065" stroke-width="2.0"><line x1="-74.6" y1="550.4" x2="96.5" y2="549.8" stroke-dasharray="3.0 13.96"/><line x1="95.0" y1="549.8" x2="265.8" y2="549.1" stroke-dasharray="3.0 13.93"/><line x1="264.3" y1="549.1" x2="434.7" y2="548.5" stroke-dasharray="3.0 13.90"/><line x1="433.2" y1="548.5" x2="603.4" y2="547.8" stroke-dasharray="3.0 13.87"/><line x1="601.9" y1="547.8" x2="771.8" y2="547.2" stroke-dasharray="3.0 13.84"/><line x1="770.3" y1="547.2" x2="939.9" y2="546.6" stroke-dasharray="3.0 13.81"/><line x1="938.4" y1="546.6" x2="1107.7" y2="545.9" stroke-dasharray="3.0 13.78"/><line x1="1106.2" y1="545.9" x2="1275.2" y2="545.3" stroke-dasharray="3.0 13.75"/><line x1="1273.7" y1="545.3" x2="1442.4" y2="544.7" stroke-dasharray="3.0 13.72"/><line x1="1440.9" y1="544.7" x2="1609.3" y2="544.1" stroke-dasharray="3.0 13.69"/><line x1="1607.8" y1="544.1" x2="1775.9" y2="543.4" stroke-dasharray="3.0 13.66"/><line x1="1774.4" y1="543.4" x2="1942.2" y2="542.8" stroke-dasharray="3.0 13.63"/><line x1="1940.7" y1="542.8" x2="2108.2" y2="542.2" stroke-dasharray="3.0 13.60"/><line x1="2106.7" y1="542.2" x2="2273.9" y2="541.5" stroke-dasharray="3.0 13.57"/><line x1="2272.4" y1="541.6" x2="2439.3" y2="540.9" stroke-dasharray="3.0 13.54"/><line x1="2437.8" y1="540.9" x2="2604.5" y2="540.3" stroke-dasharray="3.0 13.51"/></g><g stroke="#fff" stroke-opacity="0.058" stroke-width="1.8"><line x1="-66.1" y1="544.6" x2="103.7" y2="544.0" stroke-dasharray="3.0 13.83"/><line x1="102.2" y1="544.0" x2="271.7" y2="543.4" stroke-dasharray="3.0 13.80"/><line x1="270.2" y1="543.4" x2="439.5" y2="542.8" stroke-dasharray="3.0 13.77"/><line x1="438.0" y1="542.8" x2="606.9" y2="542.1" stroke-dasharray="3.0 13.74"/><line x1="605.4" y1="542.1" x2="774.0" y2="541.5" stroke-dasharray="3.0 13.71"/><line x1="772.5" y1="541.5" x2="940.9" y2="540.9" stroke-dasharray="3.0 13.68"/><line x1="939.4" y1="540.9" x2="1107.4" y2="540.3" stroke-dasharray="3.0 13.65"/><line x1="1105.9" y1="540.3" x2="1273.7" y2="539.6" stroke-dasharray="3.0 13.62"/><line x1="1272.2" y1="539.6" x2="1439.6" y2="539.0" stroke-dasharray="3.0 13.60"/><line x1="1438.1" y1="539.0" x2="1605.3" y2="538.4" stroke-dasharray="3.0 13.57"/><line x1="1603.8" y1="538.4" x2="1770.6" y2="537.8" stroke-dasharray="3.0 13.54"/><line x1="1769.1" y1="537.8" x2="1935.7" y2="537.2" stroke-dasharray="3.0 13.51"/><line x1="1934.2" y1="537.2" x2="2100.5" y2="536.6" stroke-dasharray="3.0 13.48"/><line x1="2099.0" y1="536.6" x2="2265.0" y2="535.9" stroke-dasharray="3.0 13.45"/><line x1="2263.5" y1="535.9" x2="2429.2" y2="535.3" stroke-dasharray="3.0 13.42"/><line x1="2427.7" y1="535.3" x2="2593.2" y2="534.7" stroke-dasharray="3.0 13.39"/></g><g stroke="#fff" stroke-opacity="0.057" stroke-width="1.8"><line x1="-57.7" y1="539.0" x2="110.9" y2="538.4" stroke-dasharray="3.0 13.71"/><line x1="109.4" y1="538.4" x2="277.6" y2="537.7" stroke-dasharray="3.0 13.68"/><line x1="276.1" y1="537.8" x2="444.1" y2="537.1" stroke-dasharray="3.0 13.65"/><line x1="442.6" y1="537.1" x2="610.3" y2="536.5" stroke-dasharray="3.0 13.62"/><line x1="608.8" y1="536.5" x2="776.2" y2="535.9" stroke-dasharray="3.0 13.59"/><line x1="774.7" y1="535.9" x2="941.8" y2="535.3" stroke-dasharray="3.0 13.56"/><line x1="940.3" y1="535.3" x2="1107.1" y2="534.7" stroke-dasharray="3.0 13.53"/><line x1="1105.6" y1="534.7" x2="1272.1" y2="534.1" stroke-dasharray="3.0 13.50"/><line x1="1270.6" y1="534.1" x2="1436.9" y2="533.4" stroke-dasharray="3.0 13.47"/><line x1="1435.4" y1="533.5" x2="1601.3" y2="532.8" stroke-dasharray="3.0 13.45"/><line x1="1599.8" y1="532.8" x2="1765.5" y2="532.2" stroke-dasharray="3.0 13.42"/><line x1="1764.0" y1="532.2" x2="1929.4" y2="531.6" stroke-dasharray="3.0 13.39"/><line x1="1927.9" y1="531.6" x2="2093.0" y2="531.0" stroke-dasharray="3.0 13.36"/><line x1="2091.5" y1="531.0" x2="2256.3" y2="530.4" stroke-dasharray="3.0 13.33"/><line x1="2254.8" y1="530.4" x2="2419.3" y2="529.8" stroke-dasharray="3.0 13.30"/><line x1="2417.8" y1="529.8" x2="2582.0" y2="529.2" stroke-dasharray="3.0 13.27"/></g><g stroke="#fff" stroke-opacity="0.057" stroke-width="1.8"><line x1="-49.4" y1="533.4" x2="117.9" y2="532.8" stroke-dasharray="3.0 13.58"/><line x1="116.4" y1="532.8" x2="283.4" y2="532.2" stroke-dasharray="3.0 13.55"/><line x1="281.9" y1="532.2" x2="448.7" y2="531.6" stroke-dasharray="3.0 13.53"/><line x1="447.2" y1="531.6" x2="613.7" y2="531.0" stroke-dasharray="3.0 13.50"/><line x1="612.2" y1="531.0" x2="778.3" y2="530.4" stroke-dasharray="3.0 13.47"/><line x1="776.8" y1="530.4" x2="942.7" y2="529.8" stroke-dasharray="3.0 13.44"/><line x1="941.2" y1="529.8" x2="1106.8" y2="529.2" stroke-dasharray="3.0 13.41"/><line x1="1105.3" y1="529.2" x2="1270.7" y2="528.6" stroke-dasharray="3.0 13.38"/><line x1="1269.2" y1="528.6" x2="1434.2" y2="528.0" stroke-dasharray="3.0 13.35"/><line x1="1432.7" y1="528.0" x2="1597.4" y2="527.4" stroke-dasharray="3.0 13.33"/><line x1="1595.9" y1="527.4" x2="1760.4" y2="526.8" stroke-dasharray="3.0 13.30"/><line x1="1758.9" y1="526.8" x2="1923.1" y2="526.2" stroke-dasharray="3.0 13.27"/><line x1="1921.6" y1="526.2" x2="2085.5" y2="525.6" stroke-dasharray="3.0 13.24"/><line x1="2084.0" y1="525.6" x2="2247.6" y2="525.0" stroke-dasharray="3.0 13.21"/><line x1="2246.1" y1="525.0" x2="2409.5" y2="524.4" stroke-dasharray="3.0 13.18"/><line x1="2408.0" y1="524.4" x2="2571.0" y2="523.8" stroke-dasharray="3.0 13.16"/></g><g stroke="#fff" stroke-opacity="0.056" stroke-width="1.8"><line x1="-41.3" y1="527.9" x2="124.8" y2="527.3" stroke-dasharray="3.0 13.46"/><line x1="123.3" y1="527.3" x2="289.2" y2="526.7" stroke-dasharray="3.0 13.43"/><line x1="287.7" y1="526.7" x2="453.2" y2="526.1" stroke-dasharray="3.0 13.40"/><line x1="451.7" y1="526.1" x2="617.0" y2="525.5" stroke-dasharray="3.0 13.38"/><line x1="615.5" y1="525.5" x2="780.4" y2="524.9" stroke-dasharray="3.0 13.35"/><line x1="778.9" y1="524.9" x2="943.6" y2="524.3" stroke-dasharray="3.0 13.32"/><line x1="942.1" y1="524.3" x2="1106.6" y2="523.7" stroke-dasharray="3.0 13.29"/><line x1="1105.1" y1="523.7" x2="1269.2" y2="523.1" stroke-dasharray="3.0 13.26"/><line x1="1267.7" y1="523.1" x2="1431.5" y2="522.5" stroke-dasharray="3.0 13.24"/><line x1="1430.0" y1="522.5" x2="1593.6" y2="521.9" stroke-dasharray="3.0 13.21"/><line x1="1592.1" y1="522.0" x2="1755.4" y2="521.4" stroke-dasharray="3.0 13.18"/><line x1="1753.9" y1="521.4" x2="1916.9" y2="520.8" stroke-dasharray="3.0 13.15"/><line x1="1915.4" y1="520.8" x2="2078.2" y2="520.2" stroke-dasharray="3.0 13.12"/><line x1="2076.7" y1="520.2" x2="2239.1" y2="519.6" stroke-dasharray="3.0 13.10"/><line x1="2237.6" y1="519.6" x2="2399.8" y2="519.0" stroke-dasharray="3.0 13.07"/><line x1="2398.3" y1="519.0" x2="2560.2" y2="518.4" stroke-dasharray="3.0 13.04"/></g><g stroke="#fff" stroke-opacity="0.056" stroke-width="1.8"><line x1="-33.3" y1="522.5" x2="131.6" y2="521.9" stroke-dasharray="3.0 13.34"/><line x1="130.1" y1="521.9" x2="294.8" y2="521.3" stroke-dasharray="3.0 13.31"/><line x1="293.3" y1="521.3" x2="457.6" y2="520.7" stroke-dasharray="3.0 13.29"/><line x1="456.1" y1="520.7" x2="620.2" y2="520.1" stroke-dasharray="3.0 13.26"/><line x1="618.7" y1="520.1" x2="782.5" y2="519.5" stroke-dasharray="3.0 13.23"/><line x1="781.0" y1="519.5" x2="944.5" y2="519.0" stroke-dasharray="3.0 13.20"/><line x1="943.0" y1="519.0" x2="1106.3" y2="518.4" stroke-dasharray="3.0 13.17"/><line x1="1104.8" y1="518.4" x2="1267.7" y2="517.8" stroke-dasharray="3.0 13.15"/><line x1="1266.2" y1="517.8" x2="1428.9" y2="517.2" stroke-dasharray="3.0 13.12"/><line x1="1427.4" y1="517.2" x2="1589.8" y2="516.6" stroke-dasharray="3.0 13.09"/><line x1="1588.3" y1="516.6" x2="1750.5" y2="516.0" stroke-dasharray="3.0 13.06"/><line x1="1749.0" y1="516.0" x2="1910.8" y2="515.5" stroke-dasharray="3.0 13.04"/><line x1="1909.3" y1="515.5" x2="2070.9" y2="514.9" stroke-dasharray="3.0 13.01"/><line x1="2069.4" y1="514.9" x2="2230.7" y2="514.3" stroke-dasharray="3.0 12.98"/><line x1="2229.2" y1="514.3" x2="2390.3" y2="513.7" stroke-dasharray="3.0 12.95"/><line x1="2388.8" y1="513.7" x2="2549.6" y2="513.1" stroke-dasharray="3.0 12.93"/></g><g stroke="#fff" stroke-opacity="0.055" stroke-width="1.8"><line x1="-187.9" y1="517.7" x2="-23.9" y2="517.2" stroke-dasharray="3.0 13.25"/><line x1="-25.4" y1="517.2" x2="138.4" y2="516.6" stroke-dasharray="3.0 13.22"/><line x1="136.9" y1="516.6" x2="300.3" y2="516.0" stroke-dasharray="3.0 13.20"/><line x1="298.8" y1="516.0" x2="462.0" y2="515.4" stroke-dasharray="3.0 13.17"/><line x1="460.5" y1="515.4" x2="623.4" y2="514.8" stroke-dasharray="3.0 13.14"/><line x1="621.9" y1="514.8" x2="784.6" y2="514.2" stroke-dasharray="3.0 13.11"/><line x1="783.1" y1="514.3" x2="945.4" y2="513.7" stroke-dasharray="3.0 13.09"/><line x1="943.9" y1="513.7" x2="1106.0" y2="513.1" stroke-dasharray="3.0 13.06"/><line x1="1104.5" y1="513.1" x2="1266.3" y2="512.5" stroke-dasharray="3.0 13.03"/><line x1="1264.8" y1="512.5" x2="1426.4" y2="511.9" stroke-dasharray="3.0 13.00"/><line x1="1424.9" y1="511.9" x2="1586.1" y2="511.4" stroke-dasharray="3.0 12.98"/><line x1="1584.6" y1="511.4" x2="1745.6" y2="510.8" stroke-dasharray="3.0 12.95"/><line x1="1744.1" y1="510.8" x2="1904.8" y2="510.2" stroke-dasharray="3.0 12.92"/><line x1="1903.3" y1="510.2" x2="2063.8" y2="509.7" stroke-dasharray="3.0 12.90"/><line x1="2062.3" y1="509.7" x2="2222.5" y2="509.1" stroke-dasharray="3.0 12.87"/><line x1="2221.0" y1="509.1" x2="2380.9" y2="508.5" stroke-dasharray="3.0 12.84"/><line x1="2379.4" y1="508.5" x2="2539.0" y2="507.9" stroke-dasharray="3.0 12.82"/></g><g stroke="#fff" stroke-opacity="0.055" stroke-width="1.8"><line x1="-178.9" y1="512.5" x2="-16.1" y2="511.9" stroke-dasharray="3.0 13.13"/><line x1="-17.6" y1="511.9" x2="145.0" y2="511.3" stroke-dasharray="3.0 13.11"/><line x1="143.5" y1="511.3" x2="305.8" y2="510.7" stroke-dasharray="3.0 13.08"/><line x1="304.3" y1="510.7" x2="466.3" y2="510.2" stroke-dasharray="3.0 13.05"/><line x1="464.8" y1="510.2" x2="626.6" y2="509.6" stroke-dasharray="3.0 13.03"/><line x1="625.1" y1="509.6" x2="786.6" y2="509.0" stroke-dasharray="3.0 13.00"/><line x1="785.1" y1="509.0" x2="946.3" y2="508.5" stroke-dasharray="3.0 12.97"/><line x1="944.8" y1="508.5" x2="1105.7" y2="507.9" stroke-dasharray="3.0 12.94"/><line x1="1104.2" y1="507.9" x2="1264.9" y2="507.3" stroke-dasharray="3.0 12.92"/><line x1="1263.4" y1="507.3" x2="1423.8" y2="506.8" stroke-dasharray="3.0 12.89"/><line x1="1422.3" y1="506.8" x2="1582.5" y2="506.2" stroke-dasharray="3.0 12.86"/><line x1="1581.0" y1="506.2" x2="1740.8" y2="505.6" stroke-dasharray="3.0 12.84"/><line x1="1739.3" y1="505.6" x2="1898.9" y2="505.1" stroke-dasharray="3.0 12.81"/><line x1="1897.4" y1="505.1" x2="2056.8" y2="504.5" stroke-dasharray="3.0 12.78"/><line x1="2055.3" y1="504.5" x2="2214.3" y2="503.9" stroke-dasharray="3.0 12.76"/><line x1="2212.8" y1="503.9" x2="2371.6" y2="503.4" stroke-dasharray="3.0 12.73"/><line x1="2370.1" y1="503.4" x2="2528.7" y2="502.8" stroke-dasharray="3.0 12.70"/></g><g stroke="#fff" stroke-opacity="0.054" stroke-width="1.8"><line x1="-170.1" y1="507.3" x2="-8.4" y2="506.7" stroke-dasharray="3.0 13.02"/><line x1="-9.9" y1="506.7" x2="151.6" y2="506.1" stroke-dasharray="3.0 12.99"/><line x1="150.1" y1="506.1" x2="311.2" y2="505.6" stroke-dasharray="3.0 12.97"/><line x1="309.7" y1="505.6" x2="470.6" y2="505.0" stroke-dasharray="3.0 12.94"/><line x1="469.1" y1="505.0" x2="629.7" y2="504.4" stroke-dasharray="3.0 12.91"/><line x1="628.2" y1="504.4" x2="788.6" y2="503.9" stroke-dasharray="3.0 12.89"/><line x1="787.1" y1="503.9" x2="947.2" y2="503.3" stroke-dasharray="3.0 12.86"/><line x1="945.7" y1="503.3" x2="1105.5" y2="502.8" stroke-dasharray="3.0 12.83"/><line x1="1104.0" y1="502.8" x2="1263.5" y2="502.2" stroke-dasharray="3.0 12.81"/><line x1="1262.0" y1="502.2" x2="1421.3" y2="501.6" stroke-dasharray="3.0 12.78"/><line x1="1419.8" y1="501.6" x2="1578.8" y2="501.1" stroke-dasharray="3.0 12.75"/><line x1="1577.3" y1="501.1" x2="1736.1" y2="500.5" stroke-dasharray="3.0 12.73"/><line x1="1734.6" y1="500.5" x2="1893.1" y2="500.0" stroke-dasharray="3.0 12.70"/><line x1="1891.6" y1="500.0" x2="2049.8" y2="499.4" stroke-dasharray="3.0 12.67"/><line x1="2048.3" y1="499.4" x2="2206.3" y2="498.9" stroke-dasharray="3.0 12.65"/><line x1="2204.8" y1="498.9" x2="2362.5" y2="498.3" stroke-dasharray="3.0 12.62"/><line x1="2361.0" y1="498.3" x2="2518.5" y2="497.8" stroke-dasharray="3.0 12.60"/></g><g stroke="#fff" stroke-opacity="0.054" stroke-width="1.8"><line x1="-161.3" y1="502.1" x2="-0.8" y2="501.6" stroke-dasharray="3.0 12.91"/><line x1="-2.3" y1="501.6" x2="158.0" y2="501.0" stroke-dasharray="3.0 12.88"/><line x1="156.5" y1="501.0" x2="316.5" y2="500.5" stroke-dasharray="3.0 12.85"/><line x1="315.0" y1="500.5" x2="474.8" y2="499.9" stroke-dasharray="3.0 12.83"/><line x1="473.3" y1="499.9" x2="632.8" y2="499.4" stroke-dasharray="3.0 12.80"/><line x1="631.3" y1="499.4" x2="790.5" y2="498.8" stroke-dasharray="3.0 12.77"/><line x1="789.0" y1="498.8" x2="948.0" y2="498.3" stroke-dasharray="3.0 12.75"/><line x1="946.5" y1="498.3" x2="1105.2" y2="497.7" stroke-dasharray="3.0 12.72"/><line x1="1103.7" y1="497.7" x2="1262.2" y2="497.1" stroke-dasharray="3.0 12.69"/><line x1="1260.7" y1="497.2" x2="1418.9" y2="496.6" stroke-dasharray="3.0 12.67"/><line x1="1417.4" y1="496.6" x2="1575.3" y2="496.1" stroke-dasharray="3.0 12.64"/><line x1="1573.8" y1="496.1" x2="1731.4" y2="495.5" stroke-dasharray="3.0 12.62"/><line x1="1729.9" y1="495.5" x2="1887.3" y2="495.0" stroke-dasharray="3.0 12.59"/><line x1="1885.8" y1="495.0" x2="2043.0" y2="494.4" stroke-dasharray="3.0 12.56"/><line x1="2041.5" y1="494.4" x2="2198.4" y2="493.9" stroke-dasharray="3.0 12.54"/><line x1="2196.9" y1="493.9" x2="2353.5" y2="493.3" stroke-dasharray="3.0 12.51"/><line x1="2352.0" y1="493.3" x2="2508.4" y2="492.8" stroke-dasharray="3.0 12.49"/></g><g stroke="#fff" stroke-opacity="0.059" stroke-width="2.0"><line x1="-152.7" y1="497.1" x2="6.7" y2="496.5" stroke-dasharray="3.0 12.79"/><line x1="5.2" y1="496.5" x2="164.4" y2="496.0" stroke-dasharray="3.0 12.77"/><line x1="162.9" y1="496.0" x2="321.8" y2="495.4" stroke-dasharray="3.0 12.74"/><line x1="320.3" y1="495.4" x2="478.9" y2="494.9" stroke-dasharray="3.0 12.72"/><line x1="477.4" y1="494.9" x2="635.8" y2="494.3" stroke-dasharray="3.0 12.69"/><line x1="634.3" y1="494.4" x2="792.5" y2="493.8" stroke-dasharray="3.0 12.66"/><line x1="791.0" y1="493.8" x2="948.8" y2="493.3" stroke-dasharray="3.0 12.64"/><line x1="947.3" y1="493.3" x2="1105.0" y2="492.7" stroke-dasharray="3.0 12.61"/><line x1="1103.5" y1="492.7" x2="1260.8" y2="492.2" stroke-dasharray="3.0 12.59"/><line x1="1259.3" y1="492.2" x2="1416.4" y2="491.6" stroke-dasharray="3.0 12.56"/><line x1="1414.9" y1="491.6" x2="1571.8" y2="491.1" stroke-dasharray="3.0 12.53"/><line x1="1570.3" y1="491.1" x2="1726.8" y2="490.5" stroke-dasharray="3.0 12.51"/><line x1="1725.3" y1="490.6" x2="1881.7" y2="490.0" stroke-dasharray="3.0 12.48"/><line x1="1880.2" y1="490.0" x2="2036.3" y2="489.5" stroke-dasharray="3.0 12.46"/><line x1="2034.8" y1="489.5" x2="2190.6" y2="488.9" stroke-dasharray="3.0 12.43"/><line x1="2189.1" y1="488.9" x2="2344.6" y2="488.4" stroke-dasharray="3.0 12.41"/><line x1="2343.1" y1="488.4" x2="2498.5" y2="487.9" stroke-dasharray="3.0 12.38"/></g><g stroke="#fff" stroke-opacity="0.053" stroke-width="1.8"><line x1="-144.3" y1="492.1" x2="14.1" y2="491.6" stroke-dasharray="3.0 12.68"/><line x1="12.6" y1="491.6" x2="170.6" y2="491.0" stroke-dasharray="3.0 12.66"/><line x1="169.1" y1="491.0" x2="327.0" y2="490.5" stroke-dasharray="3.0 12.63"/><line x1="325.5" y1="490.5" x2="483.0" y2="489.9" stroke-dasharray="3.0 12.61"/><line x1="481.5" y1="489.9" x2="638.8" y2="489.4" stroke-dasharray="3.0 12.58"/><line x1="637.3" y1="489.4" x2="794.4" y2="488.9" stroke-dasharray="3.0 12.55"/><line x1="792.9" y1="488.9" x2="949.7" y2="488.3" stroke-dasharray="3.0 12.53"/><line x1="948.2" y1="488.3" x2="1104.7" y2="487.8" stroke-dasharray="3.0 12.50"/><line x1="1103.2" y1="487.8" x2="1259.5" y2="487.3" stroke-dasharray="3.0 12.48"/><line x1="1258.0" y1="487.3" x2="1414.0" y2="486.7" stroke-dasharray="3.0 12.45"/><line x1="1412.5" y1="486.7" x2="1568.3" y2="486.2" stroke-dasharray="3.0 12.43"/><line x1="1566.8" y1="486.2" x2="1722.3" y2="485.7" stroke-dasharray="3.0 12.40"/><line x1="1720.8" y1="485.7" x2="1876.1" y2="485.1" stroke-dasharray="3.0 12.38"/><line x1="1874.6" y1="485.1" x2="2029.6" y2="484.6" stroke-dasharray="3.0 12.35"/><line x1="2028.1" y1="484.6" x2="2182.9" y2="484.1" stroke-dasharray="3.0 12.33"/><line x1="2181.4" y1="484.1" x2="2335.9" y2="483.5" stroke-dasharray="3.0 12.30"/><line x1="2334.4" y1="483.5" x2="2488.7" y2="483.0" stroke-dasharray="3.0 12.28"/><line x1="2487.2" y1="483.0" x2="2641.2" y2="482.5" stroke-dasharray="3.0 12.25"/></g><g stroke="#fff" stroke-opacity="0.052" stroke-width="1.8"><line x1="-135.9" y1="487.2" x2="21.3" y2="486.7" stroke-dasharray="3.0 12.57"/><line x1="19.8" y1="486.7" x2="176.8" y2="486.1" stroke-dasharray="3.0 12.55"/><line x1="175.3" y1="486.1" x2="332.1" y2="485.6" stroke-dasharray="3.0 12.52"/><line x1="330.6" y1="485.6" x2="487.1" y2="485.1" stroke-dasharray="3.0 12.50"/><line x1="485.6" y1="485.1" x2="641.8" y2="484.5" stroke-dasharray="3.0 12.47"/><line x1="640.3" y1="484.5" x2="796.3" y2="484.0" stroke-dasharray="3.0 12.45"/><line x1="794.8" y1="484.0" x2="950.5" y2="483.5" stroke-dasharray="3.0 12.42"/><line x1="949.0" y1="483.5" x2="1104.5" y2="482.9" stroke-dasharray="3.0 12.40"/><line x1="1103.0" y1="482.9" x2="1258.2" y2="482.4" stroke-dasharray="3.0 12.37"/><line x1="1256.7" y1="482.4" x2="1411.7" y2="481.9" stroke-dasharray="3.0 12.35"/><line x1="1410.2" y1="481.9" x2="1564.9" y2="481.4" stroke-dasharray="3.0 12.32"/><line x1="1563.4" y1="481.4" x2="1717.8" y2="480.8" stroke-dasharray="3.0 12.30"/><line x1="1716.3" y1="480.8" x2="1870.6" y2="480.3" stroke-dasharray="3.0 12.27"/><line x1="1869.1" y1="480.3" x2="2023.0" y2="479.8" stroke-dasharray="3.0 12.25"/><line x1="2021.5" y1="479.8" x2="2175.3" y2="479.3" stroke-dasharray="3.0 12.22"/><line x1="2173.8" y1="479.3" x2="2327.3" y2="478.7" stroke-dasharray="3.0 12.20"/><line x1="2325.8" y1="478.8" x2="2479.0" y2="478.2" stroke-dasharray="3.0 12.17"/><line x1="2477.5" y1="478.2" x2="2630.5" y2="477.7" stroke-dasharray="3.0 12.15"/></g><g stroke="#fff" stroke-opacity="0.052" stroke-width="1.8"><line x1="-127.7" y1="482.4" x2="28.5" y2="481.8" stroke-dasharray="3.0 12.47"/><line x1="27.0" y1="481.8" x2="182.9" y2="481.3" stroke-dasharray="3.0 12.44"/><line x1="181.4" y1="481.3" x2="337.1" y2="480.8" stroke-dasharray="3.0 12.42"/><line x1="335.6" y1="480.8" x2="491.0" y2="480.2" stroke-dasharray="3.0 12.39"/><line x1="489.5" y1="480.3" x2="644.7" y2="479.7" stroke-dasharray="3.0 12.37"/><line x1="643.2" y1="479.7" x2="798.1" y2="479.2" stroke-dasharray="3.0 12.34"/><line x1="796.6" y1="479.2" x2="951.3" y2="478.7" stroke-dasharray="3.0 12.32"/><line x1="949.8" y1="478.7" x2="1104.2" y2="478.2" stroke-dasharray="3.0 12.29"/><line x1="1102.7" y1="478.2" x2="1256.9" y2="477.6" stroke-dasharray="3.0 12.27"/><line x1="1255.4" y1="477.6" x2="1409.3" y2="477.1" stroke-dasharray="3.0 12.24"/><line x1="1407.8" y1="477.1" x2="1561.5" y2="476.6" stroke-dasharray="3.0 12.22"/><line x1="1560.0" y1="476.6" x2="1713.4" y2="476.1" stroke-dasharray="3.0 12.19"/><line x1="1711.9" y1="476.1" x2="1865.1" y2="475.6" stroke-dasharray="3.0 12.17"/><line x1="1863.6" y1="475.6" x2="2016.6" y2="475.0" stroke-dasharray="3.0 12.14"/><line x1="2015.1" y1="475.1" x2="2167.8" y2="474.5" stroke-dasharray="3.0 12.12"/><line x1="2166.3" y1="474.5" x2="2318.7" y2="474.0" stroke-dasharray="3.0 12.10"/><line x1="2317.2" y1="474.0" x2="2469.5" y2="473.5" stroke-dasharray="3.0 12.07"/><line x1="2468.0" y1="473.5" x2="2619.9" y2="473.0" stroke-dasharray="3.0 12.05"/></g><g stroke="#fff" stroke-opacity="0.051" stroke-width="1.8"><line x1="-119.5" y1="477.6" x2="35.6" y2="477.1" stroke-dasharray="3.0 12.36"/><line x1="34.1" y1="477.1" x2="189.0" y2="476.5" stroke-dasharray="3.0 12.34"/><line x1="187.5" y1="476.5" x2="342.1" y2="476.0" stroke-dasharray="3.0 12.31"/><line x1="340.6" y1="476.0" x2="494.9" y2="475.5" stroke-dasharray="3.0 12.29"/><line x1="493.4" y1="475.5" x2="647.6" y2="475.0" stroke-dasharray="3.0 12.26"/><line x1="646.1" y1="475.0" x2="800.0" y2="474.5" stroke-dasharray="3.0 12.24"/><line x1="798.5" y1="474.5" x2="952.1" y2="474.0" stroke-dasharray="3.0 12.21"/><line x1="950.6" y1="474.0" x2="1104.0" y2="473.4" stroke-dasharray="3.0 12.19"/><line x1="1102.5" y1="473.4" x2="1255.6" y2="472.9" stroke-dasharray="3.0 12.16"/><line x1="1254.1" y1="472.9" x2="1407.0" y2="472.4" stroke-dasharray="3.0 12.14"/><line x1="1405.5" y1="472.4" x2="1558.2" y2="471.9" stroke-dasharray="3.0 12.12"/><line x1="1556.7" y1="471.9" x2="1709.1" y2="471.4" stroke-dasharray="3.0 12.09"/><line x1="1707.6" y1="471.4" x2="1859.8" y2="470.9" stroke-dasharray="3.0 12.07"/><line x1="1858.3" y1="470.9" x2="2010.2" y2="470.4" stroke-dasharray="3.0 12.04"/><line x1="2008.7" y1="470.4" x2="2160.4" y2="469.9" stroke-dasharray="3.0 12.02"/><line x1="2158.9" y1="469.9" x2="2310.3" y2="469.4" stroke-dasharray="3.0 12.00"/><line x1="2308.8" y1="469.4" x2="2460.0" y2="468.9" stroke-dasharray="3.0 11.97"/><line x1="2458.5" y1="468.9" x2="2609.5" y2="468.3" stroke-dasharray="3.0 11.95"/></g><g stroke="#fff" stroke-opacity="0.051" stroke-width="1.8"><line x1="-111.5" y1="472.9" x2="42.6" y2="472.3" stroke-dasharray="3.0 12.26"/><line x1="41.1" y1="472.3" x2="194.9" y2="471.8" stroke-dasharray="3.0 12.23"/><line x1="193.4" y1="471.8" x2="347.0" y2="471.3" stroke-dasharray="3.0 12.21"/><line x1="345.5" y1="471.3" x2="498.8" y2="470.8" stroke-dasharray="3.0 12.18"/><line x1="497.3" y1="470.8" x2="650.4" y2="470.3" stroke-dasharray="3.0 12.16"/><line x1="648.9" y1="470.3" x2="801.8" y2="469.8" stroke-dasharray="3.0 12.14"/><line x1="800.3" y1="469.8" x2="952.9" y2="469.3" stroke-dasharray="3.0 12.11"/><line x1="951.4" y1="469.3" x2="1103.7" y2="468.8" stroke-dasharray="3.0 12.09"/><line x1="1102.2" y1="468.8" x2="1254.4" y2="468.3" stroke-dasharray="3.0 12.06"/><line x1="1252.9" y1="468.3" x2="1404.7" y2="467.8" stroke-dasharray="3.0 12.04"/><line x1="1403.2" y1="467.8" x2="1554.9" y2="467.3" stroke-dasharray="3.0 12.01"/><line x1="1553.4" y1="467.3" x2="1704.8" y2="466.8" stroke-dasharray="3.0 11.99"/><line x1="1703.3" y1="466.8" x2="1854.5" y2="466.3" stroke-dasharray="3.0 11.97"/><line x1="1853.0" y1="466.3" x2="2003.9" y2="465.8" stroke-dasharray="3.0 11.94"/><line x1="2002.4" y1="465.8" x2="2153.1" y2="465.3" stroke-dasharray="3.0 11.92"/><line x1="2151.6" y1="465.3" x2="2302.0" y2="464.8" stroke-dasharray="3.0 11.90"/><line x1="2300.5" y1="464.8" x2="2450.8" y2="464.3" stroke-dasharray="3.0 11.87"/><line x1="2449.3" y1="464.3" x2="2599.2" y2="463.8" stroke-dasharray="3.0 11.85"/></g><g stroke="#fff" stroke-opacity="0.050" stroke-width="1.8"><line x1="-103.6" y1="468.2" x2="49.4" y2="467.7" stroke-dasharray="3.0 12.15"/><line x1="47.9" y1="467.7" x2="200.7" y2="467.2" stroke-dasharray="3.0 12.13"/><line x1="199.2" y1="467.2" x2="351.8" y2="466.7" stroke-dasharray="3.0 12.11"/><line x1="350.3" y1="466.7" x2="502.6" y2="466.2" stroke-dasharray="3.0 12.08"/><line x1="501.1" y1="466.2" x2="653.2" y2="465.7" stroke-dasharray="3.0 12.06"/><line x1="651.7" y1="465.7" x2="803.5" y2="465.2" stroke-dasharray="3.0 12.03"/><line x1="802.0" y1="465.2" x2="953.6" y2="464.7" stroke-dasharray="3.0 12.01"/><line x1="952.1" y1="464.7" x2="1103.5" y2="464.2" stroke-dasharray="3.0 11.99"/><line x1="1102.0" y1="464.2" x2="1253.1" y2="463.7" stroke-dasharray="3.0 11.96"/><line x1="1251.6" y1="463.7" x2="1402.5" y2="463.2" stroke-dasharray="3.0 11.94"/><line x1="1401.0" y1="463.2" x2="1551.7" y2="462.7" stroke-dasharray="3.0 11.91"/><line x1="1550.2" y1="462.7" x2="1700.6" y2="462.2" stroke-dasharray="3.0 11.89"/><line x1="1699.1" y1="462.2" x2="1849.2" y2="461.7" stroke-dasharray="3.0 11.87"/><line x1="1847.7" y1="461.7" x2="1997.7" y2="461.2" stroke-dasharray="3.0 11.84"/><line x1="1996.2" y1="461.2" x2="2145.9" y2="460.7" stroke-dasharray="3.0 11.82"/><line x1="2144.4" y1="460.7" x2="2293.9" y2="460.2" stroke-dasharray="3.0 11.80"/><line x1="2292.4" y1="460.2" x2="2441.6" y2="459.7" stroke-dasharray="3.0 11.77"/><line x1="2440.1" y1="459.7" x2="2589.1" y2="459.2" stroke-dasharray="3.0 11.75"/></g><g stroke="#fff" stroke-opacity="0.050" stroke-width="1.8"><line x1="-95.8" y1="463.6" x2="56.2" y2="463.1" stroke-dasharray="3.0 12.05"/><line x1="54.7" y1="463.1" x2="206.5" y2="462.6" stroke-dasharray="3.0 12.03"/><line x1="205.0" y1="462.6" x2="356.6" y2="462.1" stroke-dasharray="3.0 12.00"/><line x1="355.1" y1="462.1" x2="506.4" y2="461.6" stroke-dasharray="3.0 11.98"/><line x1="504.9" y1="461.6" x2="656.0" y2="461.1" stroke-dasharray="3.0 11.96"/><line x1="654.5" y1="461.1" x2="805.3" y2="460.6" stroke-dasharray="3.0 11.93"/><line x1="803.8" y1="460.6" x2="954.4" y2="460.1" stroke-dasharray="3.0 11.91"/><line x1="952.9" y1="460.1" x2="1103.3" y2="459.7" stroke-dasharray="3.0 11.89"/><line x1="1101.8" y1="459.7" x2="1251.9" y2="459.2" stroke-dasharray="3.0 11.86"/><line x1="1250.4" y1="459.2" x2="1400.3" y2="458.7" stroke-dasharray="3.0 11.84"/><line x1="1398.8" y1="458.7" x2="1548.5" y2="458.2" stroke-dasharray="3.0 11.82"/><line x1="1547.0" y1="458.2" x2="1696.4" y2="457.7" stroke-dasharray="3.0 11.79"/><line x1="1694.9" y1="457.7" x2="1844.1" y2="457.2" stroke-dasharray="3.0 11.77"/><line x1="1842.6" y1="457.2" x2="1991.6" y2="456.7" stroke-dasharray="3.0 11.75"/><line x1="1990.1" y1="456.7" x2="2138.8" y2="456.2" stroke-dasharray="3.0 11.72"/><line x1="2137.3" y1="456.2" x2="2285.8" y2="455.7" stroke-dasharray="3.0 11.70"/><line x1="2284.3" y1="455.7" x2="2432.6" y2="455.3" stroke-dasharray="3.0 11.68"/><line x1="2431.1" y1="455.3" x2="2579.1" y2="454.8" stroke-dasharray="3.0 11.65"/></g><g stroke="#fff" stroke-opacity="0.049" stroke-width="1.8"><line x1="-88.1" y1="459.1" x2="62.9" y2="458.6" stroke-dasharray="3.0 11.95"/><line x1="61.4" y1="458.6" x2="212.2" y2="458.1" stroke-dasharray="3.0 11.93"/><line x1="210.7" y1="458.1" x2="361.3" y2="457.6" stroke-dasharray="3.0 11.91"/><line x1="359.8" y1="457.6" x2="510.1" y2="457.1" stroke-dasharray="3.0 11.88"/><line x1="508.6" y1="457.1" x2="658.7" y2="456.6" stroke-dasharray="3.0 11.86"/><line x1="657.2" y1="456.6" x2="807.0" y2="456.2" stroke-dasharray="3.0 11.84"/><line x1="805.5" y1="456.2" x2="955.2" y2="455.7" stroke-dasharray="3.0 11.81"/><line x1="953.7" y1="455.7" x2="1103.0" y2="455.2" stroke-dasharray="3.0 11.79"/><line x1="1101.5" y1="455.2" x2="1250.7" y2="454.7" stroke-dasharray="3.0 11.77"/><line x1="1249.2" y1="454.7" x2="1398.1" y2="454.2" stroke-dasharray="3.0 11.74"/><line x1="1396.6" y1="454.2" x2="1545.3" y2="453.7" stroke-dasharray="3.0 11.72"/><line x1="1543.8" y1="453.7" x2="1692.3" y2="453.2" stroke-dasharray="3.0 11.70"/><line x1="1690.8" y1="453.2" x2="1839.0" y2="452.8" stroke-dasharray="3.0 11.67"/><line x1="1837.5" y1="452.8" x2="1985.5" y2="452.3" stroke-dasharray="3.0 11.65"/><line x1="1984.0" y1="452.3" x2="2131.8" y2="451.8" stroke-dasharray="3.0 11.63"/><line x1="2130.3" y1="451.8" x2="2277.8" y2="451.3" stroke-dasharray="3.0 11.60"/><line x1="2276.3" y1="451.3" x2="2423.6" y2="450.8" stroke-dasharray="3.0 11.58"/><line x1="2422.1" y1="450.8" x2="2569.2" y2="450.4" stroke-dasharray="3.0 11.56"/></g><g stroke="#fff" stroke-opacity="0.049" stroke-width="1.8"><line x1="-80.5" y1="454.6" x2="69.6" y2="454.1" stroke-dasharray="3.0 11.85"/><line x1="68.1" y1="454.1" x2="217.9" y2="453.6" stroke-dasharray="3.0 11.83"/><line x1="216.4" y1="453.7" x2="365.9" y2="453.2" stroke-dasharray="3.0 11.81"/><line x1="364.4" y1="453.2" x2="513.8" y2="452.7" stroke-dasharray="3.0 11.78"/><line x1="512.3" y1="452.7" x2="661.4" y2="452.2" stroke-dasharray="3.0 11.76"/><line x1="659.9" y1="452.2" x2="808.7" y2="451.7" stroke-dasharray="3.0 11.74"/><line x1="807.2" y1="451.7" x2="955.9" y2="451.2" stroke-dasharray="3.0 11.71"/><line x1="954.4" y1="451.2" x2="1102.8" y2="450.8" stroke-dasharray="3.0 11.69"/><line x1="1101.3" y1="450.8" x2="1249.5" y2="450.3" stroke-dasharray="3.0 11.67"/><line x1="1248.0" y1="450.3" x2="1396.0" y2="449.8" stroke-dasharray="3.0 11.65"/><line x1="1394.5" y1="449.8" x2="1542.2" y2="449.3" stroke-dasharray="3.0 11.62"/><line x1="1540.7" y1="449.3" x2="1688.2" y2="448.9" stroke-dasharray="3.0 11.60"/><line x1="1686.7" y1="448.9" x2="1834.0" y2="448.4" stroke-dasharray="3.0 11.58"/><line x1="1832.5" y1="448.4" x2="1979.5" y2="447.9" stroke-dasharray="3.0 11.56"/><line x1="1978.0" y1="447.9" x2="2124.9" y2="447.4" stroke-dasharray="3.0 11.53"/><line x1="2123.4" y1="447.4" x2="2270.0" y2="447.0" stroke-dasharray="3.0 11.51"/><line x1="2268.5" y1="447.0" x2="2414.8" y2="446.5" stroke-dasharray="3.0 11.49"/><line x1="2413.3" y1="446.5" x2="2559.5" y2="446.0" stroke-dasharray="3.0 11.47"/></g><g stroke="#fff" stroke-opacity="0.054" stroke-width="2.0"><line x1="-73.0" y1="450.2" x2="76.1" y2="449.7" stroke-dasharray="3.0 11.76"/><line x1="74.6" y1="449.7" x2="223.4" y2="449.3" stroke-dasharray="3.0 11.73"/><line x1="221.9" y1="449.3" x2="370.5" y2="448.8" stroke-dasharray="3.0 11.71"/><line x1="369.0" y1="448.8" x2="517.4" y2="448.3" stroke-dasharray="3.0 11.69"/><line x1="515.9" y1="448.3" x2="664.0" y2="447.8" stroke-dasharray="3.0 11.66"/><line x1="662.5" y1="447.8" x2="810.4" y2="447.4" stroke-dasharray="3.0 11.64"/><line x1="808.9" y1="447.4" x2="956.6" y2="446.9" stroke-dasharray="3.0 11.62"/><line x1="955.1" y1="446.9" x2="1102.6" y2="446.4" stroke-dasharray="3.0 11.60"/><line x1="1101.1" y1="446.4" x2="1248.3" y2="445.9" stroke-dasharray="3.0 11.57"/><line x1="1246.8" y1="445.9" x2="1393.8" y2="445.5" stroke-dasharray="3.0 11.55"/><line x1="1392.3" y1="445.5" x2="1539.1" y2="445.0" stroke-dasharray="3.0 11.53"/><line x1="1537.6" y1="445.0" x2="1684.2" y2="444.5" stroke-dasharray="3.0 11.51"/><line x1="1682.7" y1="444.5" x2="1829.0" y2="444.1" stroke-dasharray="3.0 11.48"/><line x1="1827.5" y1="444.1" x2="1973.6" y2="443.6" stroke-dasharray="3.0 11.46"/><line x1="1972.1" y1="443.6" x2="2118.0" y2="443.1" stroke-dasharray="3.0 11.44"/><line x1="2116.5" y1="443.1" x2="2262.2" y2="442.6" stroke-dasharray="3.0 11.42"/><line x1="2260.7" y1="442.7" x2="2406.1" y2="442.2" stroke-dasharray="3.0 11.39"/><line x1="2404.6" y1="442.2" x2="2549.9" y2="441.7" stroke-dasharray="3.0 11.37"/></g><g stroke="#a0a0a0" stroke-width="4.4" stroke-opacity="0.28" stroke-linecap="round"><line x1="282.4" y1="133.7" x2="1969.6" y2="131.2"/><line x1="1969.6" y1="131.2" x2="1670.6" y2="14.6"/><line x1="1670.6" y1="14.6" x2="546.5" y2="15"/><line x1="546.5" y1="15" x2="282.4" y2="133.7"/><line x1="404.3" y1="875.3" x2="1837" y2="868.5"/><line x1="1837" y1="868.5" x2="1609" y2="543.6"/><line x1="1609" y1="543.6" x2="604.4" y2="547.6"/><line x1="604.4" y1="547.6" x2="404.3" y2="875.3"/><line x1="282.4" y1="133.7" x2="404.3" y2="875.3"/><line x1="1969.6" y1="131.2" x2="1837" y2="868.5"/><line x1="546.5" y1="15" x2="604.4" y2="547.6"/><line x1="1670.6" y1="14.6" x2="1609" y2="543.6"/></g><g stroke="#a4a4a4" stroke-width="2" stroke-linecap="round"><line x1="282.4" y1="133.7" x2="1969.6" y2="131.2"/><line x1="1969.6" y1="131.2" x2="1670.6" y2="14.6"/><line x1="1670.6" y1="14.6" x2="546.5" y2="15"/><line x1="546.5" y1="15" x2="282.4" y2="133.7"/><line x1="404.3" y1="875.3" x2="1837" y2="868.5"/><line x1="1837" y1="868.5" x2="1609" y2="543.6"/><line x1="1609" y1="543.6" x2="604.4" y2="547.6"/><line x1="604.4" y1="547.6" x2="404.3" y2="875.3"/><line x1="282.4" y1="133.7" x2="404.3" y2="875.3"/><line x1="1969.6" y1="131.2" x2="1837" y2="868.5"/><line x1="546.5" y1="15" x2="604.4" y2="547.6"/><line x1="1670.6" y1="14.6" x2="1609" y2="543.6"/></g><g stroke-width="2.6" stroke-linecap="round"><line x1="404.3" y1="875.3" x2="645" y2="874.2" stroke="#f0a0a0"/><line x1="404.3" y1="875.3" x2="367" y2="654.5" stroke="#90e090"/><line x1="404.3" y1="875.3" x2="467" y2="770.6" stroke="#a0d8f0"/></g><g stroke="#b8b8b8" stroke-width="1.3" fill="none" stroke-linejoin="round"><line x1="602" y1="346.7" x2="809.2" y2="274.2"/><line x1="809.2" y1="274.2" x2="842.9" y2="278.7"/><line x1="602" y1="346.7" x2="637" y2="351.5"/><line x1="602" y1="346.7" x2="633" y2="652.2"/><line x1="637" y1="351.5" x2="667.2" y2="661"/><line x1="842.9" y1="278.7" x2="857.2" y2="554.2"/><line x1="809.2" y1="274.2" x2="823" y2="550.4"/><line x1="633" y1="652.2" x2="667.2" y2="661"/><line x1="667.2" y1="661" x2="857.2" y2="554.2"/><line x1="857.2" y1="554.2" x2="823" y2="550.4"/><line x1="823" y1="550.4" x2="633" y2="652.2"/><line x1="637" y1="351.5" x2="842.9" y2="278.7" stroke-width="2"/><polyline points="637,351.5 783.9,317.8 842.9,278.7" fill="none"/><ellipse cx="751.8" cy="601.4" rx="91.5" ry="29.5" transform="rotate(-5 751.8 601.4)" fill="none"/><line x1="664.2" y1="508.9" x2="699.6" y2="492.7"/><line x1="699.6" y1="492.7" x2="793.3" y2="509.6"/><line x1="793.3" y1="509.6" x2="760.1" y2="526.9"/><line x1="664.2" y1="508.9" x2="760.1" y2="526.9"/><line x1="664.2" y1="508.9" x2="676.6" y2="639.8"/><line x1="760.1" y1="526.9" x2="769.3" y2="660.4"/><line x1="793.3" y1="509.6" x2="801.8" y2="641"/><line x1="699.6" y1="492.7" x2="709.7" y2="622.7"/><line x1="676.6" y1="639.8" x2="769.3" y2="660.4"/><line x1="769.3" y1="660.4" x2="801.8" y2="641"/><line x1="801.8" y1="641" x2="709.7" y2="622.7"/><line x1="709.7" y1="622.7" x2="676.6" y2="639.8"/><polyline points="664.2,508.9 676.5,534.8 760.1,526.9" fill="none"/><ellipse cx="737.4" cy="641.6" rx="95.6" ry="37.8" transform="rotate(-4 737.4 641.6)" fill="none"/><line x1="872.6" y1="404.1" x2="982.7" y2="374.3"/><line x1="982.7" y1="374.3" x2="1019.4" y2="384.1"/><line x1="872.6" y1="404.1" x2="910.3" y2="415"/><line x1="872.6" y1="404.1" x2="884.1" y2="649.5"/><line x1="910.3" y1="415" x2="920.8" y2="662.1"/><line x1="1019.4" y1="384.1" x2="1022.6" y2="622.2"/><line x1="982.7" y1="374.3" x2="985.9" y2="608.6"/><line x1="884.1" y1="649.5" x2="920.8" y2="662.1"/><line x1="920.8" y1="662.1" x2="1022.6" y2="622.2"/><line x1="1022.6" y1="622.2" x2="985.9" y2="608.6"/><line x1="985.9" y1="608.6" x2="884.1" y2="649.5"/><line x1="910.3" y1="415" x2="1019.4" y2="384.1" stroke-width="1.8"/><polyline points="910.3,415 1004.7,409.9 1019.4,384.1" fill="none"/><ellipse cx="961.7" cy="639" rx="94.4" ry="35.7" transform="rotate(-3 961.7 639)" fill="none"/><line x1="1227.2" y1="368.3" x2="1392.5" y2="358.9"/><line x1="1392.5" y1="358.9" x2="1410.3" y2="372.1"/><line x1="1227.2" y1="368.3" x2="1242" y2="379.5"/><line x1="1242" y1="379.5" x2="1410.3" y2="372.1"/><line x1="1227.2" y1="368.3" x2="1217.8" y2="740.2"/><line x1="1242" y1="379.5" x2="1229.3" y2="762.2"/><line x1="1410.3" y1="372.1" x2="1385.6" y2="746.1"/><line x1="1392.5" y1="358.9" x2="1369" y2="724.4"/><line x1="1217.8" y1="740.2" x2="1229.3" y2="762.2"/><line x1="1229.3" y1="762.2" x2="1385.6" y2="746.1"/><line x1="1385.6" y1="746.1" x2="1369" y2="724.4"/><line x1="1369" y1="724.4" x2="1217.8" y2="740.2"/><polyline points="1242,379.5 1342.4,389.9 1410.3,372.1" fill="none"/><line x1="1247.9" y1="497.6" x2="1349.7" y2="487.3"/><line x1="1349.7" y1="487.3" x2="1376.3" y2="507.9"/><line x1="1376.3" y1="507.9" x2="1268.6" y2="518.3"/><line x1="1268.6" y1="518.3" x2="1247.9" y2="497.6"/><line x1="1247.9" y1="497.6" x2="1239.8" y2="734.4"/><line x1="1268.6" y1="518.3" x2="1259.7" y2="759.1"/><line x1="1376.3" y1="507.9" x2="1358.3" y2="748.6"/><line x1="1349.7" y1="487.3" x2="1337.4" y2="722.9"/><line x1="1239.8" y1="734.4" x2="1259.7" y2="759.1"/><line x1="1259.7" y1="759.1" x2="1358.3" y2="748.6"/><line x1="1358.3" y1="748.6" x2="1337.4" y2="722.9"/><line x1="1337.4" y1="722.9" x2="1239.8" y2="734.4"/><ellipse cx="1300.6" cy="747" rx="106.5" ry="46.7" transform="rotate(-2 1300.6 747)" fill="none"/><ellipse cx="1301.6" cy="749.5" rx="106.5" ry="46.7" transform="rotate(-2 1301.6 749.5)" fill="none"/></g><g fill="none" stroke-width="2"><polyline points="779,473 810.8,469.2 930.5,511" fill="none" stroke="#5ab4d4"/><polyline points="666,447 741,459" fill="none" stroke="#4a4488" stroke-opacity=".6"/><path d="M1100,450 Q1220,470 1282,535" stroke="#7a4a8a" stroke-opacity=".7"/><path d="M1190,552 Q1250,580 1290,660" stroke="#6a3a3a" stroke-opacity=".6"/></g><path fill="#4b40f4" d="M729 324h5v5h-5zM730 317h5v5h-5zM724 318h5v5h-5zM741 323h5v5h-5zM740 322h5v5h-5zM735 321h5v5h-5zM718 326h5v5h-5zM736 324h5v5h-5zM718 305h5v5h-5zM724 316h5v5h-5zM734 319h5v5h-5zM736 314h5v5h-5zM734 323h5v5h-5zM726 334h5v5h-5zM736 329h5v5h-5zM726 313h5v5h-5zM729 319h5v5h-5zM737 322h5v5h-5zM728 312h5v5h-5zM727 329h5v5h-5zM725 322h5v5h-5zM735 307h5v5h-5zM732 330h5v5h-5zM715 317h5v5h-5zM731 313h5v5h-5zM736 319h5v5h-5zM720 326h5v5h-5zM737 327h5v5h-5zM743 322h5v5h-5zM732 309h5v5h-5zM737 314h5v5h-5zM728 309h5v5h-5zM724 315h5v5h-5zM742 303h5v5h-5zM720 321h5v5h-5zM743 324h5v5h-5zM716 299h5v5h-5zM734 313h5v5h-5zM722 327h5v5h-5zM741 321h5v5h-5zM739 366h5v5h-5zM745 444h5v5h-5zM741 388h5v5h-5zM719 392h5v5h-5zM745 439h5v5h-5zM725 410h5v5h-5zM743 467h5v5h-5zM738 383h5v5h-5zM739 417h5v5h-5zM729 404h5v5h-5zM735 450h5v5h-5zM738 417h5v5h-5zM743 435h5v5h-5zM732 449h5v5h-5zM734 353h5v5h-5zM737 357h5v5h-5zM738 385h5v5h-5zM744 367h5v5h-5zM745 336h5v5h-5zM736 370h5v5h-5zM752 402h5v5h-5zM728 469h5v5h-5zM743 359h5v5h-5zM740 370h5v5h-5zM747 342h5v5h-5zM734 360h5v5h-5zM759 406h5v5h-5zM739 439h5v5h-5zM738 351h5v5h-5zM736 446h5v5h-5zM759 442h5v5h-5zM746 428h5v5h-5zM728 370h5v5h-5zM744 348h5v5h-5zM728 351h5v5h-5zM766 387h5v5h-5zM735 467h5v5h-5zM739 377h5v5h-5zM755 409h5v5h-5zM728 388h5v5h-5zM724 335h5v5h-5zM740 429h5v5h-5zM739 356h5v5h-5zM749 441h5v5h-5zM753 387h5v5h-5zM741 368h5v5h-5zM741 450h5v5h-5zM754 444h5v5h-5zM733 385h5v5h-5zM750 342h5v5h-5zM749 404h5v5h-5zM743 445h5v5h-5zM735 381h5v5h-5zM739 426h5v5h-5zM744 354h5v5h-5zM720 389h5v5h-5zM749 389h5v5h-5zM737 409h5v5h-5zM739 398h5v5h-5zM745 452h5v5h-5zM731 430h5v5h-5zM722 401h5v5h-5zM729 353h5v5h-5zM739 365h5v5h-5zM741 391h5v5h-5zM729 390h5v5h-5zM735 396h5v5h-5zM715 412h5v5h-5zM757 413h5v5h-5zM715 366h5v5h-5zM743 451h5v5h-5zM745 401h5v5h-5zM728 336h5v5h-5zM748 468h5v5h-5zM752 441h5v5h-5zM744 488h5v5h-5zM708 395h5v5h-5zM745 456h5v5h-5zM735 413h5v5h-5zM737 380h5v5h-5zM737 412h5v5h-5zM729 375h5v5h-5zM753 349h5v5h-5zM746 469h5v5h-5zM737 340h5v5h-5zM717 369h5v5h-5zM739 451h5v5h-5zM725 451h5v5h-5zM750 359h5v5h-5zM760 406h5v5h-5zM741 418h5v5h-5zM758 458h5v5h-5zM732 410h5v5h-5zM739 464h5v5h-5zM739 413h5v5h-5zM743 365h5v5h-5zM732 397h5v5h-5zM731 379h5v5h-5zM745 387h5v5h-5zM734 332h5v5h-5zM714 370h5v5h-5zM741 346h5v5h-5zM744 396h5v5h-5zM728 380h5v5h-5zM746 372h5v5h-5zM732 427h5v5h-5zM738 352h5v5h-5zM739 441h5v5h-5zM747 336h5v5h-5zM738 434h5v5h-5zM732 381h5v5h-5zM736 424h5v5h-5zM732 462h5v5h-5zM736 472h5v5h-5zM727 350h5v5h-5zM745 490h5v5h-5zM739 470h5v5h-5zM743 480h5v5h-5zM742 485h5v5h-5zM743 474h5v5h-5zM748 485h5v5h-5zM745 477h5v5h-5zM743 488h5v5h-5zM751 487h5v5h-5zM745 486h5v5h-5zM731 483h5v5h-5zM748 484h5v5h-5zM741 485h5v5h-5zM744 475h5v5h-5zM751 486h5v5h-5zM737 478h5v5h-5zM743 488h5v5h-5zM744 484h5v5h-5zM741 482h5v5h-5zM744 492h5v5h-5zM697 369h5v5h-5zM657 393h5v5h-5zM675 381h5v5h-5zM638 389h5v5h-5zM720 368h5v5h-5zM645 403h5v5h-5zM729 362h5v5h-5zM652 381h5v5h-5zM688 374h5v5h-5zM689 394h5v5h-5zM722 368h5v5h-5zM710 364h5v5h-5zM620 408h5v5h-5zM708 369h5v5h-5zM671 395h5v5h-5zM636 415h5v5h-5zM682 377h5v5h-5zM708 367h5v5h-5zM730 361h5v5h-5zM678 386h5v5h-5zM685 391h5v5h-5zM724 346h5v5h-5zM723 361h5v5h-5zM631 409h5v5h-5zM695 380h5v5h-5zM683 381h5v5h-5zM731 370h5v5h-5zM701 373h5v5h-5zM693 373h5v5h-5zM702 375h5v5h-5zM631 386h5v5h-5zM617 401h5v5h-5zM719 354h5v5h-5zM644 390h5v5h-5zM723 360h5v5h-5zM674 389h5v5h-5zM654 393h5v5h-5zM655 399h5v5h-5zM687 384h5v5h-5zM711 366h5v5h-5zM723 358h5v5h-5zM682 386h5v5h-5zM714 367h5v5h-5zM700 382h5v5h-5zM634 394h5v5h-5zM676 380h5v5h-5zM696 380h5v5h-5zM632 412h5v5h-5zM664 386h5v5h-5zM698 381h5v5h-5zM693 378h5v5h-5zM637 401h5v5h-5zM658 388h5v5h-5zM672 388h5v5h-5zM636 391h5v5h-5zM625 410h5v5h-5zM698 366h5v5h-5zM627 394h5v5h-5zM637 398h5v5h-5zM722 356h5v5h-5zM627 399h5v5h-5zM712 377h5v5h-5zM655 394h5v5h-5zM665 382h5v5h-5zM701 371h5v5h-5zM677 380h5v5h-5zM665 385h5v5h-5zM702 391h5v5h-5zM652 394h5v5h-5zM671 378h5v5h-5zM691 359h5v5h-5zM708 373h5v5h-5zM680 377h5v5h-5zM642 389h5v5h-5zM710 369h5v5h-5zM641 404h5v5h-5zM642 413h5v5h-5zM676 389h5v5h-5zM674 366h5v5h-5zM706 370h5v5h-5zM729 379h5v5h-5zM690 381h5v5h-5zM722 348h5v5h-5zM723 382h5v5h-5zM726 375h5v5h-5zM713 380h5v5h-5zM711 373h5v5h-5zM697 388h5v5h-5zM711 369h5v5h-5zM718 359h5v5h-5zM722 376h5v5h-5zM717 370h5v5h-5zM713 371h5v5h-5zM718 360h5v5h-5zM706 370h5v5h-5zM725 390h5v5h-5zM722 382h5v5h-5zM722 373h5v5h-5zM718 381h5v5h-5zM703 351h5v5h-5zM720 374h5v5h-5zM688 375h5v5h-5zM722 381h5v5h-5zM694 374h5v5h-5zM711 358h5v5h-5zM624 398h5v5h-5zM615 404h5v5h-5zM617 413h5v5h-5zM620 405h5v5h-5zM623 418h5v5h-5zM620 410h5v5h-5zM627 409h5v5h-5zM611 423h5v5h-5zM634 395h5v5h-5zM619 410h5v5h-5zM626 412h5v5h-5zM618 401h5v5h-5zM620 414h5v5h-5zM613 401h5v5h-5zM619 395h5v5h-5zM618 405h5v5h-5zM622 403h5v5h-5zM614 405h5v5h-5zM619 403h5v5h-5zM620 412h5v5h-5zM627 418h5v5h-5zM615 405h5v5h-5zM604 420h5v5h-5zM615 407h5v5h-5zM623 399h5v5h-5zM827 331h5v5h-5zM816 321h5v5h-5zM750 349h5v5h-5zM768 342h5v5h-5zM811 336h5v5h-5zM781 345h5v5h-5zM825 333h5v5h-5zM795 339h5v5h-5zM759 348h5v5h-5zM791 331h5v5h-5zM745 354h5v5h-5zM760 346h5v5h-5zM806 330h5v5h-5zM750 349h5v5h-5zM798 335h5v5h-5zM797 335h5v5h-5zM775 339h5v5h-5zM787 339h5v5h-5zM818 330h5v5h-5zM762 339h5v5h-5zM752 344h5v5h-5zM801 336h5v5h-5zM782 337h5v5h-5zM782 327h5v5h-5zM751 342h5v5h-5zM788 339h5v5h-5zM789 334h5v5h-5zM789 324h5v5h-5zM771 351h5v5h-5zM820 328h5v5h-5zM810 336h5v5h-5zM796 331h5v5h-5zM808 336h5v5h-5zM813 327h5v5h-5zM759 346h5v5h-5zM779 341h5v5h-5zM804 331h5v5h-5zM790 333h5v5h-5zM816 335h5v5h-5zM786 332h5v5h-5zM774 335h5v5h-5zM792 335h5v5h-5zM745 343h5v5h-5zM766 333h5v5h-5zM784 342h5v5h-5zM759 349h5v5h-5zM749 347h5v5h-5zM749 345h5v5h-5zM804 326h5v5h-5zM747 346h5v5h-5zM826 336h5v5h-5zM822 318h5v5h-5zM768 342h5v5h-5zM823 327h5v5h-5zM809 330h5v5h-5zM774 336h5v5h-5zM814 338h5v5h-5zM747 344h5v5h-5zM763 348h5v5h-5zM774 340h5v5h-5zM826 342h5v5h-5zM815 321h5v5h-5zM824 340h5v5h-5zM825 336h5v5h-5zM816 328h5v5h-5zM824 327h5v5h-5zM810 326h5v5h-5zM833 342h5v5h-5zM816 328h5v5h-5zM821 327h5v5h-5zM827 331h5v5h-5zM814 339h5v5h-5zM816 333h5v5h-5zM819 330h5v5h-5zM821 328h5v5h-5zM809 319h5v5h-5zM813 327h5v5h-5zM819 332h5v5h-5zM823 332h5v5h-5zM815 328h5v5h-5zM765 589h5v5h-5zM775 592h5v5h-5zM773 589h5v5h-5zM777 590h5v5h-5zM777 592h5v5h-5zM774 595h5v5h-5zM771 588h5v5h-5zM770 586h5v5h-5zM780 597h5v5h-5zM774 592h5v5h-5zM778 593h5v5h-5zM778 584h5v5h-5zM771 591h5v5h-5zM779 590h5v5h-5zM770 588h5v5h-5zM771 586h5v5h-5zM780 587h5v5h-5zM774 598h5v5h-5zM778 591h5v5h-5zM771 591h5v5h-5zM736 531h5v5h-5zM744 570h5v5h-5zM729 537h5v5h-5zM742 574h5v5h-5zM737 555h5v5h-5zM744 586h5v5h-5zM743 517h5v5h-5zM738 556h5v5h-5zM742 549h5v5h-5zM729 542h5v5h-5zM748 572h5v5h-5zM729 546h5v5h-5zM735 590h5v5h-5zM746 578h5v5h-5zM748 599h5v5h-5zM736 527h5v5h-5zM733 602h5v5h-5zM739 572h5v5h-5zM736 567h5v5h-5zM727 609h5v5h-5zM746 576h5v5h-5zM734 582h5v5h-5zM735 542h5v5h-5zM743 602h5v5h-5zM743 533h5v5h-5z"/><path fill="#40c2f6" d="M951 392h5v5h-5zM962 401h5v5h-5zM948 396h5v5h-5zM945 400h5v5h-5zM950 392h5v5h-5zM953 411h5v5h-5zM950 392h5v5h-5zM947 401h5v5h-5zM947 388h5v5h-5zM957 386h5v5h-5zM940 394h5v5h-5zM950 385h5v5h-5zM939 397h5v5h-5zM947 382h5v5h-5zM959 405h5v5h-5zM961 396h5v5h-5zM944 392h5v5h-5zM959 394h5v5h-5zM941 401h5v5h-5zM957 389h5v5h-5zM945 400h5v5h-5zM941 398h5v5h-5zM949 402h5v5h-5zM945 393h5v5h-5zM946 406h5v5h-5zM955 389h5v5h-5zM947 397h5v5h-5zM949 399h5v5h-5zM943 392h5v5h-5zM963 403h5v5h-5zM945 406h5v5h-5zM959 382h5v5h-5zM952 402h5v5h-5zM951 395h5v5h-5zM958 398h5v5h-5zM936 396h5v5h-5zM952 388h5v5h-5zM958 395h5v5h-5zM941 394h5v5h-5zM946 399h5v5h-5zM941 437h5v5h-5zM958 423h5v5h-5zM919 439h5v5h-5zM961 412h5v5h-5zM930 432h5v5h-5zM995 432h5v5h-5zM981 429h5v5h-5zM1002 418h5v5h-5zM904 441h5v5h-5zM993 423h5v5h-5zM934 436h5v5h-5zM937 427h5v5h-5zM898 437h5v5h-5zM933 435h5v5h-5zM878 457h5v5h-5zM918 437h5v5h-5zM923 430h5v5h-5zM962 431h5v5h-5zM945 435h5v5h-5zM953 426h5v5h-5zM933 435h5v5h-5zM973 426h5v5h-5zM890 442h5v5h-5zM954 420h5v5h-5zM886 446h5v5h-5zM963 427h5v5h-5zM926 448h5v5h-5zM945 430h5v5h-5zM941 438h5v5h-5zM956 422h5v5h-5zM954 425h5v5h-5zM996 420h5v5h-5zM990 419h5v5h-5zM959 421h5v5h-5zM995 432h5v5h-5zM967 429h5v5h-5zM973 426h5v5h-5zM914 446h5v5h-5zM910 442h5v5h-5zM953 430h5v5h-5zM925 435h5v5h-5zM900 441h5v5h-5zM913 445h5v5h-5zM920 443h5v5h-5zM928 444h5v5h-5zM892 461h5v5h-5zM886 451h5v5h-5zM980 429h5v5h-5zM954 435h5v5h-5zM915 440h5v5h-5zM906 442h5v5h-5zM963 438h5v5h-5zM946 427h5v5h-5zM956 436h5v5h-5zM889 446h5v5h-5zM915 432h5v5h-5zM953 420h5v5h-5zM931 435h5v5h-5zM978 433h5v5h-5zM890 445h5v5h-5zM939 430h5v5h-5zM919 441h5v5h-5zM964 430h5v5h-5zM991 411h5v5h-5zM987 428h5v5h-5zM883 442h5v5h-5zM915 440h5v5h-5zM964 436h5v5h-5zM920 432h5v5h-5zM906 441h5v5h-5zM967 424h5v5h-5zM904 450h5v5h-5zM932 435h5v5h-5zM962 435h5v5h-5zM947 419h5v5h-5zM930 425h5v5h-5zM890 442h5v5h-5zM929 442h5v5h-5zM957 424h5v5h-5zM897 442h5v5h-5zM990 422h5v5h-5zM954 430h5v5h-5zM979 427h5v5h-5zM980 432h5v5h-5zM962 410h5v5h-5zM953 423h5v5h-5zM956 427h5v5h-5zM1000 433h5v5h-5zM885 439h5v5h-5zM896 434h5v5h-5zM951 421h5v5h-5zM886 455h5v5h-5zM905 446h5v5h-5zM962 419h5v5h-5zM903 440h5v5h-5zM989 430h5v5h-5zM992 431h5v5h-5zM925 428h5v5h-5zM976 432h5v5h-5zM940 426h5v5h-5zM984 428h5v5h-5zM925 437h5v5h-5zM919 449h5v5h-5zM939 434h5v5h-5zM934 433h5v5h-5zM913 450h5v5h-5zM979 429h5v5h-5zM995 424h5v5h-5zM935 430h5v5h-5zM960 427h5v5h-5zM882 446h5v5h-5zM895 449h5v5h-5zM887 457h5v5h-5zM888 454h5v5h-5zM889 441h5v5h-5zM886 456h5v5h-5zM880 444h5v5h-5zM891 451h5v5h-5zM890 442h5v5h-5zM887 447h5v5h-5zM892 463h5v5h-5zM885 458h5v5h-5zM882 451h5v5h-5zM890 449h5v5h-5zM895 454h5v5h-5zM880 445h5v5h-5zM884 440h5v5h-5zM894 450h5v5h-5zM884 453h5v5h-5zM885 460h5v5h-5zM895 457h5v5h-5zM891 458h5v5h-5zM890 452h5v5h-5zM894 454h5v5h-5zM891 461h5v5h-5zM957 413h5v5h-5zM936 510h5v5h-5zM934 493h5v5h-5zM933 466h5v5h-5zM947 507h5v5h-5zM935 461h5v5h-5zM947 466h5v5h-5zM922 466h5v5h-5zM958 500h5v5h-5zM930 512h5v5h-5zM942 422h5v5h-5zM925 447h5v5h-5zM940 469h5v5h-5zM947 460h5v5h-5zM942 437h5v5h-5zM942 429h5v5h-5zM934 491h5v5h-5zM941 487h5v5h-5zM955 438h5v5h-5zM951 433h5v5h-5zM940 436h5v5h-5zM938 474h5v5h-5zM952 492h5v5h-5zM952 491h5v5h-5zM930 442h5v5h-5zM941 468h5v5h-5zM961 438h5v5h-5zM951 430h5v5h-5zM958 442h5v5h-5zM953 517h5v5h-5zM948 442h5v5h-5zM942 426h5v5h-5zM943 448h5v5h-5zM929 504h5v5h-5zM960 475h5v5h-5zM946 436h5v5h-5zM936 488h5v5h-5zM936 450h5v5h-5zM941 520h5v5h-5zM953 495h5v5h-5zM958 521h5v5h-5zM943 501h5v5h-5zM951 462h5v5h-5zM951 439h5v5h-5zM947 518h5v5h-5zM942 448h5v5h-5zM955 434h5v5h-5zM951 476h5v5h-5zM945 433h5v5h-5zM956 466h5v5h-5zM954 446h5v5h-5zM935 502h5v5h-5zM952 436h5v5h-5zM939 512h5v5h-5zM950 479h5v5h-5zM949 488h5v5h-5zM934 466h5v5h-5zM945 467h5v5h-5zM943 487h5v5h-5zM948 473h5v5h-5zM943 436h5v5h-5zM939 455h5v5h-5zM922 480h5v5h-5zM953 529h5v5h-5zM954 493h5v5h-5zM938 484h5v5h-5zM951 438h5v5h-5zM939 514h5v5h-5zM942 493h5v5h-5zM937 500h5v5h-5zM953 471h5v5h-5zM956 459h5v5h-5zM946 471h5v5h-5zM946 463h5v5h-5zM933 517h5v5h-5zM942 490h5v5h-5zM945 442h5v5h-5zM923 493h5v5h-5zM956 456h5v5h-5zM952 446h5v5h-5zM932 539h5v5h-5zM947 468h5v5h-5zM950 472h5v5h-5zM951 454h5v5h-5zM944 448h5v5h-5zM949 479h5v5h-5zM939 509h5v5h-5zM955 498h5v5h-5zM954 418h5v5h-5zM949 466h5v5h-5zM953 472h5v5h-5zM944 528h5v5h-5zM938 495h5v5h-5zM942 498h5v5h-5zM957 473h5v5h-5zM933 461h5v5h-5zM944 454h5v5h-5zM917 509h5v5h-5zM936 424h5v5h-5zM950 463h5v5h-5zM943 538h5v5h-5zM938 613h5v5h-5zM934 583h5v5h-5zM939 599h5v5h-5zM940 541h5v5h-5zM941 617h5v5h-5zM941 627h5v5h-5zM948 578h5v5h-5zM930 530h5v5h-5zM931 623h5v5h-5zM943 547h5v5h-5zM943 532h5v5h-5zM940 576h5v5h-5zM944 625h5v5h-5zM941 528h5v5h-5zM956 546h5v5h-5zM952 551h5v5h-5zM938 603h5v5h-5zM937 588h5v5h-5zM942 535h5v5h-5zM933 601h5v5h-5zM935 530h5v5h-5zM957 616h5v5h-5zM943 556h5v5h-5zM945 576h5v5h-5zM942 598h5v5h-5zM950 637h5v5h-5zM953 531h5v5h-5zM943 540h5v5h-5zM939 564h5v5h-5zM953 627h5v5h-5zM935 590h5v5h-5zM951 631h5v5h-5zM947 548h5v5h-5zM959 527h5v5h-5zM947 558h5v5h-5zM964 626h5v5h-5zM942 539h5v5h-5zM941 541h5v5h-5zM954 555h5v5h-5zM949 615h5v5h-5zM946 540h5v5h-5zM936 531h5v5h-5zM945 571h5v5h-5zM941 641h5v5h-5zM938 540h5v5h-5zM949 581h5v5h-5zM942 533h5v5h-5zM937 546h5v5h-5zM944 624h5v5h-5zM957 616h5v5h-5zM946 560h5v5h-5zM951 537h5v5h-5zM937 566h5v5h-5zM937 518h5v5h-5zM933 578h5v5h-5zM956 617h5v5h-5zM941 575h5v5h-5zM942 630h5v5h-5zM961 590h5v5h-5zM928 517h5v5h-5zM937 548h5v5h-5zM944 555h5v5h-5zM950 595h5v5h-5zM939 526h5v5h-5zM939 590h5v5h-5zM960 625h5v5h-5zM936 612h5v5h-5zM949 638h5v5h-5zM937 610h5v5h-5zM957 634h5v5h-5zM956 624h5v5h-5zM959 636h5v5h-5zM959 628h5v5h-5zM959 627h5v5h-5zM968 626h5v5h-5zM961 623h5v5h-5zM959 630h5v5h-5zM970 639h5v5h-5zM956 628h5v5h-5zM953 628h5v5h-5zM963 633h5v5h-5zM965 624h5v5h-5zM956 622h5v5h-5zM971 623h5v5h-5zM968 631h5v5h-5zM967 621h5v5h-5zM965 632h5v5h-5zM962 632h5v5h-5zM956 637h5v5h-5zM957 629h5v5h-5zM967 632h5v5h-5zM971 629h5v5h-5zM957 631h5v5h-5zM965 621h5v5h-5zM967 636h5v5h-5zM958 634h5v5h-5zM963 635h5v5h-5z"/><path fill="#b0f552" d="M702 523h5v5h-5zM751 521h5v5h-5zM768 531h5v5h-5zM727 513h5v5h-5zM787 537h5v5h-5zM781 532h5v5h-5zM708 524h5v5h-5zM775 524h5v5h-5zM767 527h5v5h-5zM703 528h5v5h-5zM704 528h5v5h-5zM687 528h5v5h-5zM756 531h5v5h-5zM773 534h5v5h-5zM755 526h5v5h-5zM732 517h5v5h-5zM754 526h5v5h-5zM782 537h5v5h-5zM707 523h5v5h-5zM764 529h5v5h-5zM727 522h5v5h-5zM700 523h5v5h-5zM770 544h5v5h-5zM717 531h5v5h-5zM743 526h5v5h-5zM696 515h5v5h-5zM763 526h5v5h-5zM718 529h5v5h-5zM695 522h5v5h-5zM706 534h5v5h-5zM729 529h5v5h-5zM703 524h5v5h-5zM763 521h5v5h-5zM720 525h5v5h-5zM767 523h5v5h-5zM694 526h5v5h-5zM750 528h5v5h-5zM776 536h5v5h-5zM714 512h5v5h-5zM704 526h5v5h-5zM716 522h5v5h-5zM725 536h5v5h-5zM772 536h5v5h-5zM684 534h5v5h-5zM766 524h5v5h-5zM704 521h5v5h-5zM706 524h5v5h-5zM729 514h5v5h-5zM733 517h5v5h-5zM696 520h5v5h-5zM766 525h5v5h-5zM745 518h5v5h-5zM707 512h5v5h-5zM762 519h5v5h-5zM752 522h5v5h-5zM716 520h5v5h-5zM731 513h5v5h-5zM750 531h5v5h-5zM729 518h5v5h-5zM758 525h5v5h-5zM754 520h5v5h-5zM738 521h5v5h-5zM747 531h5v5h-5zM779 534h5v5h-5zM737 521h5v5h-5zM732 514h5v5h-5zM728 529h5v5h-5zM705 518h5v5h-5zM775 540h5v5h-5zM727 524h5v5h-5zM733 522h5v5h-5zM728 517h5v5h-5zM714 531h5v5h-5zM778 533h5v5h-5zM765 532h5v5h-5zM701 513h5v5h-5zM744 527h5v5h-5zM714 521h5v5h-5zM756 516h5v5h-5zM732 528h5v5h-5zM701 519h5v5h-5zM772 537h5v5h-5zM709 524h5v5h-5zM685 519h5v5h-5zM709 528h5v5h-5zM725 516h5v5h-5zM733 517h5v5h-5zM697 513h5v5h-5zM772 537h5v5h-5zM752 525h5v5h-5zM780 531h5v5h-5zM699 526h5v5h-5zM763 532h5v5h-5zM779 530h5v5h-5zM769 526h5v5h-5zM762 520h5v5h-5zM774 539h5v5h-5zM740 516h5v5h-5zM772 531h5v5h-5zM714 527h5v5h-5zM689 524h5v5h-5zM730 522h5v5h-5zM784 532h5v5h-5zM727 519h5v5h-5zM768 535h5v5h-5zM790 538h5v5h-5zM758 527h5v5h-5zM760 525h5v5h-5zM779 535h5v5h-5zM786 534h5v5h-5zM744 534h5v5h-5zM717 523h5v5h-5zM766 535h5v5h-5zM720 518h5v5h-5zM719 517h5v5h-5zM737 528h5v5h-5zM780 527h5v5h-5zM718 526h5v5h-5zM740 517h5v5h-5zM688 512h5v5h-5zM746 593h5v5h-5zM743 547h5v5h-5zM731 585h5v5h-5zM721 624h5v5h-5zM735 589h5v5h-5zM740 620h5v5h-5zM739 577h5v5h-5zM752 552h5v5h-5zM725 626h5v5h-5zM735 611h5v5h-5zM734 567h5v5h-5zM726 570h5v5h-5zM741 639h5v5h-5zM748 543h5v5h-5zM748 590h5v5h-5zM726 537h5v5h-5zM740 634h5v5h-5zM749 583h5v5h-5zM738 554h5v5h-5zM734 524h5v5h-5zM744 648h5v5h-5zM751 544h5v5h-5zM737 550h5v5h-5zM738 519h5v5h-5zM731 622h5v5h-5zM736 591h5v5h-5zM729 658h5v5h-5zM738 611h5v5h-5zM740 600h5v5h-5zM737 558h5v5h-5zM728 627h5v5h-5zM729 566h5v5h-5zM747 619h5v5h-5zM730 560h5v5h-5zM726 587h5v5h-5zM732 625h5v5h-5zM760 571h5v5h-5zM740 602h5v5h-5zM756 596h5v5h-5zM736 607h5v5h-5zM721 640h5v5h-5zM753 588h5v5h-5zM744 561h5v5h-5zM724 568h5v5h-5zM747 634h5v5h-5zM741 613h5v5h-5zM747 546h5v5h-5zM744 603h5v5h-5zM721 532h5v5h-5zM737 530h5v5h-5zM726 546h5v5h-5zM740 588h5v5h-5zM738 605h5v5h-5zM742 523h5v5h-5zM720 545h5v5h-5zM721 628h5v5h-5zM742 602h5v5h-5zM734 540h5v5h-5zM730 600h5v5h-5zM766 553h5v5h-5zM748 579h5v5h-5zM741 629h5v5h-5zM736 567h5v5h-5zM754 530h5v5h-5zM732 581h5v5h-5zM714 627h5v5h-5zM744 595h5v5h-5zM743 559h5v5h-5zM739 550h5v5h-5zM746 585h5v5h-5zM732 635h5v5h-5zM736 600h5v5h-5zM728 650h5v5h-5zM751 598h5v5h-5zM733 575h5v5h-5zM735 638h5v5h-5zM735 540h5v5h-5zM745 622h5v5h-5zM739 519h5v5h-5zM741 602h5v5h-5zM737 523h5v5h-5zM734 618h5v5h-5zM741 620h5v5h-5zM745 565h5v5h-5zM737 552h5v5h-5zM752 607h5v5h-5zM757 555h5v5h-5zM754 546h5v5h-5zM737 638h5v5h-5zM752 531h5v5h-5zM731 603h5v5h-5zM720 624h5v5h-5zM737 547h5v5h-5zM731 609h5v5h-5zM730 637h5v5h-5zM734 563h5v5h-5zM743 576h5v5h-5zM741 562h5v5h-5zM746 647h5v5h-5zM740 615h5v5h-5zM737 567h5v5h-5zM770 568h5v5h-5zM736 638h5v5h-5zM744 636h5v5h-5zM739 561h5v5h-5zM731 625h5v5h-5zM741 518h5v5h-5zM718 557h5v5h-5zM732 551h5v5h-5zM739 534h5v5h-5zM740 552h5v5h-5zM732 599h5v5h-5zM726 542h5v5h-5zM728 618h5v5h-5zM735 526h5v5h-5zM751 617h5v5h-5zM748 551h5v5h-5zM759 587h5v5h-5zM744 578h5v5h-5zM741 542h5v5h-5zM728 555h5v5h-5zM726 527h5v5h-5zM749 597h5v5h-5zM738 616h5v5h-5zM725 620h5v5h-5zM752 518h5v5h-5zM728 584h5v5h-5zM763 593h5v5h-5zM739 557h5v5h-5zM738 555h5v5h-5zM734 533h5v5h-5zM726 523h5v5h-5zM738 584h5v5h-5zM731 625h5v5h-5zM726 542h5v5h-5zM744 567h5v5h-5zM721 534h5v5h-5zM723 538h5v5h-5zM746 528h5v5h-5zM723 581h5v5h-5zM722 602h5v5h-5zM731 623h5v5h-5zM714 577h5v5h-5zM748 612h5v5h-5zM742 629h5v5h-5zM735 635h5v5h-5zM732 570h5v5h-5zM748 593h5v5h-5zM744 587h5v5h-5zM732 618h5v5h-5zM745 584h5v5h-5zM744 632h5v5h-5zM734 552h5v5h-5zM750 585h5v5h-5zM728 555h5v5h-5zM727 645h5v5h-5zM747 611h5v5h-5zM722 637h5v5h-5zM734 581h5v5h-5zM741 548h5v5h-5zM737 581h5v5h-5zM719 533h5v5h-5zM727 593h5v5h-5zM734 541h5v5h-5zM731 585h5v5h-5zM738 570h5v5h-5zM730 595h5v5h-5zM725 543h5v5h-5zM727 552h5v5h-5zM745 560h5v5h-5z"/><path fill="#d94cf2" d="M1312 388h5v5h-5zM1320 383h5v5h-5zM1313 381h5v5h-5zM1320 392h5v5h-5zM1315 388h5v5h-5zM1316 395h5v5h-5zM1324 388h5v5h-5zM1318 379h5v5h-5zM1305 388h5v5h-5zM1311 378h5v5h-5zM1323 385h5v5h-5zM1308 390h5v5h-5zM1314 389h5v5h-5zM1308 373h5v5h-5zM1311 388h5v5h-5zM1302 375h5v5h-5zM1322 399h5v5h-5zM1314 376h5v5h-5zM1312 377h5v5h-5zM1326 387h5v5h-5zM1309 388h5v5h-5zM1301 383h5v5h-5zM1316 381h5v5h-5zM1309 378h5v5h-5zM1303 386h5v5h-5zM1309 386h5v5h-5zM1321 378h5v5h-5zM1307 383h5v5h-5zM1320 373h5v5h-5zM1315 376h5v5h-5zM1325 385h5v5h-5zM1304 379h5v5h-5zM1316 379h5v5h-5zM1316 385h5v5h-5zM1317 380h5v5h-5zM1325 389h5v5h-5zM1313 382h5v5h-5zM1311 373h5v5h-5zM1313 383h5v5h-5zM1313 376h5v5h-5zM1295 370h5v5h-5zM1321 370h5v5h-5zM1319 387h5v5h-5zM1315 382h5v5h-5zM1321 382h5v5h-5zM1315 388h5v5h-5zM1315 396h5v5h-5zM1308 380h5v5h-5zM1314 384h5v5h-5zM1311 395h5v5h-5zM1364 435h5v5h-5zM1273 449h5v5h-5zM1280 444h5v5h-5zM1314 452h5v5h-5zM1272 440h5v5h-5zM1233 459h5v5h-5zM1289 438h5v5h-5zM1276 437h5v5h-5zM1349 429h5v5h-5zM1312 437h5v5h-5zM1382 444h5v5h-5zM1351 446h5v5h-5zM1236 445h5v5h-5zM1365 435h5v5h-5zM1304 428h5v5h-5zM1282 460h5v5h-5zM1259 443h5v5h-5zM1259 456h5v5h-5zM1373 448h5v5h-5zM1283 436h5v5h-5zM1268 451h5v5h-5zM1240 442h5v5h-5zM1260 441h5v5h-5zM1332 456h5v5h-5zM1285 438h5v5h-5zM1369 440h5v5h-5zM1225 458h5v5h-5zM1262 444h5v5h-5zM1304 431h5v5h-5zM1353 451h5v5h-5zM1276 433h5v5h-5zM1375 440h5v5h-5zM1286 432h5v5h-5zM1390 447h5v5h-5zM1361 434h5v5h-5zM1248 453h5v5h-5zM1379 436h5v5h-5zM1392 444h5v5h-5zM1375 459h5v5h-5zM1344 443h5v5h-5zM1303 456h5v5h-5zM1260 438h5v5h-5zM1237 447h5v5h-5zM1322 428h5v5h-5zM1315 443h5v5h-5zM1242 444h5v5h-5zM1318 447h5v5h-5zM1340 445h5v5h-5zM1374 456h5v5h-5zM1367 442h5v5h-5zM1248 444h5v5h-5zM1306 439h5v5h-5zM1311 450h5v5h-5zM1308 444h5v5h-5zM1296 446h5v5h-5zM1276 437h5v5h-5zM1396 443h5v5h-5zM1312 428h5v5h-5zM1344 455h5v5h-5zM1254 448h5v5h-5zM1286 441h5v5h-5zM1385 447h5v5h-5zM1254 436h5v5h-5zM1352 443h5v5h-5zM1330 440h5v5h-5zM1324 424h5v5h-5zM1289 433h5v5h-5zM1401 443h5v5h-5zM1293 443h5v5h-5zM1268 431h5v5h-5zM1251 450h5v5h-5zM1263 453h5v5h-5zM1405 441h5v5h-5zM1292 440h5v5h-5zM1378 428h5v5h-5zM1249 433h5v5h-5zM1370 449h5v5h-5zM1299 463h5v5h-5zM1339 435h5v5h-5zM1383 433h5v5h-5zM1359 426h5v5h-5zM1310 447h5v5h-5zM1363 435h5v5h-5zM1365 437h5v5h-5zM1264 444h5v5h-5zM1274 439h5v5h-5zM1255 447h5v5h-5zM1321 432h5v5h-5zM1333 450h5v5h-5zM1350 421h5v5h-5zM1361 443h5v5h-5zM1340 433h5v5h-5zM1335 426h5v5h-5zM1229 450h5v5h-5zM1251 438h5v5h-5zM1320 442h5v5h-5zM1254 459h5v5h-5zM1329 444h5v5h-5zM1271 434h5v5h-5zM1339 436h5v5h-5zM1357 445h5v5h-5zM1256 468h5v5h-5zM1291 461h5v5h-5zM1336 434h5v5h-5zM1321 437h5v5h-5zM1397 457h5v5h-5zM1256 446h5v5h-5zM1267 442h5v5h-5zM1361 449h5v5h-5zM1229 441h5v5h-5zM1298 454h5v5h-5zM1373 438h5v5h-5zM1310 448h5v5h-5zM1281 431h5v5h-5zM1277 440h5v5h-5zM1369 441h5v5h-5zM1405 447h5v5h-5zM1331 437h5v5h-5zM1363 431h5v5h-5zM1359 442h5v5h-5zM1270 441h5v5h-5zM1243 440h5v5h-5zM1225 458h5v5h-5zM1331 455h5v5h-5zM1268 441h5v5h-5zM1379 428h5v5h-5zM1323 456h5v5h-5zM1342 433h5v5h-5zM1241 438h5v5h-5zM1356 445h5v5h-5zM1315 456h5v5h-5zM1313 492h5v5h-5zM1313 412h5v5h-5zM1313 512h5v5h-5zM1318 433h5v5h-5zM1309 437h5v5h-5zM1307 434h5v5h-5zM1307 519h5v5h-5zM1293 511h5v5h-5zM1312 467h5v5h-5zM1315 407h5v5h-5zM1304 453h5v5h-5zM1301 444h5v5h-5zM1309 472h5v5h-5zM1314 426h5v5h-5zM1302 494h5v5h-5zM1307 516h5v5h-5zM1302 402h5v5h-5zM1297 487h5v5h-5zM1310 422h5v5h-5zM1299 504h5v5h-5zM1294 502h5v5h-5zM1305 493h5v5h-5zM1306 498h5v5h-5zM1299 500h5v5h-5zM1314 475h5v5h-5zM1321 442h5v5h-5zM1319 448h5v5h-5zM1302 473h5v5h-5zM1321 418h5v5h-5zM1316 508h5v5h-5zM1292 488h5v5h-5zM1308 490h5v5h-5zM1313 472h5v5h-5zM1307 471h5v5h-5zM1323 435h5v5h-5zM1308 502h5v5h-5zM1324 431h5v5h-5zM1310 507h5v5h-5zM1324 488h5v5h-5zM1324 437h5v5h-5zM1314 417h5v5h-5zM1298 446h5v5h-5zM1317 399h5v5h-5zM1309 419h5v5h-5zM1308 435h5v5h-5zM1313 508h5v5h-5zM1307 494h5v5h-5zM1319 493h5v5h-5zM1323 453h5v5h-5zM1303 480h5v5h-5zM1306 456h5v5h-5zM1323 501h5v5h-5zM1296 534h5v5h-5zM1311 407h5v5h-5zM1307 440h5v5h-5zM1309 457h5v5h-5zM1311 451h5v5h-5zM1301 485h5v5h-5zM1312 416h5v5h-5zM1302 425h5v5h-5zM1307 494h5v5h-5zM1306 495h5v5h-5zM1315 406h5v5h-5zM1307 490h5v5h-5zM1310 433h5v5h-5zM1317 473h5v5h-5zM1319 410h5v5h-5zM1311 497h5v5h-5zM1318 413h5v5h-5zM1285 495h5v5h-5zM1311 498h5v5h-5zM1312 499h5v5h-5zM1305 465h5v5h-5zM1331 430h5v5h-5zM1331 475h5v5h-5zM1311 442h5v5h-5zM1311 491h5v5h-5zM1318 410h5v5h-5zM1328 444h5v5h-5zM1307 492h5v5h-5zM1305 504h5v5h-5zM1301 424h5v5h-5zM1308 451h5v5h-5zM1320 422h5v5h-5zM1301 539h5v5h-5zM1294 565h5v5h-5zM1299 652h5v5h-5zM1305 530h5v5h-5zM1293 631h5v5h-5zM1302 690h5v5h-5zM1297 674h5v5h-5zM1298 720h5v5h-5zM1310 571h5v5h-5zM1307 591h5v5h-5zM1302 658h5v5h-5zM1320 536h5v5h-5zM1311 528h5v5h-5zM1302 739h5v5h-5zM1288 713h5v5h-5zM1305 578h5v5h-5zM1318 701h5v5h-5zM1307 691h5v5h-5zM1301 554h5v5h-5zM1315 683h5v5h-5zM1312 510h5v5h-5zM1289 702h5v5h-5zM1303 648h5v5h-5zM1299 528h5v5h-5zM1317 607h5v5h-5zM1313 510h5v5h-5zM1311 629h5v5h-5zM1301 566h5v5h-5zM1292 735h5v5h-5zM1303 523h5v5h-5zM1307 713h5v5h-5zM1304 581h5v5h-5zM1316 652h5v5h-5zM1309 521h5v5h-5zM1293 668h5v5h-5zM1293 626h5v5h-5zM1313 657h5v5h-5zM1314 689h5v5h-5zM1313 681h5v5h-5zM1285 716h5v5h-5zM1313 555h5v5h-5zM1301 683h5v5h-5zM1302 599h5v5h-5zM1315 616h5v5h-5zM1301 712h5v5h-5zM1300 735h5v5h-5zM1303 575h5v5h-5zM1318 557h5v5h-5zM1305 577h5v5h-5zM1303 708h5v5h-5zM1308 535h5v5h-5zM1295 666h5v5h-5zM1305 743h5v5h-5zM1283 659h5v5h-5zM1314 603h5v5h-5zM1304 738h5v5h-5zM1305 581h5v5h-5zM1299 552h5v5h-5zM1293 562h5v5h-5zM1301 659h5v5h-5zM1304 575h5v5h-5zM1303 679h5v5h-5zM1293 726h5v5h-5zM1291 658h5v5h-5zM1306 587h5v5h-5zM1302 524h5v5h-5zM1283 544h5v5h-5zM1299 686h5v5h-5zM1310 562h5v5h-5zM1300 601h5v5h-5zM1317 692h5v5h-5zM1304 593h5v5h-5zM1303 720h5v5h-5zM1298 692h5v5h-5zM1312 536h5v5h-5zM1299 544h5v5h-5zM1303 670h5v5h-5zM1313 538h5v5h-5zM1296 662h5v5h-5zM1321 534h5v5h-5zM1312 545h5v5h-5zM1310 691h5v5h-5zM1297 582h5v5h-5zM1305 557h5v5h-5zM1294 591h5v5h-5zM1306 573h5v5h-5zM1295 613h5v5h-5zM1304 622h5v5h-5zM1305 662h5v5h-5zM1302 526h5v5h-5zM1299 742h5v5h-5zM1310 741h5v5h-5zM1304 740h5v5h-5zM1308 745h5v5h-5zM1309 741h5v5h-5zM1304 744h5v5h-5zM1314 737h5v5h-5zM1311 741h5v5h-5zM1307 732h5v5h-5zM1317 729h5v5h-5zM1309 737h5v5h-5zM1314 737h5v5h-5zM1308 743h5v5h-5zM1310 737h5v5h-5zM1311 742h5v5h-5zM1313 737h5v5h-5zM1307 737h5v5h-5zM1303 741h5v5h-5zM1310 747h5v5h-5zM1306 742h5v5h-5zM1314 739h5v5h-5zM1308 740h5v5h-5zM1304 734h5v5h-5zM1314 740h5v5h-5zM1307 733h5v5h-5zM1308 746h5v5h-5zM1301 735h5v5h-5zM1314 747h5v5h-5zM1316 736h5v5h-5zM1311 735h5v5h-5zM1310 738h5v5h-5zM1309 747h5v5h-5zM1309 738h5v5h-5zM1308 741h5v5h-5zM1305 741h5v5h-5z"/><path fill="#f4463b" d="M1268 535h5v5h-5zM1342 549h5v5h-5zM1254 548h5v5h-5zM1282 537h5v5h-5zM1311 538h5v5h-5zM1274 540h5v5h-5zM1352 545h5v5h-5zM1350 550h5v5h-5zM1284 540h5v5h-5zM1295 552h5v5h-5zM1243 546h5v5h-5zM1286 534h5v5h-5zM1263 550h5v5h-5zM1355 546h5v5h-5zM1291 532h5v5h-5zM1254 553h5v5h-5zM1304 542h5v5h-5zM1338 530h5v5h-5zM1351 560h5v5h-5zM1307 545h5v5h-5zM1265 548h5v5h-5zM1293 540h5v5h-5zM1279 537h5v5h-5zM1331 535h5v5h-5zM1261 557h5v5h-5zM1316 525h5v5h-5zM1354 546h5v5h-5zM1342 541h5v5h-5zM1323 546h5v5h-5zM1277 539h5v5h-5zM1255 538h5v5h-5zM1293 527h5v5h-5zM1238 551h5v5h-5zM1322 537h5v5h-5zM1354 538h5v5h-5zM1299 538h5v5h-5zM1307 536h5v5h-5zM1272 537h5v5h-5zM1321 537h5v5h-5zM1273 550h5v5h-5zM1256 554h5v5h-5zM1302 544h5v5h-5zM1345 540h5v5h-5zM1321 543h5v5h-5zM1311 540h5v5h-5zM1252 559h5v5h-5zM1337 532h5v5h-5zM1312 522h5v5h-5zM1269 539h5v5h-5zM1280 534h5v5h-5zM1348 535h5v5h-5zM1278 546h5v5h-5zM1327 544h5v5h-5zM1253 559h5v5h-5zM1249 555h5v5h-5zM1327 541h5v5h-5zM1278 539h5v5h-5zM1259 554h5v5h-5zM1275 546h5v5h-5zM1278 544h5v5h-5zM1274 551h5v5h-5zM1323 554h5v5h-5zM1323 548h5v5h-5zM1276 541h5v5h-5zM1259 557h5v5h-5zM1288 535h5v5h-5zM1336 539h5v5h-5zM1316 550h5v5h-5zM1337 537h5v5h-5zM1253 539h5v5h-5zM1266 555h5v5h-5zM1256 543h5v5h-5zM1268 547h5v5h-5zM1338 543h5v5h-5zM1269 554h5v5h-5zM1311 530h5v5h-5zM1266 555h5v5h-5zM1279 548h5v5h-5zM1337 531h5v5h-5zM1355 537h5v5h-5zM1281 540h5v5h-5zM1316 541h5v5h-5zM1313 553h5v5h-5zM1339 544h5v5h-5zM1252 546h5v5h-5zM1285 532h5v5h-5zM1335 543h5v5h-5zM1284 541h5v5h-5zM1322 547h5v5h-5zM1297 527h5v5h-5zM1272 546h5v5h-5zM1348 541h5v5h-5zM1293 534h5v5h-5zM1267 547h5v5h-5zM1252 549h5v5h-5zM1291 547h5v5h-5zM1329 543h5v5h-5zM1306 550h5v5h-5zM1250 560h5v5h-5zM1264 548h5v5h-5zM1252 543h5v5h-5zM1272 556h5v5h-5zM1292 542h5v5h-5zM1277 543h5v5h-5zM1275 528h5v5h-5zM1329 546h5v5h-5zM1312 548h5v5h-5zM1326 537h5v5h-5zM1272 544h5v5h-5zM1334 546h5v5h-5zM1277 562h5v5h-5zM1305 527h5v5h-5zM1301 531h5v5h-5zM1289 549h5v5h-5zM1295 700h5v5h-5zM1284 667h5v5h-5zM1289 735h5v5h-5zM1296 697h5v5h-5zM1295 592h5v5h-5zM1304 540h5v5h-5zM1289 582h5v5h-5zM1297 692h5v5h-5zM1309 686h5v5h-5zM1299 669h5v5h-5zM1287 662h5v5h-5zM1295 527h5v5h-5zM1288 703h5v5h-5zM1299 694h5v5h-5zM1295 706h5v5h-5zM1312 655h5v5h-5zM1291 628h5v5h-5zM1300 666h5v5h-5zM1298 553h5v5h-5zM1301 523h5v5h-5zM1297 688h5v5h-5zM1302 508h5v5h-5zM1288 614h5v5h-5zM1292 732h5v5h-5zM1280 711h5v5h-5zM1291 684h5v5h-5zM1306 639h5v5h-5zM1288 691h5v5h-5zM1308 588h5v5h-5zM1296 552h5v5h-5zM1294 719h5v5h-5zM1306 715h5v5h-5zM1297 591h5v5h-5zM1288 517h5v5h-5zM1293 687h5v5h-5zM1299 667h5v5h-5zM1304 705h5v5h-5zM1295 570h5v5h-5zM1299 551h5v5h-5zM1301 679h5v5h-5zM1296 611h5v5h-5zM1306 722h5v5h-5zM1304 700h5v5h-5zM1299 612h5v5h-5zM1304 580h5v5h-5zM1286 503h5v5h-5zM1305 707h5v5h-5zM1292 715h5v5h-5zM1300 638h5v5h-5zM1297 645h5v5h-5zM1291 596h5v5h-5zM1309 519h5v5h-5zM1297 660h5v5h-5zM1296 557h5v5h-5zM1302 636h5v5h-5zM1296 622h5v5h-5zM1296 659h5v5h-5zM1299 693h5v5h-5zM1293 721h5v5h-5zM1305 503h5v5h-5zM1291 534h5v5h-5zM1289 743h5v5h-5zM1302 559h5v5h-5zM1294 589h5v5h-5zM1302 539h5v5h-5zM1297 551h5v5h-5zM1293 542h5v5h-5zM1277 728h5v5h-5zM1302 618h5v5h-5zM1303 534h5v5h-5zM1305 661h5v5h-5zM1293 584h5v5h-5zM1294 663h5v5h-5zM1295 700h5v5h-5zM1295 690h5v5h-5zM1304 642h5v5h-5zM1296 609h5v5h-5zM1296 634h5v5h-5zM1291 543h5v5h-5zM1287 677h5v5h-5zM1309 574h5v5h-5zM1301 596h5v5h-5zM1297 707h5v5h-5zM1291 575h5v5h-5zM1305 579h5v5h-5zM1308 618h5v5h-5zM1295 616h5v5h-5zM1299 635h5v5h-5zM1294 589h5v5h-5zM1290 711h5v5h-5zM1302 571h5v5h-5zM1302 660h5v5h-5zM1304 507h5v5h-5zM1306 553h5v5h-5zM1294 653h5v5h-5zM1279 715h5v5h-5zM1309 515h5v5h-5zM1301 528h5v5h-5zM1313 597h5v5h-5zM1279 662h5v5h-5zM1306 508h5v5h-5zM1300 492h5v5h-5zM1304 528h5v5h-5zM1288 623h5v5h-5zM1308 581h5v5h-5zM1299 595h5v5h-5zM1308 726h5v5h-5zM1303 543h5v5h-5zM1300 577h5v5h-5zM1297 620h5v5h-5zM1302 591h5v5h-5zM1307 597h5v5h-5zM1285 588h5v5h-5zM1305 694h5v5h-5zM1305 538h5v5h-5zM1311 660h5v5h-5zM1296 682h5v5h-5zM1287 691h5v5h-5zM1297 624h5v5h-5zM1313 718h5v5h-5zM1295 649h5v5h-5zM1312 553h5v5h-5zM1307 661h5v5h-5zM1292 671h5v5h-5zM1297 556h5v5h-5zM1290 699h5v5h-5zM1311 723h5v5h-5zM1305 686h5v5h-5zM1307 627h5v5h-5zM1302 597h5v5h-5zM1302 684h5v5h-5zM1307 518h5v5h-5zM1296 681h5v5h-5zM1305 655h5v5h-5zM1300 678h5v5h-5zM1288 575h5v5h-5z"/><g fill="none" stroke="#bbb" stroke-width="1"><rect x="738" y="455" width="9" height="8" transform="rotate(20 742 459)"/><rect x="946" y="508" width="9" height="8" transform="rotate(20 950 512)"/><rect x="1302" y="561" width="9" height="8" transform="rotate(20 1306 565)"/><rect x="1298" y="608" width="9" height="8" transform="rotate(20 1302 612)"/></g></svg></div>
<div class="t" style="left:-37.45px;top:1526.20px;font-size:28.00px;color:#d2d2d2;transform:scaleX(1.000)">Dianta - 1.6.0b2</div>
<div class="t" style="left:-56.82px;top:1553.60px;font-size:28.00px;color:#d2d2d2;transform:scaleX(1.080)">License - David-Alexandre</div>
<div class="panel"></div>
<!-- title icon -->
<div class="abs" style="left:936px;top:939px;width:46px;height:46px;border:6px solid #ff0000;border-radius:3px"></div>
<svg class="abs" style="left:955px;top:959px" width="28" height="28" viewBox="0 0 28 28"><circle cx="14" cy="14" r="13" fill="#d26666"/><circle cx="14" cy="14" r="9.6" fill="#c24646"/><path d="M9.7 9.6 A6.3 6.3 0 1 0 18.3 9.6" fill="none" stroke="#f3e4e4" stroke-width="2.8" stroke-linecap="round"/><line x1="14" y1="6.2" x2="14" y2="13" stroke="#f3e4e4" stroke-width="2.8" stroke-linecap="round"/></svg>
<!-- quantity buttons -->
<div class="btn" style="left:308px;top:1063px;width:48px;height:42px"></div>
<div class="abs" style="left:325px;top:1082.5px;width:15px;height:3.4px;background:#fff"></div>
<div class="abs" style="left:330.8px;top:1076.5px;width:3.4px;height:15.5px;background:#fff"></div>
<div class="btn" style="left:392px;top:1063px;width:42px;height:42px"></div>
<div class="abs" style="left:408.5px;top:1082.8px;width:9px;height:3.4px;background:#fff"></div>
<div class="btn" style="left:444px;top:1063px;width:100px;height:42px"></div>
<div class="btn" style="left:1654px;top:1039px;width:220px;height:42px"></div>
<!-- selects -->
<div class="sel" style="left:584.5px;top:1065px;width:343.7px;height:37.6px"></div>
<div class="sel" style="left:969.6px;top:1065.2px;width:313.8px;height:37.6px"></div>
<div class="sel" style="left:1325px;top:1065.5px;width:288.5px;height:37px"></div>
<svg class="abs" style="left:0;top:0;overflow:visible" width="1" height="1">
<g fill="none" stroke="#000" stroke-width="2.2"><polyline points="903.5,1080.5 912,1089 920.5,1080.5"/><polyline points="1259,1080.5 1267.5,1089 1276,1080.5"/><polyline points="1589.5,1080.5 1597.5,1089 1605.5,1080.5"/></g>
<polyline points="1070,1140.5 1091.2,1119.3 1112.4,1140.5" fill="none" stroke="#808080" stroke-width="6.4"/>
</svg>
<!-- fieldsets -->
<div class="fs" style="left:322.6px;top:1159.2px;width:471.3px;height:337.2px"></div>
<div class="fs" style="left:822.5px;top:1159.3px;width:474.4px;height:276.7px"></div>
<div class="fs" style="left:1326.4px;top:1159.6px;width:533.1px;height:294.6px"></div>
<div class="row" style="left:334.4px;top:1235.5px;width:438.6px;height:61.5px"></div>
<div class="row" style="left:334.4px;top:1318.7px;width:447.3px;height:61.7px"></div>
<div class="row" style="left:589.7px;top:1511.9px;width:502.5px;height:80px"></div>
<div class="inp" style="left:405.2px;top:1247.3px;width:108.0px;height:34.0px;border-color:#8c1a0c"><div class="t" style="left:3.06px;top:1.67px;font-size:27.68px;color:#d8d8d8;transform:scaleX(0.887)">0.5</div></div>
<div class="inp" style="left:527.3px;top:1247.3px;width:107.7px;height:34.0px;border-color:#2a9a2a"><div class="t" style="left:3.16px;top:1.67px;font-size:27.68px;color:#d8d8d8;transform:scaleX(0.887)">0.5</div></div>
<div class="inp" style="left:648.8px;top:1247.3px;width:108.4px;height:34.0px;border-color:#0c10a8"><div style="position:absolute;left:0;top:0;bottom:0;width:71.70px;overflow:hidden"><div class="t" style="left:3.76px;top:1.67px;font-size:27.68px;color:#d8d8d8;transform:scaleX(0.887)">0.20000001</div></div></div>
<div class="inp" style="left:414.2px;top:1330.5px;width:107.5px;height:34.3px;border-color:#8c1a0c"><div style="position:absolute;left:0;top:0;bottom:0;width:71.80px;overflow:hidden"><div class="t" style="left:3.58px;top:1.67px;font-size:27.68px;color:#d8d8d8;transform:scaleX(0.887)">1.7999999</div></div></div>
<div class="inp" style="left:536.3px;top:1330.5px;width:107.5px;height:34.3px;border-color:#2a9a2a"><div class="t" style="left:2.47px;top:1.67px;font-size:27.68px;color:#d8d8d8;transform:scaleX(0.887)">2</div></div>
<div class="inp" style="left:658.4px;top:1330.5px;width:107.5px;height:34.3px;border-color:#0c10a8"><div style="position:absolute;left:0;top:0;bottom:0;width:71.10px;overflow:hidden"><div class="t" style="left:3.36px;top:1.67px;font-size:27.68px;color:#d8d8d8;transform:scaleX(0.887)">0.30000001</div></div></div>
<div class="inp" style="left:725.3px;top:1523.3px;width:107.7px;height:34.2px;border-color:#8c1a0c"><div class="t" style="left:3.76px;top:1.67px;font-size:27.68px;color:#d8d8d8;transform:scaleX(0.887)">0.25</div></div>
<div class="inp" style="left:847.3px;top:1523.3px;width:107.2px;height:34.2px;border-color:#2a9a2a"><div style="position:absolute;left:0;top:0;bottom:0;width:71.20px;overflow:hidden"><div class="t" style="left:3.76px;top:1.67px;font-size:27.68px;color:#d8d8d8;transform:scaleX(0.887)">0.30000001</div></div></div>
<div class="inp" style="left:969.3px;top:1523.3px;width:107.7px;height:34.2px;border-color:#0c10a8"><div class="t" style="left:3.56px;top:1.67px;font-size:27.68px;color:#d8d8d8;transform:scaleX(0.887)">0.25</div></div>
<!-- sliders -->
<div class="track" style="left:339.5px;top:1457.1px;width:255.4px;height:15.9px"><div class="fill" style="width:50px"></div></div>
<div class="thumb" style="left:372.6px;top:1449.1px;width:31.4px;height:31.4px"></div>
<div class="track" style="left:1024.9px;top:1255.5px;width:256.1px;height:14.9px"></div>
<div class="thumb" style="left:1024.5px;top:1247.2px;width:31.2px;height:31.2px"></div>
<div class="track" style="left:1024.9px;top:1331.3px;width:256.1px;height:14.9px"><div class="fill" style="width:40px"></div></div>
<div class="thumb" style="left:1046.3px;top:1322.9px;width:31.2px;height:31.2px"></div>
<div class="track" style="left:1587.2px;top:1255.5px;width:255.9px;height:15.1px"><div class="fill" style="width:26px"></div></div>
<div class="thumb" style="left:1597.4px;top:1247px;width:31.2px;height:31.2px"></div>
<div class="track" style="left:1587.2px;top:1331.3px;width:255.9px;height:15.5px"><div class="fill" style="width:60px"></div></div>
<div class="thumb" style="left:1629.9px;top:1323.2px;width:31.2px;height:31.2px"></div>
<div class="track" style="left:1587.2px;top:1407.3px;width:255.9px;height:15.5px;background:#0075d5;border-color:#3a6ea0"></div>
<div class="thumb" style="left:1812.6px;top:1399.3px;width:31.2px;height:31.2px"></div>
<!-- power icons -->
<svg class="abs" style="left:336px;top:1408.7px" width="28" height="28" viewBox="0 0 28 28"><circle cx="14" cy="14" r="12.6" fill="#5a5a5a"/><circle cx="14" cy="14" r="9.4" fill="#4f4f4f"/><path d="M9.7 9.6 A6.3 6.3 0 1 0 18.3 9.6" fill="none" stroke="#8e8e8e" stroke-width="2.8" stroke-linecap="round"/><line x1="14" y1="6.2" x2="14" y2="13" stroke="#8e8e8e" stroke-width="2.8" stroke-linecap="round"/></svg>
<svg class="abs" style="left:1340.3px;top:1324.8px" width="28" height="28" viewBox="0 0 28 28"><circle cx="14" cy="14" r="13" fill="#d26666"/><circle cx="14" cy="14" r="9.6" fill="#c24646"/><path d="M9.7 9.6 A6.3 6.3 0 1 0 18.3 9.6" fill="none" stroke="#f3e4e4" stroke-width="2.8" stroke-linecap="round"/><line x1="14" y1="6.2" x2="14" y2="13" stroke="#f3e4e4" stroke-width="2.8" stroke-linecap="round"/></svg>
<svg class="abs" style="left:1340.3px;top:1400.9px" width="28" height="28" viewBox="0 0 28 28"><circle cx="14" cy="14" r="12.6" fill="#5a5a5a"/><circle cx="14" cy="14" r="9.4" fill="#4f4f4f"/><path d="M9.7 9.6 A6.3 6.3 0 1 0 18.3 9.6" fill="none" stroke="#8e8e8e" stroke-width="2.8" stroke-linecap="round"/><line x1="14" y1="6.2" x2="14" y2="13" stroke="#8e8e8e" stroke-width="2.8" stroke-linecap="round"/></svg>
<!-- checkboxes -->
<div class="abs" style="left:1063.7px;top:1393.4px;width:25px;height:25px;background:#fff;border:2px solid #7c7c7c;border-radius:4px;box-sizing:border-box"></div>
<div class="abs" style="left:1560px;top:1517px;width:26.2px;height:26.1px;background:#0075d5;border-radius:4px"></div>
<svg class="abs" style="left:1560px;top:1517px" width="27" height="27" viewBox="0 0 27 27"><polyline points="5.5,13.5 10.8,19.5 21.3,6.5" fill="none" stroke="#fff" stroke-width="3.6"/></svg>
<!-- status bar -->
<div class="abs" style="left:1912.6px;top:1506.5px;width:600px;height:46.9px;background:rgba(30,52,78,.55);border-radius:5px"></div>
<div class="t" style="left:994.37px;top:956.27px;font-size:29.80px;font-weight:bold;color:#d2d2d2;transform:scaleX(0.9457)">Cluster Simulator</div>
<div class="t" style="left:366.62px;top:1013.20px;font-size:28.00px;font-weight:normal;color:#d2d2d2;transform:scaleX(1.1410);-webkit-text-stroke:0.35px #d2d2d2">Quantity</div>
<div class="t" style="left:706.23px;top:1015.30px;font-size:28.00px;font-weight:normal;color:#d2d2d2;transform:scaleX(1.0594);-webkit-text-stroke:0.35px #d2d2d2">Presets</div>
<div class="t" style="left:989.17px;top:1015.50px;font-size:28.00px;font-weight:normal;color:#d2d2d2;transform:scaleX(1.1009);-webkit-text-stroke:0.35px #d2d2d2">Simulation Behavior</div>
<div class="t" style="left:1343.19px;top:1015.20px;font-size:28.00px;font-weight:normal;color:#d2d2d2;transform:scaleX(1.0745);-webkit-text-stroke:0.35px #d2d2d2">Point Cloud Shape</div>
<div class="t" style="left:365.63px;top:1068.10px;font-size:28.00px;font-weight:normal;color:#d2d2d2;transform:scaleX(1.0417);-webkit-text-stroke:0.35px #d2d2d2">5</div>
<div class="t" style="left:459.91px;top:1069.05px;font-size:27.00px;font-weight:bold;color:#fff;transform:scaleX(1.0074)">Clear</div>
<div class="t" style="left:1669.67px;top:1045.25px;font-size:27.00px;font-weight:bold;color:#fff;transform:scaleX(1.0050)">Reset Defaults</div>
<div class="t" style="left:593.05px;top:1069.30px;font-size:28.00px;font-weight:normal;color:#000;transform:scaleX(0.9589)">Humans in a museum</div>
<div class="t" style="left:978.34px;top:1069.40px;font-size:28.00px;font-weight:normal;color:#000;transform:scaleX(0.9626)">Museum</div>
<div class="t" style="left:1333.16px;top:1069.30px;font-size:28.00px;font-weight:normal;color:#000;transform:scaleX(0.9569)">Human shape</div>
<div class="t" style="left:333.31px;top:1176.06px;font-size:30.40px;font-weight:bold;color:#d2d2d2;transform:scaleX(0.8941)">Clusters size</div>
<div class="t" style="left:832.79px;top:1176.06px;font-size:30.40px;font-weight:bold;color:#d2d2d2;transform:scaleX(0.9129)">Clusters velocity</div>
<div class="t" style="left:1336.98px;top:1176.26px;font-size:30.40px;font-weight:bold;color:#d2d2d2;transform:scaleX(0.9406)">Noise</div>
<div class="t" style="left:345.12px;top:1251.40px;font-size:28.00px;font-weight:normal;color:#d2d2d2;transform:scaleX(1.1088);-webkit-text-stroke:0.35px #d2d2d2">Min</div>
<div class="t" style="left:345.13px;top:1334.20px;font-size:28.00px;font-weight:normal;color:#d2d2d2;transform:scaleX(1.1037);-webkit-text-stroke:0.35px #d2d2d2">Max</div>
<div class="t" style="left:366.78px;top:1406.80px;font-size:28.00px;font-weight:normal;color:#d2d2d2;transform:scaleX(1.0876);-webkit-text-stroke:0.35px #d2d2d2">Size variation Speed</div>
<div class="t" style="left:664.42px;top:1410.90px;font-size:22.00px;font-weight:normal;color:#7c7c7c;transform:scaleX(1.0265)">0.3</div>
<div class="t" style="left:846.96px;top:1233.10px;font-size:28.00px;font-weight:normal;color:#d2d2d2;transform:scaleX(1.1333);-webkit-text-stroke:0.35px #d2d2d2">Minimal</div>
<div class="t" style="left:848.40px;top:1260.80px;font-size:28.00px;font-weight:normal;color:#d2d2d2;transform:scaleX(1.1078);-webkit-text-stroke:0.35px #d2d2d2">Velocity</div>
<div class="t" style="left:987.44px;top:1251.30px;font-size:22.00px;font-weight:normal;color:#7c7c7c;transform:scaleX(1.1503)">0</div>
<div class="t" style="left:842.76px;top:1308.90px;font-size:28.00px;font-weight:normal;color:#d2d2d2;transform:scaleX(1.1351);-webkit-text-stroke:0.35px #d2d2d2">Maximal</div>
<div class="t" style="left:848.40px;top:1336.80px;font-size:28.00px;font-weight:normal;color:#d2d2d2;transform:scaleX(1.1078);-webkit-text-stroke:0.35px #d2d2d2">Velocity</div>
<div class="t" style="left:989.20px;top:1327.00px;font-size:22.00px;font-weight:normal;color:#7c7c7c;transform:scaleX(0.9091)">1</div>
<div class="t" style="left:834.90px;top:1390.40px;font-size:28.00px;font-weight:normal;color:#d2d2d2;transform:scaleX(1.1224);-webkit-text-stroke:0.35px #d2d2d2">Vertical Velocity</div>
<div class="t" style="left:1386.73px;top:1233.10px;font-size:28.00px;font-weight:normal;color:#d2d2d2;transform:scaleX(1.1005);-webkit-text-stroke:0.35px #d2d2d2">Noise</div>
<div class="t" style="left:1357.70px;top:1261.40px;font-size:28.00px;font-weight:normal;color:#d2d2d2;transform:scaleX(1.1191);-webkit-text-stroke:0.35px #d2d2d2">Amplitude</div>
<div class="t" style="left:1524.88px;top:1251.20px;font-size:22.00px;font-weight:normal;color:#7c7c7c;transform:scaleX(1.0928)">0.05</div>
<div class="t" style="left:1408.94px;top:1309.30px;font-size:28.00px;font-weight:normal;color:#d2d2d2;transform:scaleX(1.0961);-webkit-text-stroke:0.35px #d2d2d2">Noise</div>
<div class="t" style="left:1376.48px;top:1337.40px;font-size:28.00px;font-weight:normal;color:#d2d2d2;transform:scaleX(1.0788);-webkit-text-stroke:0.35px #d2d2d2">Frequency</div>
<div class="t" style="left:1538.60px;top:1327.00px;font-size:22.00px;font-weight:normal;color:#7c7c7c;transform:scaleX(1.0655)">0.2</div>
<div class="t" style="left:1384.08px;top:1385.80px;font-size:28.00px;font-weight:normal;color:#d2d2d2;transform:scaleX(1.1479);-webkit-text-stroke:0.35px #d2d2d2">flickering</div>
<div class="t" style="left:1416.68px;top:1412.80px;font-size:28.00px;font-weight:normal;color:#d2d2d2;transform:scaleX(1.1394);-webkit-text-stroke:0.35px #d2d2d2">time</div>
<div class="t" style="left:1547.13px;top:1403.00px;font-size:22.00px;font-weight:normal;color:#7c7c7c;transform:scaleX(0.8264)">1</div>
<div class="t" style="left:600.75px;top:1527.60px;font-size:28.00px;font-weight:normal;color:#d2d2d2;transform:scaleX(1.1403);-webkit-text-stroke:0.35px #d2d2d2">Marging</div>
<div class="t" style="left:1373.88px;top:1514.20px;font-size:28.00px;font-weight:normal;color:#d2d2d2;transform:scaleX(1.0931);-webkit-text-stroke:0.35px #d2d2d2">Oriented Box</div>
<div class="t" style="left:1921.74px;top:1513.07px;font-size:29.80px;font-weight:bold;color:#4a9ad6;transform:scaleX(0.9466)">Simulator:</div>
<div class="t" style="left:2068.28px;top:1513.07px;font-size:29.80px;font-weight:normal;color:#4a9ad6;transform:scaleX(1.0261);-webkit-text-stroke:0.35px #4a9ad6">Simulator source enabled</div>
</body></html>
